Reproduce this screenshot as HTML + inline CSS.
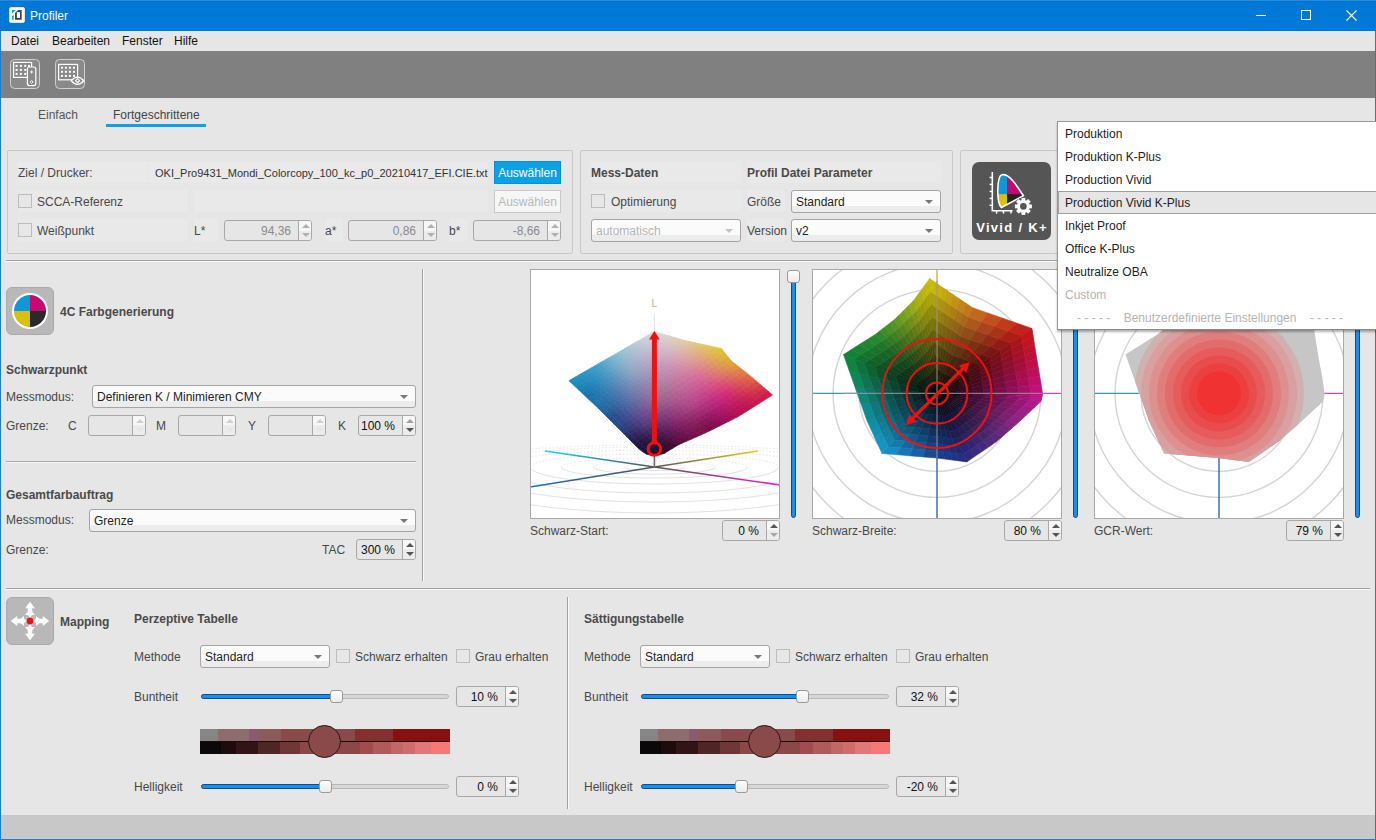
<!DOCTYPE html><html><head><meta charset="utf-8"><style>
*{margin:0;padding:0}
body{width:1376px;height:840px;overflow:hidden;background:#e6e6e6;font-family:"Liberation Sans",sans-serif;font-size:12px;color:#484848;position:relative}
.a{position:absolute}
.t{position:absolute;white-space:nowrap;line-height:14px}
.b{position:absolute;white-space:nowrap;line-height:14px;font-weight:bold;color:#4a4a4a}
.combo{box-sizing:border-box;border:1px solid #a4a4a4;border-radius:3px;background:linear-gradient(#fbfbfb 0,#fbfbfb 70%,#ececec 70%);white-space:nowrap;line-height:14px}
.tri{position:absolute;width:0;height:0;border-left:4px solid transparent;border-right:4px solid transparent;border-top:4px solid #777}
.spin{box-sizing:border-box;border:1px solid #a8a8a8;border-radius:3px;background:#e6e6e6;white-space:nowrap;line-height:14px;overflow:hidden}
.sb{position:absolute;top:0;width:14px;border-left:1px solid #a8a8a8;background:linear-gradient(#f7f7f7 0,#f7f7f7 50%,#ececec 50%)}
.up{position:absolute;left:3px;top:3px;width:0;height:0;border-left:4px solid transparent;border-right:4px solid transparent;border-bottom:4px solid #555}
.dn{position:absolute;left:3px;bottom:3px;width:0;height:0;border-left:4px solid transparent;border-right:4px solid transparent;border-top:4px solid #555}
.thumb{width:13px;height:13px;box-sizing:border-box;border:1px solid #9a9a9a;border-radius:3px;background:linear-gradient(#fdfdfd,#ececec)}
.grp{position:absolute;box-sizing:border-box;border:1px solid #c8c8c8;border-radius:2px}
.cell{position:absolute;background:#e8e8e8}
</style></head><body>
<div class="a" style="left:0px;top:0px;width:1376px;height:31px;background:#0078d7"></div>
<div class="a" style="left:0px;top:0px;width:1376px;height:1px;background:#2a8ad8"></div>
<svg class="a" style="left:9px;top:7px" width="16" height="16" viewBox="0 0 16 16"><rect x="0.5" y="0.5" width="15" height="15" rx="1.5" fill="#fff" stroke="#eadcd0"/><path d="M2.9 3H6.7L2.9 6.7z" fill="#1a9ad6"/><path d="M2.9 8.9L4.7 7.9V12.8H2.9z" fill="#1a9ad6"/><path d="M6 6L9.2 3H12.7V12.7H6z" fill="#444"/><rect x="7.9" y="5.2" width="3.1" height="5.7" fill="#fff"/></svg>
<div class="t" style="left:30px;top:9px;color:#fff;font-size:12px">Profiler</div>
<div class="a" style="left:1256px;top:15px;width:10px;height:1px;background:#fff"></div>
<div class="a" style="left:1301px;top:10px;width:10px;height:10px;box-sizing:border-box;border:1px solid #fff"></div>
<svg class="a" style="left:1346px;top:10px" width="11" height="11" viewBox="0 0 11 11"><path d="M0.5 0.5L10.5 10.5M10.5 0.5L0.5 10.5" stroke="#fff" stroke-width="1.1"/></svg>
<div class="a" style="left:0px;top:31px;width:1px;height:809px;background:#1a7fd4"></div>
<div class="a" style="left:1375px;top:31px;width:1px;height:809px;background:#1a7fd4"></div>
<div class="a" style="left:0px;top:839px;width:1376px;height:1px;background:#1a7fd4"></div>
<div class="a" style="left:1px;top:31px;width:1374px;height:20px;background:#e6e6e6"></div>
<div class="t" style="left:11px;top:34px;color:#111">Datei</div>
<div class="t" style="left:52px;top:34px;color:#111">Bearbeiten</div>
<div class="t" style="left:122px;top:34px;color:#111">Fenster</div>
<div class="t" style="left:174px;top:34px;color:#111">Hilfe</div>
<div class="a" style="left:1px;top:51px;width:1374px;height:47px;background:#808080"></div>
<svg class="a" style="left:10px;top:59px" width="30" height="30" viewBox="0 0 30 30"><rect x="0.5" y="0.5" width="29" height="29" rx="4" fill="#8a8a8a" stroke="#d0d0d0"/><rect x="3.6" y="3.4" width="18" height="15" fill="none" stroke="#fff" stroke-width="1.2"/><rect x="5.6" y="5.9" width="2" height="2" fill="#fff"/><rect x="5.6" y="9.9" width="2" height="2" fill="#fff"/><rect x="5.6" y="13.9" width="2" height="2" fill="#fff"/><rect x="9.9" y="5.9" width="2" height="2" fill="#fff"/><rect x="9.9" y="9.9" width="2" height="2" fill="#fff"/><rect x="9.9" y="13.9" width="2" height="2" fill="#fff"/><rect x="14.2" y="5.9" width="2" height="2" fill="#fff"/><rect x="14.2" y="9.9" width="2" height="2" fill="#fff"/><rect x="14.2" y="13.9" width="2" height="2" fill="#fff"/><rect x="18" y="5.9" width="2" height="2" fill="#fff"/><rect x="18" y="9.9" width="2" height="2" fill="#fff"/><rect x="18" y="13.9" width="2" height="2" fill="#fff"/><rect x="17.4" y="8" width="8.4" height="18.6" rx="2" fill="#8a8a8a" stroke="#fff" stroke-width="1.2"/><path d="M21.6 11.5v3M20.1 13h3" stroke="#fff" stroke-width="0.9"/><path d="M21.6 21.6l1.4 1.4-1.4 1.4-1.4-1.4z" fill="none" stroke="#fff" stroke-width="0.9"/></svg>
<svg class="a" style="left:55px;top:59px" width="30" height="30" viewBox="0 0 30 30"><rect x="0.5" y="0.5" width="29" height="29" rx="4" fill="#8a8a8a" stroke="#d0d0d0"/><rect x="3.6" y="5.4" width="19" height="15.4" fill="none" stroke="#fff" stroke-width="1.2"/><rect x="6" y="7.699999999999999" width="2" height="2" fill="#fff"/><rect x="6" y="11.8" width="2" height="2" fill="#fff"/><rect x="6" y="15.899999999999999" width="2" height="2" fill="#fff"/><rect x="9.9" y="7.699999999999999" width="2" height="2" fill="#fff"/><rect x="9.9" y="11.8" width="2" height="2" fill="#fff"/><rect x="9.9" y="15.899999999999999" width="2" height="2" fill="#fff"/><rect x="13.9" y="7.699999999999999" width="2" height="2" fill="#fff"/><rect x="13.9" y="11.8" width="2" height="2" fill="#fff"/><rect x="13.9" y="15.899999999999999" width="2" height="2" fill="#fff"/><rect x="18" y="7.699999999999999" width="2" height="2" fill="#fff"/><rect x="18" y="11.8" width="2" height="2" fill="#fff"/><rect x="18" y="15.899999999999999" width="2" height="2" fill="#fff"/><path d="M16.2 21.7Q22.5 14.5 28.8 21.7Q22.5 28.9 16.2 21.7z" fill="#8a8a8a" stroke="#fff" stroke-width="1.3"/><path d="M22.5 19.7l2 2-2 2-2-2z" fill="none" stroke="#fff" stroke-width="1.1"/></svg>
<div class="a" style="left:1px;top:815px;width:1374px;height:24px;background:#c8c8c8"></div>
<div class="t" style="left:38px;top:108px;color:#555">Einfach</div>
<div class="t" style="left:113px;top:108px;color:#444">Fortgeschrittene</div>
<div class="a" style="left:106px;top:124px;width:100px;height:3px;background:#0ea0e6"></div>
<div class="grp" style="left:7px;top:150px;width:566px;height:104px"></div>
<div class="a" style="left:18px;top:161px;width:130px;height:22px;background:#e9e9e9"></div>
<div class="a" style="left:149px;top:161px;width:339px;height:22px;background:#e9e9e9"></div>
<div class="a" style="left:18px;top:190px;width:170px;height:22px;background:#e9e9e9"></div>
<div class="a" style="left:194px;top:190px;width:294px;height:22px;background:#e9e9e9"></div>
<div class="a" style="left:18px;top:219px;width:170px;height:22px;background:#e9e9e9"></div>
<div class="a" style="left:194px;top:219px;width:24px;height:22px;background:#e9e9e9"></div>
<div class="a" style="left:325px;top:219px;width:18px;height:22px;background:#e9e9e9"></div>
<div class="a" style="left:449px;top:219px;width:19px;height:22px;background:#e9e9e9"></div>
<div class="a" style="left:591px;top:161px;width:150px;height:22px;background:#e9e9e9"></div>
<div class="a" style="left:747px;top:161px;width:194px;height:22px;background:#e9e9e9"></div>
<div class="a" style="left:591px;top:190px;width:150px;height:22px;background:#e9e9e9"></div>
<div class="a" style="left:747px;top:190px;width:38px;height:22px;background:#e9e9e9"></div>
<div class="a" style="left:747px;top:219px;width:38px;height:22px;background:#e9e9e9"></div>
<div class="t" style="left:18px;top:166px;">Ziel / Drucker:</div>
<div class="t" style="left:155px;top:166px;font-size:11px;letter-spacing:0px;color:#333">OKI_Pro9431_Mondi_Colorcopy_100_kc_p0_20210417_EFI.CIE.txt</div>
<div class="a" style="left:494px;top:161px;width:67px;height:23px;box-sizing:border-box;background:#0ca0e4;border:1px solid #0a90d0;color:#fff;text-align:center;line-height:21px;padding-top:1px">Auswählen</div>
<div class="a" style="left:18px;top:194px;width:14px;height:14px;box-sizing:border-box;border:1px solid #bcbcbc;background:#e7e7e7"></div>
<div class="t" style="left:37px;top:195px;">SCCA-Referenz</div>
<div class="a" style="left:494px;top:190px;width:67px;height:23px;box-sizing:border-box;background:#f6f6f6;border:1px solid #c8c8c8;color:#b8b8b8;text-align:center;line-height:21px;padding-top:1px">Auswählen</div>
<div class="a" style="left:18px;top:223px;width:14px;height:14px;box-sizing:border-box;border:1px solid #bcbcbc;background:#e7e7e7"></div>
<div class="t" style="left:37px;top:224px;">Weißpunkt</div>
<div class="t" style="left:194px;top:224px;">L*</div>
<div class="a spin" style="left:224px;top:220px;width:88px;height:21px"><span style="position:absolute;right:20px;top:3px;color:#8a8a8a">94,36</span><div class="sb" style="left:73px;height:19px"><i class="up" style="border-bottom-color:#b0b0b0"></i><i class="dn" style="border-top-color:#b0b0b0"></i></div></div>
<div class="t" style="left:325px;top:224px;">a*</div>
<div class="a spin" style="left:348px;top:220px;width:89px;height:21px"><span style="position:absolute;right:20px;top:3px;color:#8a8a8a">0,86</span><div class="sb" style="left:74px;height:19px"><i class="up" style="border-bottom-color:#b0b0b0"></i><i class="dn" style="border-top-color:#b0b0b0"></i></div></div>
<div class="t" style="left:449px;top:224px;">b*</div>
<div class="a spin" style="left:473px;top:220px;width:88px;height:21px"><span style="position:absolute;right:20px;top:3px;color:#8a8a8a">-8,66</span><div class="sb" style="left:73px;height:19px"><i class="up" style="border-bottom-color:#b0b0b0"></i><i class="dn" style="border-top-color:#b0b0b0"></i></div></div>
<div class="grp" style="left:580px;top:150px;width:373px;height:104px"></div>
<div class="b" style="left:591px;top:166px;">Mess-Daten</div>
<div class="b" style="left:747px;top:166px;">Profil Datei Parameter</div>
<div class="a" style="left:591px;top:194px;width:14px;height:14px;box-sizing:border-box;border:1px solid #bcbcbc;background:#e7e7e7"></div>
<div class="t" style="left:611px;top:195px;">Optimierung</div>
<div class="a combo" style="left:591px;top:219px;width:150px;height:23px"><span style="position:absolute;left:4px;top:4px;color:#b4b4b4">automatisch</span><i class="tri" style="right:7px;top:9px;border-top-color:#c4c4c4"></i></div>
<div class="t" style="left:747px;top:195px;">Größe</div>
<div class="a combo" style="left:791px;top:190px;width:150px;height:23px"><span style="position:absolute;left:4px;top:4px;color:#222">Standard</span><i class="tri" style="right:7px;top:9px;border-top-color:#777"></i></div>
<div class="t" style="left:747px;top:224px;">Version</div>
<div class="a combo" style="left:791px;top:219px;width:150px;height:23px"><span style="position:absolute;left:4px;top:4px;color:#222">v2</span><i class="tri" style="right:7px;top:9px;border-top-color:#777"></i></div>
<div class="grp" style="left:960px;top:150px;width:120px;height:104px"></div>
<div class="a" style="left:972px;top:162px;width:79px;height:78px;background:#555;border-radius:7px"></div>
<svg class="a" style="left:972px;top:162px" width="79" height="78" viewBox="0 0 79 78"><path d="M20.3 10v38.7h20.3" fill="none" stroke="#fff" stroke-width="1.6"/><path d="M17.6 15.5h2.7" stroke="#fff" stroke-width="1.5"/><path d="M17.6 22.4h2.7" stroke="#fff" stroke-width="1.5"/><path d="M17.6 29.4h2.7" stroke="#fff" stroke-width="1.5"/><path d="M17.6 36.4h2.7" stroke="#fff" stroke-width="1.5"/><path d="M17.6 43.3h2.7" stroke="#fff" stroke-width="1.5"/><path d="M24.6 48.7v2.9" stroke="#fff" stroke-width="1.5"/><path d="M31.5 48.7v2.9" stroke="#fff" stroke-width="1.5"/><path d="M39 48.7v2.9" stroke="#fff" stroke-width="1.5"/><clipPath id="vg"><path d="M29.9 12.8C25 14 24 40 29.4 45.5L51.3 33.7C45 24 37 11 29.9 12.8z"/></clipPath><g clip-path="url(#vg)"><rect x="20" y="5" width="15.1" height="27.1" fill="#0e98dc"/><rect x="35.1" y="5" width="20" height="27.1" fill="#c8086c"/><rect x="20" y="32.1" width="15.1" height="25" fill="#d8c010"/><rect x="35.1" y="32.1" width="20" height="25" fill="#222"/></g><path d="M29.9 12.8C25 14 24 40 29.4 45.5L51.3 33.7C45 24 37 11 29.9 12.8z" fill="none" stroke="#fff" stroke-width="1.6"/><circle cx="51.4" cy="44.4" r="9.2" fill="#555"/><rect x="49.5" y="35.9" width="3.8" height="4" fill="#fff" transform="rotate(0 51.4 44.4)"/><rect x="49.5" y="35.9" width="3.8" height="4" fill="#fff" transform="rotate(45 51.4 44.4)"/><rect x="49.5" y="35.9" width="3.8" height="4" fill="#fff" transform="rotate(90 51.4 44.4)"/><rect x="49.5" y="35.9" width="3.8" height="4" fill="#fff" transform="rotate(135 51.4 44.4)"/><rect x="49.5" y="35.9" width="3.8" height="4" fill="#fff" transform="rotate(180 51.4 44.4)"/><rect x="49.5" y="35.9" width="3.8" height="4" fill="#fff" transform="rotate(225 51.4 44.4)"/><rect x="49.5" y="35.9" width="3.8" height="4" fill="#fff" transform="rotate(270 51.4 44.4)"/><rect x="49.5" y="35.9" width="3.8" height="4" fill="#fff" transform="rotate(315 51.4 44.4)"/><circle cx="51.4" cy="44.4" r="6.4" fill="#fff"/><circle cx="51.4" cy="44.4" r="3.3" fill="#555"/></svg>
<div class="a" style="left:972px;top:221px;width:79px;text-align:center;color:#fff;font-weight:bold;font-size:13px;line-height:14px;letter-spacing:1.3px;text-indent:1px">Vivid / K+</div>
<div class="a" style="left:6px;top:260px;width:1364px;height:1px;background:#a0a0a0"></div>
<div class="a" style="left:6px;top:261px;width:1364px;height:1px;background:#fafafa"></div>
<div class="a" style="left:6px;top:588px;width:1364px;height:1px;background:#a0a0a0"></div>
<div class="a" style="left:6px;top:589px;width:1364px;height:1px;background:#fafafa"></div>
<div class="a" style="left:422px;top:269px;width:1px;height:312px;background:#a0a0a0"></div>
<div class="a" style="left:423px;top:269px;width:1px;height:312px;background:#fafafa"></div>
<div class="a" style="left:567px;top:597px;width:1px;height:212px;background:#a0a0a0"></div>
<div class="a" style="left:568px;top:597px;width:1px;height:212px;background:#fafafa"></div>
<div class="a" style="left:6px;top:287px;width:48px;height:48px;box-sizing:border-box;background:#b8b8b8;border:1px solid #aaa;border-radius:6px"></div>
<svg class="a" style="left:12px;top:293px" width="36" height="36" viewBox="0 0 36 36"><circle cx="18" cy="18" r="18" fill="#fff"/><path d="M18 18V2A16 16 0 0 0 2 18z" fill="#0e98dc"/><path d="M18 18V2A16 16 0 0 1 34 18z" fill="#c8086c"/><path d="M18 18H34A16 16 0 0 1 18 34z" fill="#2a2a2a"/><path d="M18 18H2A16 16 0 0 0 18 34z" fill="#d8c010"/></svg>
<div class="b" style="left:60px;top:305px;">4C Farbgenerierung</div>
<div class="b" style="left:6px;top:363px;">Schwarzpunkt</div>
<div class="t" style="left:6px;top:390px;">Messmodus:</div>
<div class="a combo" style="left:92px;top:385px;width:324px;height:23px"><span style="position:absolute;left:4px;top:4px;color:#222">Definieren K / Minimieren CMY</span><i class="tri" style="right:7px;top:9px;border-top-color:#777"></i></div>
<div class="t" style="left:6px;top:419px;">Grenze:</div>
<div class="t" style="left:68px;top:419px;">C</div>
<div class="a spin" style="left:88px;top:415px;width:58px;height:21px"><span style="position:absolute;right:20px;top:3px;color:#111"></span><div class="sb" style="left:43px;height:19px"><i class="up" style="border-bottom-color:#d0d0d0"></i><i class="dn" style="border-top-color:#e6e6e6"></i></div></div>
<div class="t" style="left:156px;top:419px;">M</div>
<div class="a spin" style="left:178px;top:415px;width:58px;height:21px"><span style="position:absolute;right:20px;top:3px;color:#111"></span><div class="sb" style="left:43px;height:19px"><i class="up" style="border-bottom-color:#d0d0d0"></i><i class="dn" style="border-top-color:#e6e6e6"></i></div></div>
<div class="t" style="left:248px;top:419px;">Y</div>
<div class="a spin" style="left:268px;top:415px;width:58px;height:21px"><span style="position:absolute;right:20px;top:3px;color:#111"></span><div class="sb" style="left:43px;height:19px"><i class="up" style="border-bottom-color:#d0d0d0"></i><i class="dn" style="border-top-color:#e6e6e6"></i></div></div>
<div class="t" style="left:338px;top:419px;">K</div>
<div class="a spin" style="left:358px;top:415px;width:58px;height:21px"><span style="position:absolute;right:20px;top:3px;color:#111">100 %</span><div class="sb" style="left:43px;height:19px"><i class="up" style="border-bottom-color:#a0a0a0"></i><i class="dn" style="border-top-color:#555"></i></div></div>
<div class="a" style="left:6px;top:461px;width:410px;height:1px;background:#a8a8a8"></div>
<div class="a" style="left:6px;top:462px;width:410px;height:1px;background:#f6f6f6"></div>
<div class="b" style="left:6px;top:488px;">Gesamtfarbauftrag</div>
<div class="t" style="left:6px;top:513px;">Messmodus:</div>
<div class="a combo" style="left:89px;top:509px;width:327px;height:23px"><span style="position:absolute;left:4px;top:4px;color:#222">Grenze</span><i class="tri" style="right:7px;top:9px;border-top-color:#777"></i></div>
<div class="t" style="left:6px;top:543px;">Grenze:</div>
<div class="t" style="left:322px;top:543px;">TAC</div>
<div class="a spin" style="left:356px;top:539px;width:60px;height:21px"><span style="position:absolute;right:20px;top:3px;color:#111">300 %</span><div class="sb" style="left:45px;height:19px"><i class="up" style="border-bottom-color:#555"></i><i class="dn" style="border-top-color:#555"></i></div></div>
<svg class="a" style="left:530px;top:269px" width="250" height="250" viewBox="0 0 250 250"><rect x="0" y="0" width="250" height="250" fill="#fff"/><path d="M94.4 198 A30 3.0 0 0 1 154.4 198" fill="none" stroke="#e6e6e6" stroke-width="1" stroke-dasharray="1.5 2"/><path d="M94.4 198 A30 3.6 0 0 0 154.4 198" fill="none" stroke="#e2e2e2" stroke-width="1"/><path d="M63.4 198 A61 6.0 0 0 1 185.4 198" fill="none" stroke="#e6e6e6" stroke-width="1" stroke-dasharray="1.5 2"/><path d="M63.4 198 A61 7.2 0 0 0 185.4 198" fill="none" stroke="#e2e2e2" stroke-width="1"/><path d="M31.4 198 A93 9.0 0 0 1 217.4 198" fill="none" stroke="#e6e6e6" stroke-width="1" stroke-dasharray="1.5 2"/><path d="M31.4 198 A93 11.0 0 0 0 217.4 198" fill="none" stroke="#e2e2e2" stroke-width="1"/><path d="M0.4 198 A124 13.0 0 0 1 248.4 198" fill="none" stroke="#e6e6e6" stroke-width="1" stroke-dasharray="1.5 2"/><path d="M0.4 198 A124 17.0 0 0 0 248.4 198" fill="none" stroke="#e2e2e2" stroke-width="1"/><path d="M-30.6 198 A155 17.0 0 0 1 279.4 198" fill="none" stroke="#e6e6e6" stroke-width="1" stroke-dasharray="1.5 2"/><path d="M-30.6 198 A155 26.0 0 0 0 279.4 198" fill="none" stroke="#e2e2e2" stroke-width="1"/><path d="M-61.6 198 A186 20.0 0 0 1 310.4 198" fill="none" stroke="#e6e6e6" stroke-width="1" stroke-dasharray="1.5 2"/><path d="M-61.6 198 A186 35.0 0 0 0 310.4 198" fill="none" stroke="#e2e2e2" stroke-width="1"/><path d="M-92.6 198 A217 22.0 0 0 1 341.4 198" fill="none" stroke="#e6e6e6" stroke-width="1" stroke-dasharray="1.5 2"/><path d="M-92.6 198 A217 46.0 0 0 0 341.4 198" fill="none" stroke="#e2e2e2" stroke-width="1"/><defs><linearGradient id="ac" x1="124" y1="198" x2="15" y2="182" gradientUnits="userSpaceOnUse"><stop offset="0" stop-color="#555"/><stop offset="1" stop-color="#10d8e8"/></linearGradient><linearGradient id="ay" x1="124" y1="198" x2="228" y2="182" gradientUnits="userSpaceOnUse"><stop offset="0" stop-color="#555"/><stop offset="1" stop-color="#e0d020"/></linearGradient><linearGradient id="ab" x1="124" y1="198" x2="0" y2="218" gradientUnits="userSpaceOnUse"><stop offset="0" stop-color="#555"/><stop offset="1" stop-color="#1a6ac0"/></linearGradient><linearGradient id="am" x1="124" y1="198" x2="250" y2="216" gradientUnits="userSpaceOnUse"><stop offset="0" stop-color="#555"/><stop offset="1" stop-color="#e820d0"/></linearGradient></defs><line x1="124.4" y1="198" x2="15" y2="182" stroke="url(#ac)" stroke-width="1.6"/><line x1="124.4" y1="198" x2="228" y2="182" stroke="url(#ay)" stroke-width="1.6"/><line x1="124.4" y1="198" x2="0" y2="218" stroke="url(#ab)" stroke-width="1.6"/><line x1="124.4" y1="198" x2="250" y2="216" stroke="url(#am)" stroke-width="1.6"/><line x1="124.4" y1="198" x2="124.4" y2="45" stroke="#e4e4e4" stroke-width="1.2"/><line x1="124.4" y1="198" x2="124.4" y2="186" stroke="#6a6a6a" stroke-width="1.6"/><text x="124.4" y="38" font-size="10" fill="#aaa" text-anchor="middle" font-family="Liberation Sans">L</text><polygon points="124.3,62.6 129.4,64.1 126.1,66.0 121.0,64.5" fill="#dad6db" stroke="#dad6db" stroke-width="0.7"/><polygon points="129.4,64.1 134.5,65.6 131.1,67.6 126.1,66.0" fill="#d9d4d7" stroke="#d9d4d7" stroke-width="0.7"/><polygon points="134.5,65.6 139.7,67.1 136.2,69.2 131.1,67.6" fill="#dbd1cd" stroke="#dbd1cd" stroke-width="0.7"/><polygon points="139.7,67.1 144.8,68.5 141.2,70.7 136.2,69.2" fill="#dccec3" stroke="#dccec3" stroke-width="0.7"/><polygon points="144.8,68.5 149.9,70.0 146.3,72.3 141.2,70.7" fill="#deccb8" stroke="#deccb8" stroke-width="0.7"/><polygon points="149.9,70.0 155.0,71.5 151.3,73.8 146.3,72.3" fill="#e0cbae" stroke="#e0cbae" stroke-width="0.7"/><polygon points="155.0,71.5 160.2,72.7 156.5,75.1 151.3,73.8" fill="#e1c9a1" stroke="#e1c9a1" stroke-width="0.7"/><polygon points="160.2,72.7 165.4,73.8 161.6,76.3 156.5,75.1" fill="#e2c693" stroke="#e2c693" stroke-width="0.7"/><polygon points="165.4,73.8 170.6,75.0 166.8,77.6 161.6,76.3" fill="#e2c484" stroke="#e2c484" stroke-width="0.7"/><polygon points="170.6,75.0 175.8,76.1 171.9,78.8 166.8,77.6" fill="#e2c374" stroke="#e2c374" stroke-width="0.7"/><polygon points="175.8,76.1 181.0,77.3 177.0,80.1 171.9,78.8" fill="#e2c263" stroke="#e2c263" stroke-width="0.7"/><polygon points="181.0,77.3 186.3,78.4 182.2,81.3 177.0,80.1" fill="#e2c351" stroke="#e2c351" stroke-width="0.7"/><polygon points="186.3,78.4 191.5,79.6 187.3,82.5 182.2,81.3" fill="#e1c53e" stroke="#e1c53e" stroke-width="0.7"/><polygon points="191.5,79.6 194.8,83.7 190.7,86.6 187.3,82.5" fill="#e0c135" stroke="#e0c135" stroke-width="0.7"/><polygon points="194.8,83.7 198.1,87.9 194.0,90.8 190.7,86.6" fill="#e1b53a" stroke="#e1b53a" stroke-width="0.7"/><polygon points="198.1,87.9 201.4,92.0 197.3,94.9 194.0,90.8" fill="#e1a93e" stroke="#e1a93e" stroke-width="0.7"/><polygon points="201.4,92.0 205.6,95.3 201.4,98.2 197.3,94.9" fill="#e1a03f" stroke="#e1a03f" stroke-width="0.7"/><polygon points="205.6,95.3 209.8,98.6 205.6,101.5 201.4,98.2" fill="#e19440" stroke="#e19440" stroke-width="0.7"/><polygon points="209.8,98.6 214.0,101.9 209.8,104.8 205.6,101.5" fill="#e18442" stroke="#e18442" stroke-width="0.7"/><polygon points="214.0,101.9 218.2,105.2 213.9,108.1 209.8,104.8" fill="#e17643" stroke="#e17643" stroke-width="0.7"/><polygon points="218.2,105.2 222.3,108.7 217.9,111.6 213.9,108.1" fill="#e06943" stroke="#e06943" stroke-width="0.7"/><polygon points="222.3,108.7 226.3,112.1 222.0,115.1 217.9,111.6" fill="#df5d42" stroke="#df5d42" stroke-width="0.7"/><polygon points="226.3,112.1 230.4,115.6 226.0,118.5 222.0,115.1" fill="#db4c44" stroke="#db4c44" stroke-width="0.7"/><polygon points="230.4,115.6 234.4,119.1 230.0,122.0 226.0,118.5" fill="#d73b45" stroke="#d73b45" stroke-width="0.7"/><polygon points="234.4,119.1 238.5,122.5 234.1,125.4 230.0,122.0" fill="#d42b46" stroke="#d42b46" stroke-width="0.7"/><polygon points="238.5,122.5 242.5,126.0 238.2,128.7 234.1,125.4" fill="#d01c48" stroke="#d01c48" stroke-width="0.7"/><polygon points="121.0,64.5 126.1,66.0 122.7,68.0 117.7,66.4" fill="#d6d4db" stroke="#d6d4db" stroke-width="0.7"/><polygon points="126.1,66.0 131.1,67.6 127.7,69.6 122.7,68.0" fill="#d7d1d9" stroke="#d7d1d9" stroke-width="0.7"/><polygon points="131.1,67.6 136.2,69.2 132.7,71.3 127.7,69.6" fill="#d8ced2" stroke="#d8ced2" stroke-width="0.7"/><polygon points="136.2,69.2 141.2,70.7 137.7,72.9 132.7,71.3" fill="#dacbc9" stroke="#dacbc9" stroke-width="0.7"/><polygon points="141.2,70.7 146.3,72.3 142.7,74.5 137.7,72.9" fill="#dcc8bf" stroke="#dcc8bf" stroke-width="0.7"/><polygon points="146.3,72.3 151.3,73.8 147.7,76.2 142.7,74.5" fill="#ddc6b5" stroke="#ddc6b5" stroke-width="0.7"/><polygon points="151.3,73.8 156.5,75.1 152.7,77.5 147.7,76.2" fill="#dfc5aa" stroke="#dfc5aa" stroke-width="0.7"/><polygon points="156.5,75.1 161.6,76.3 157.8,78.8 152.7,77.5" fill="#e0c29e" stroke="#e0c29e" stroke-width="0.7"/><polygon points="161.6,76.3 166.8,77.6 162.9,80.2 157.8,78.8" fill="#e1bf90" stroke="#e1bf90" stroke-width="0.7"/><polygon points="166.8,77.6 171.9,78.8 167.9,81.5 162.9,80.2" fill="#e1bc81" stroke="#e1bc81" stroke-width="0.7"/><polygon points="171.9,78.8 177.0,80.1 173.0,82.8 167.9,81.5" fill="#e1bb72" stroke="#e1bb72" stroke-width="0.7"/><polygon points="177.0,80.1 182.2,81.3 178.1,84.2 173.0,82.8" fill="#e1bb61" stroke="#e1bb61" stroke-width="0.7"/><polygon points="182.2,81.3 187.3,82.5 183.1,85.5 178.1,84.2" fill="#e1bc50" stroke="#e1bc50" stroke-width="0.7"/><polygon points="187.3,82.5 190.7,86.6 186.5,89.6 183.1,85.5" fill="#e0b845" stroke="#e0b845" stroke-width="0.7"/><polygon points="190.7,86.6 194.0,90.8 189.8,93.7 186.5,89.6" fill="#e0ac46" stroke="#e0ac46" stroke-width="0.7"/><polygon points="194.0,90.8 197.3,94.9 193.1,97.8 189.8,93.7" fill="#e0a049" stroke="#e0a049" stroke-width="0.7"/><polygon points="197.3,94.9 201.4,98.2 197.2,101.1 193.1,97.8" fill="#e0954a" stroke="#e0954a" stroke-width="0.7"/><polygon points="201.4,98.2 205.6,101.5 201.4,104.4 197.2,101.1" fill="#e08b4a" stroke="#e08b4a" stroke-width="0.7"/><polygon points="205.6,101.5 209.8,104.8 205.5,107.7 201.4,104.4" fill="#e07c4b" stroke="#e07c4b" stroke-width="0.7"/><polygon points="209.8,104.8 213.9,108.1 209.6,111.1 205.5,107.7" fill="#df6e4b" stroke="#df6e4b" stroke-width="0.7"/><polygon points="213.9,108.1 217.9,111.6 213.6,114.5 209.6,111.1" fill="#de604a" stroke="#de604a" stroke-width="0.7"/><polygon points="217.9,111.6 222.0,115.1 217.6,118.0 213.6,114.5" fill="#db5349" stroke="#db5349" stroke-width="0.7"/><polygon points="222.0,115.1 226.0,118.5 221.6,121.5 217.6,118.0" fill="#d84549" stroke="#d84549" stroke-width="0.7"/><polygon points="226.0,118.5 230.0,122.0 225.7,124.9 221.6,121.5" fill="#d43649" stroke="#d43649" stroke-width="0.7"/><polygon points="230.0,122.0 234.1,125.4 229.7,128.2 225.7,124.9" fill="#d12849" stroke="#d12849" stroke-width="0.7"/><polygon points="234.1,125.4 238.2,128.7 233.8,131.5 229.7,128.2" fill="#cd1c49" stroke="#cd1c49" stroke-width="0.7"/><polygon points="117.7,66.4 122.7,68.0 119.4,70.0 114.4,68.3" fill="#d0d2da" stroke="#d0d2da" stroke-width="0.7"/><polygon points="122.7,68.0 127.7,69.6 124.3,71.7 119.4,70.0" fill="#d4cfd9" stroke="#d4cfd9" stroke-width="0.7"/><polygon points="127.7,69.6 132.7,71.3 129.2,73.4 124.3,71.7" fill="#d5ccd5" stroke="#d5ccd5" stroke-width="0.7"/><polygon points="132.7,71.3 137.7,72.9 134.2,75.1 129.2,73.4" fill="#d7c8cd" stroke="#d7c8cd" stroke-width="0.7"/><polygon points="137.7,72.9 142.7,74.5 139.1,76.8 134.2,75.1" fill="#d9c4c5" stroke="#d9c4c5" stroke-width="0.7"/><polygon points="142.7,74.5 147.7,76.2 144.0,78.5 139.1,76.8" fill="#dbc1bb" stroke="#dbc1bb" stroke-width="0.7"/><polygon points="147.7,76.2 152.7,77.5 149.0,79.9 144.0,78.5" fill="#ddbfb2" stroke="#ddbfb2" stroke-width="0.7"/><polygon points="152.7,77.5 157.8,78.8 154.0,81.4 149.0,79.9" fill="#debca7" stroke="#debca7" stroke-width="0.7"/><polygon points="157.8,78.8 162.9,80.2 159.0,82.8 154.0,81.4" fill="#dfb99a" stroke="#dfb99a" stroke-width="0.7"/><polygon points="162.9,80.2 167.9,81.5 164.0,84.2 159.0,82.8" fill="#e0b68d" stroke="#e0b68d" stroke-width="0.7"/><polygon points="167.9,81.5 173.0,82.8 169.0,85.6 164.0,84.2" fill="#e0b380" stroke="#e0b380" stroke-width="0.7"/><polygon points="173.0,82.8 178.1,84.2 174.0,87.1 169.0,85.6" fill="#e0b271" stroke="#e0b271" stroke-width="0.7"/><polygon points="178.1,84.2 183.1,85.5 179.0,88.5 174.0,87.1" fill="#e0b162" stroke="#e0b162" stroke-width="0.7"/><polygon points="183.1,85.5 186.5,89.6 182.3,92.5 179.0,88.5" fill="#e0ac58" stroke="#e0ac58" stroke-width="0.7"/><polygon points="186.5,89.6 189.8,93.7 185.6,96.6 182.3,92.5" fill="#dfa157" stroke="#dfa157" stroke-width="0.7"/><polygon points="189.8,93.7 193.1,97.8 188.9,100.7 185.6,96.6" fill="#df9558" stroke="#df9558" stroke-width="0.7"/><polygon points="193.1,97.8 197.2,101.1 193.0,104.0 188.9,100.7" fill="#df8957" stroke="#df8957" stroke-width="0.7"/><polygon points="197.2,101.1 201.4,104.4 197.1,107.4 193.0,104.0" fill="#df7e56" stroke="#df7e56" stroke-width="0.7"/><polygon points="201.4,104.4 205.5,107.7 201.2,110.7 197.1,107.4" fill="#de7056" stroke="#de7056" stroke-width="0.7"/><polygon points="205.5,107.7 209.6,111.1 205.3,114.0 201.2,110.7" fill="#dd6355" stroke="#dd6355" stroke-width="0.7"/><polygon points="209.6,111.1 213.6,114.5 209.3,117.5 205.3,114.0" fill="#db5654" stroke="#db5654" stroke-width="0.7"/><polygon points="213.6,114.5 217.6,118.0 213.3,121.0 209.3,117.5" fill="#d84951" stroke="#d84951" stroke-width="0.7"/><polygon points="217.6,118.0 221.6,121.5 217.3,124.4 213.3,121.0" fill="#d43d4f" stroke="#d43d4f" stroke-width="0.7"/><polygon points="221.6,121.5 225.7,124.9 221.3,127.8 217.3,124.4" fill="#d1304d" stroke="#d1304d" stroke-width="0.7"/><polygon points="225.7,124.9 229.7,128.2 225.4,131.0 221.3,127.8" fill="#cd254c" stroke="#cd254c" stroke-width="0.7"/><polygon points="229.7,128.2 233.8,131.5 229.5,134.2 225.4,131.0" fill="#ca1b4a" stroke="#ca1b4a" stroke-width="0.7"/><polygon points="114.4,68.3 119.4,70.0 116.0,71.9 111.2,70.2" fill="#cbd0d9" stroke="#cbd0d9" stroke-width="0.7"/><polygon points="119.4,70.0 124.3,71.7 120.9,73.7 116.0,71.9" fill="#cfcdd8" stroke="#cfcdd8" stroke-width="0.7"/><polygon points="124.3,71.7 129.2,73.4 125.7,75.5 120.9,73.7" fill="#d1c9d5" stroke="#d1c9d5" stroke-width="0.7"/><polygon points="129.2,73.4 134.2,75.1 130.6,77.3 125.7,75.5" fill="#d3c4d0" stroke="#d3c4d0" stroke-width="0.7"/><polygon points="134.2,75.1 139.1,76.8 135.5,79.1 130.6,77.3" fill="#d5c0c9" stroke="#d5c0c9" stroke-width="0.7"/><polygon points="139.1,76.8 144.0,78.5 140.3,80.9 135.5,79.1" fill="#d7bdc0" stroke="#d7bdc0" stroke-width="0.7"/><polygon points="144.0,78.5 149.0,79.9 145.3,82.4 140.3,80.9" fill="#dab9b8" stroke="#dab9b8" stroke-width="0.7"/><polygon points="149.0,79.9 154.0,81.4 150.2,83.9 145.3,82.4" fill="#dbb6ae" stroke="#dbb6ae" stroke-width="0.7"/><polygon points="154.0,81.4 159.0,82.8 155.1,85.4 150.2,83.9" fill="#ddb3a4" stroke="#ddb3a4" stroke-width="0.7"/><polygon points="159.0,82.8 164.0,84.2 160.0,86.9 155.1,85.4" fill="#deaf98" stroke="#deaf98" stroke-width="0.7"/><polygon points="164.0,84.2 169.0,85.6 165.0,88.4 160.0,86.9" fill="#dfac8d" stroke="#dfac8d" stroke-width="0.7"/><polygon points="169.0,85.6 174.0,87.1 169.9,89.9 165.0,88.4" fill="#dfa980" stroke="#dfa980" stroke-width="0.7"/><polygon points="174.0,87.1 179.0,88.5 174.8,91.4 169.9,89.9" fill="#dfa773" stroke="#dfa773" stroke-width="0.7"/><polygon points="179.0,88.5 182.3,92.5 178.2,95.5 174.8,91.4" fill="#dfa16a" stroke="#dfa16a" stroke-width="0.7"/><polygon points="182.3,92.5 185.6,96.6 181.5,99.5 178.2,95.5" fill="#df9568" stroke="#df9568" stroke-width="0.7"/><polygon points="185.6,96.6 188.9,100.7 184.8,103.6 181.5,99.5" fill="#de8967" stroke="#de8967" stroke-width="0.7"/><polygon points="188.9,100.7 193.0,104.0 188.8,106.9 184.8,103.6" fill="#de7d66" stroke="#de7d66" stroke-width="0.7"/><polygon points="193.0,104.0 197.1,107.4 192.9,110.3 188.8,106.9" fill="#de7164" stroke="#de7164" stroke-width="0.7"/><polygon points="197.1,107.4 201.2,110.7 197.0,113.6 192.9,110.3" fill="#dd6363" stroke="#dd6363" stroke-width="0.7"/><polygon points="201.2,110.7 205.3,114.0 201.0,116.9 197.0,113.6" fill="#dc5661" stroke="#dc5661" stroke-width="0.7"/><polygon points="205.3,114.0 209.3,117.5 205.0,120.4 201.0,116.9" fill="#d94a5e" stroke="#d94a5e" stroke-width="0.7"/><polygon points="209.3,117.5 213.3,121.0 208.9,123.9 205.0,120.4" fill="#d53e5a" stroke="#d53e5a" stroke-width="0.7"/><polygon points="213.3,121.0 217.3,124.4 212.9,127.3 208.9,123.9" fill="#d13356" stroke="#d13356" stroke-width="0.7"/><polygon points="217.3,124.4 221.3,127.8 216.9,130.7 212.9,127.3" fill="#cc2952" stroke="#cc2952" stroke-width="0.7"/><polygon points="221.3,127.8 225.4,131.0 221.0,133.9 216.9,130.7" fill="#c8204f" stroke="#c8204f" stroke-width="0.7"/><polygon points="225.4,131.0 229.5,134.2 225.2,136.9 221.0,133.9" fill="#c5194c" stroke="#c5194c" stroke-width="0.7"/><polygon points="111.2,70.2 116.0,71.9 112.7,73.9 107.9,72.0" fill="#c5ced8" stroke="#c5ced8" stroke-width="0.7"/><polygon points="116.0,71.9 120.9,73.7 117.5,75.8 112.7,73.9" fill="#c9cbd7" stroke="#c9cbd7" stroke-width="0.7"/><polygon points="120.9,73.7 125.7,75.5 122.3,77.6 117.5,75.8" fill="#ccc6d5" stroke="#ccc6d5" stroke-width="0.7"/><polygon points="125.7,75.5 130.6,77.3 127.1,79.5 122.3,77.6" fill="#cfc1d1" stroke="#cfc1d1" stroke-width="0.7"/><polygon points="130.6,77.3 135.5,79.1 131.9,81.3 127.1,79.5" fill="#d1bdcb" stroke="#d1bdcb" stroke-width="0.7"/><polygon points="135.5,79.1 140.3,80.9 136.7,83.2 131.9,81.3" fill="#d4b8c4" stroke="#d4b8c4" stroke-width="0.7"/><polygon points="140.3,80.9 145.3,82.4 141.5,84.8 136.7,83.2" fill="#d6b4bc" stroke="#d6b4bc" stroke-width="0.7"/><polygon points="145.3,82.4 150.2,83.9 146.4,86.4 141.5,84.8" fill="#d8b0b4" stroke="#d8b0b4" stroke-width="0.7"/><polygon points="150.2,83.9 155.1,85.4 151.3,88.0 146.4,86.4" fill="#daacab" stroke="#daacab" stroke-width="0.7"/><polygon points="155.1,85.4 160.0,86.9 156.1,89.6 151.3,88.0" fill="#dca8a2" stroke="#dca8a2" stroke-width="0.7"/><polygon points="160.0,86.9 165.0,88.4 160.9,91.2 156.1,89.6" fill="#dda498" stroke="#dda498" stroke-width="0.7"/><polygon points="165.0,88.4 169.9,89.9 165.8,92.8 160.9,91.2" fill="#dda08d" stroke="#dda08d" stroke-width="0.7"/><polygon points="169.9,89.9 174.8,91.4 170.6,94.4 165.8,92.8" fill="#de9d82" stroke="#de9d82" stroke-width="0.7"/><polygon points="174.8,91.4 178.2,95.5 174.0,98.4 170.6,94.4" fill="#de957b" stroke="#de957b" stroke-width="0.7"/><polygon points="178.2,95.5 181.5,99.5 177.3,102.5 174.0,98.4" fill="#dd8979" stroke="#dd8979" stroke-width="0.7"/><polygon points="181.5,99.5 184.8,103.6 180.6,106.5 177.3,102.5" fill="#dc7d77" stroke="#dc7d77" stroke-width="0.7"/><polygon points="184.8,103.6 188.8,106.9 184.7,109.9 180.6,106.5" fill="#dc7174" stroke="#dc7174" stroke-width="0.7"/><polygon points="188.8,106.9 192.9,110.3 188.7,113.2 184.7,109.9" fill="#dc6571" stroke="#dc6571" stroke-width="0.7"/><polygon points="192.9,110.3 197.0,113.6 192.7,116.5 188.7,113.2" fill="#db576f" stroke="#db576f" stroke-width="0.7"/><polygon points="197.0,113.6 201.0,116.9 196.7,119.9 192.7,116.5" fill="#db496e" stroke="#db496e" stroke-width="0.7"/><polygon points="201.0,116.9 205.0,120.4 200.6,123.4 196.7,119.9" fill="#d83d6a" stroke="#d83d6a" stroke-width="0.7"/><polygon points="205.0,120.4 208.9,123.9 204.6,126.8 200.6,123.4" fill="#d23464" stroke="#d23464" stroke-width="0.7"/><polygon points="208.9,123.9 212.9,127.3 208.5,130.2 204.6,126.8" fill="#cd2a5e" stroke="#cd2a5e" stroke-width="0.7"/><polygon points="212.9,127.3 216.9,130.7 212.6,133.6 208.5,130.2" fill="#c72158" stroke="#c72158" stroke-width="0.7"/><polygon points="216.9,130.7 221.0,133.9 216.7,136.7 212.6,133.6" fill="#c31b53" stroke="#c31b53" stroke-width="0.7"/><polygon points="221.0,133.9 225.2,136.9 220.8,139.7 216.7,136.7" fill="#c1154e" stroke="#c1154e" stroke-width="0.7"/><polygon points="107.9,72.0 112.7,73.9 109.3,75.9 104.6,73.9" fill="#bdccd7" stroke="#bdccd7" stroke-width="0.7"/><polygon points="112.7,73.9 117.5,75.8 114.1,77.8 109.3,75.9" fill="#c3c8d6" stroke="#c3c8d6" stroke-width="0.7"/><polygon points="117.5,75.8 122.3,77.6 118.8,79.7 114.1,77.8" fill="#c7c4d4" stroke="#c7c4d4" stroke-width="0.7"/><polygon points="122.3,77.6 127.1,79.5 123.5,81.7 118.8,79.7" fill="#cabed1" stroke="#cabed1" stroke-width="0.7"/><polygon points="127.1,79.5 131.9,81.3 128.3,83.6 123.5,81.7" fill="#ccb9cd" stroke="#ccb9cd" stroke-width="0.7"/><polygon points="131.9,81.3 136.7,83.2 133.0,85.5 128.3,83.6" fill="#cfb4c7" stroke="#cfb4c7" stroke-width="0.7"/><polygon points="136.7,83.2 141.5,84.8 137.8,87.2 133.0,85.5" fill="#d2afc0" stroke="#d2afc0" stroke-width="0.7"/><polygon points="141.5,84.8 146.4,86.4 142.6,88.9 137.8,87.2" fill="#d4abb9" stroke="#d4abb9" stroke-width="0.7"/><polygon points="146.4,86.4 151.3,88.0 147.4,90.6 142.6,88.9" fill="#d7a6b1" stroke="#d7a6b1" stroke-width="0.7"/><polygon points="151.3,88.0 156.1,89.6 152.1,92.3 147.4,90.6" fill="#d9a2a9" stroke="#d9a2a9" stroke-width="0.7"/><polygon points="156.1,89.6 160.9,91.2 156.9,94.0 152.1,92.3" fill="#da9da0" stroke="#da9da0" stroke-width="0.7"/><polygon points="160.9,91.2 165.8,92.8 161.7,95.7 156.9,94.0" fill="#db9998" stroke="#db9998" stroke-width="0.7"/><polygon points="165.8,92.8 170.6,94.4 166.5,97.4 161.7,95.7" fill="#dc9490" stroke="#dc9490" stroke-width="0.7"/><polygon points="170.6,94.4 174.0,98.4 169.8,101.4 166.5,97.4" fill="#dc8b8a" stroke="#dc8b8a" stroke-width="0.7"/><polygon points="174.0,98.4 177.3,102.5 173.1,105.4 169.8,101.4" fill="#db7e89" stroke="#db7e89" stroke-width="0.7"/><polygon points="177.3,102.5 180.6,106.5 176.5,109.4 173.1,105.4" fill="#da7286" stroke="#da7286" stroke-width="0.7"/><polygon points="180.6,106.5 184.7,109.9 180.5,112.8 176.5,109.4" fill="#d96881" stroke="#d96881" stroke-width="0.7"/><polygon points="184.7,109.9 188.7,113.2 184.5,116.1 180.5,112.8" fill="#d85c7c" stroke="#d85c7c" stroke-width="0.7"/><polygon points="188.7,113.2 192.7,116.5 188.5,119.5 184.5,116.1" fill="#d84e7a" stroke="#d84e7a" stroke-width="0.7"/><polygon points="192.7,116.5 196.7,119.9 192.4,122.8 188.5,119.5" fill="#d83f78" stroke="#d83f78" stroke-width="0.7"/><polygon points="196.7,119.9 200.6,123.4 196.3,126.3 192.4,122.8" fill="#d63176" stroke="#d63176" stroke-width="0.7"/><polygon points="200.6,123.4 204.6,126.8 200.2,129.8 196.3,126.3" fill="#cf2a6d" stroke="#cf2a6d" stroke-width="0.7"/><polygon points="204.6,126.8 208.5,130.2 204.2,133.2 200.2,129.8" fill="#c92364" stroke="#c92364" stroke-width="0.7"/><polygon points="208.5,130.2 212.6,133.6 208.2,136.5 204.2,133.2" fill="#c21c5d" stroke="#c21c5d" stroke-width="0.7"/><polygon points="212.6,133.6 216.7,136.7 212.3,139.5 208.2,136.5" fill="#be1656" stroke="#be1656" stroke-width="0.7"/><polygon points="216.7,136.7 220.8,139.7 216.5,142.4 212.3,139.5" fill="#bc1351" stroke="#bc1351" stroke-width="0.7"/><polygon points="104.6,73.9 109.3,75.9 106.0,77.8 101.3,75.8" fill="#b6cad6" stroke="#b6cad6" stroke-width="0.7"/><polygon points="109.3,75.9 114.1,77.8 110.6,79.8 106.0,77.8" fill="#bcc6d5" stroke="#bcc6d5" stroke-width="0.7"/><polygon points="114.1,77.8 118.8,79.7 115.3,81.8 110.6,79.8" fill="#c0c1d3" stroke="#c0c1d3" stroke-width="0.7"/><polygon points="118.8,79.7 123.5,81.7 120.0,83.9 115.3,81.8" fill="#c4bcd1" stroke="#c4bcd1" stroke-width="0.7"/><polygon points="123.5,81.7 128.3,83.6 124.6,85.9 120.0,83.9" fill="#c7b5cd" stroke="#c7b5cd" stroke-width="0.7"/><polygon points="128.3,83.6 133.0,85.5 129.3,87.9 124.6,85.9" fill="#cab0c8" stroke="#cab0c8" stroke-width="0.7"/><polygon points="133.0,85.5 137.8,87.2 134.0,89.6 129.3,87.9" fill="#cdabc2" stroke="#cdabc2" stroke-width="0.7"/><polygon points="137.8,87.2 142.6,88.9 138.8,91.4 134.0,89.6" fill="#d0a6bc" stroke="#d0a6bc" stroke-width="0.7"/><polygon points="142.6,88.9 147.4,90.6 143.5,93.2 138.8,91.4" fill="#d3a1b5" stroke="#d3a1b5" stroke-width="0.7"/><polygon points="147.4,90.6 152.1,92.3 148.2,95.0 143.5,93.2" fill="#d59cae" stroke="#d59cae" stroke-width="0.7"/><polygon points="152.1,92.3 156.9,94.0 152.9,96.8 148.2,95.0" fill="#d697a7" stroke="#d697a7" stroke-width="0.7"/><polygon points="156.9,94.0 161.7,95.7 157.6,98.6 152.9,96.8" fill="#d892a0" stroke="#d892a0" stroke-width="0.7"/><polygon points="161.7,95.7 166.5,97.4 162.3,100.4 157.6,98.6" fill="#d98c9a" stroke="#d98c9a" stroke-width="0.7"/><polygon points="166.5,97.4 169.8,101.4 165.7,104.3 162.3,100.4" fill="#d98296" stroke="#d98296" stroke-width="0.7"/><polygon points="169.8,101.4 173.1,105.4 169.0,108.3 165.7,104.3" fill="#d87497" stroke="#d87497" stroke-width="0.7"/><polygon points="173.1,105.4 176.5,109.4 172.3,112.3 169.0,108.3" fill="#d76a91" stroke="#d76a91" stroke-width="0.7"/><polygon points="176.5,109.4 180.5,112.8 176.3,115.7 172.3,112.3" fill="#d5608a" stroke="#d5608a" stroke-width="0.7"/><polygon points="180.5,112.8 184.5,116.1 180.2,119.0 176.3,115.7" fill="#d45585" stroke="#d45585" stroke-width="0.7"/><polygon points="184.5,116.1 188.5,119.5 184.2,122.4 180.2,119.0" fill="#d34981" stroke="#d34981" stroke-width="0.7"/><polygon points="188.5,119.5 192.4,122.8 188.1,125.8 184.2,122.4" fill="#d23b7e" stroke="#d23b7e" stroke-width="0.7"/><polygon points="192.4,122.8 196.3,126.3 192.0,129.2 188.1,125.8" fill="#cf2d7a" stroke="#cf2d7a" stroke-width="0.7"/><polygon points="196.3,126.3 200.2,129.8 195.9,132.7 192.0,129.2" fill="#ca2573" stroke="#ca2573" stroke-width="0.7"/><polygon points="200.2,129.8 204.2,133.2 199.8,136.1 195.9,132.7" fill="#c31f6a" stroke="#c31f6a" stroke-width="0.7"/><polygon points="204.2,133.2 208.2,136.5 203.8,139.4 199.8,136.1" fill="#be1961" stroke="#be1961" stroke-width="0.7"/><polygon points="208.2,136.5 212.3,139.5 208.0,142.4 203.8,139.4" fill="#ba1459" stroke="#ba1459" stroke-width="0.7"/><polygon points="212.3,139.5 216.5,142.4 212.2,145.1 208.0,142.4" fill="#b71152" stroke="#b71152" stroke-width="0.7"/><polygon points="101.3,75.8 106.0,77.8 102.6,79.8 98.0,77.7" fill="#aec8d5" stroke="#aec8d5" stroke-width="0.7"/><polygon points="106.0,77.8 110.6,79.8 107.2,81.9 102.6,79.8" fill="#b4c4d4" stroke="#b4c4d4" stroke-width="0.7"/><polygon points="110.6,79.8 115.3,81.8 111.8,84.0 107.2,81.9" fill="#b9bfd2" stroke="#b9bfd2" stroke-width="0.7"/><polygon points="115.3,81.8 120.0,83.9 116.4,86.0 111.8,84.0" fill="#bdbad0" stroke="#bdbad0" stroke-width="0.7"/><polygon points="120.0,83.9 124.6,85.9 121.0,88.1 116.4,86.0" fill="#c0b3cd" stroke="#c0b3cd" stroke-width="0.7"/><polygon points="124.6,85.9 129.3,87.9 125.6,90.2 121.0,88.1" fill="#c3acc9" stroke="#c3acc9" stroke-width="0.7"/><polygon points="129.3,87.9 134.0,89.6 130.3,92.0 125.6,90.2" fill="#c7a7c4" stroke="#c7a7c4" stroke-width="0.7"/><polygon points="134.0,89.6 138.8,91.4 135.0,93.9 130.3,92.0" fill="#caa2be" stroke="#caa2be" stroke-width="0.7"/><polygon points="138.8,91.4 143.5,93.2 139.6,95.8 135.0,93.9" fill="#cd9db8" stroke="#cd9db8" stroke-width="0.7"/><polygon points="143.5,93.2 148.2,95.0 144.2,97.6 139.6,95.8" fill="#d096b2" stroke="#d096b2" stroke-width="0.7"/><polygon points="148.2,95.0 152.9,96.8 148.9,99.5 144.2,97.6" fill="#d291ac" stroke="#d291ac" stroke-width="0.7"/><polygon points="152.9,96.8 157.6,98.6 153.5,101.4 148.9,99.5" fill="#d48ca5" stroke="#d48ca5" stroke-width="0.7"/><polygon points="157.6,98.6 162.3,100.4 158.1,103.3 153.5,101.4" fill="#d586a0" stroke="#d586a0" stroke-width="0.7"/><polygon points="162.3,100.4 165.7,104.3 161.5,107.2 158.1,103.3" fill="#d57d9c" stroke="#d57d9c" stroke-width="0.7"/><polygon points="165.7,104.3 169.0,108.3 164.8,111.2 161.5,107.2" fill="#d4719b" stroke="#d4719b" stroke-width="0.7"/><polygon points="169.0,108.3 172.3,112.3 168.1,115.2 164.8,111.2" fill="#d26696" stroke="#d26696" stroke-width="0.7"/><polygon points="172.3,112.3 176.3,115.7 172.0,118.5 168.1,115.2" fill="#d05c91" stroke="#d05c91" stroke-width="0.7"/><polygon points="176.3,115.7 180.2,119.0 176.0,121.9 172.0,118.5" fill="#cf528b" stroke="#cf528b" stroke-width="0.7"/><polygon points="180.2,119.0 184.2,122.4 179.9,125.2 176.0,121.9" fill="#cd4686" stroke="#cd4686" stroke-width="0.7"/><polygon points="184.2,122.4 188.1,125.8 183.8,128.6 179.9,125.2" fill="#ca3981" stroke="#ca3981" stroke-width="0.7"/><polygon points="188.1,125.8 192.0,129.2 187.6,132.1 183.8,128.6" fill="#c72d7c" stroke="#c72d7c" stroke-width="0.7"/><polygon points="192.0,129.2 195.9,132.7 191.5,135.6 187.6,132.1" fill="#c22476" stroke="#c22476" stroke-width="0.7"/><polygon points="195.9,132.7 199.8,136.1 195.4,138.9 191.5,135.6" fill="#bd1c6d" stroke="#bd1c6d" stroke-width="0.7"/><polygon points="199.8,136.1 203.8,139.4 199.4,142.2 195.4,138.9" fill="#b81764" stroke="#b81764" stroke-width="0.7"/><polygon points="203.8,139.4 208.0,142.4 203.6,145.1 199.4,142.2" fill="#b4135b" stroke="#b4135b" stroke-width="0.7"/><polygon points="208.0,142.4 212.2,145.1 207.8,147.8 203.6,145.1" fill="#b21153" stroke="#b21153" stroke-width="0.7"/><polygon points="98.0,77.7 102.6,79.8 99.3,81.7 94.7,79.6" fill="#a7c6d4" stroke="#a7c6d4" stroke-width="0.7"/><polygon points="102.6,79.8 107.2,81.9 103.8,83.9 99.3,81.7" fill="#acc2d3" stroke="#acc2d3" stroke-width="0.7"/><polygon points="107.2,81.9 111.8,84.0 108.3,86.0 103.8,83.9" fill="#b1bed1" stroke="#b1bed1" stroke-width="0.7"/><polygon points="111.8,84.0 116.4,86.0 112.8,88.2 108.3,86.0" fill="#b6b8cf" stroke="#b6b8cf" stroke-width="0.7"/><polygon points="116.4,86.0 121.0,88.1 117.4,90.3 112.8,88.2" fill="#b9b1cc" stroke="#b9b1cc" stroke-width="0.7"/><polygon points="121.0,88.1 125.6,90.2 121.9,92.4 117.4,90.3" fill="#bdaac9" stroke="#bdaac9" stroke-width="0.7"/><polygon points="125.6,90.2 130.3,92.0 126.5,94.4 121.9,92.4" fill="#c0a4c4" stroke="#c0a4c4" stroke-width="0.7"/><polygon points="130.3,92.0 135.0,93.9 131.1,96.3 126.5,94.4" fill="#c39fbf" stroke="#c39fbf" stroke-width="0.7"/><polygon points="135.0,93.9 139.6,95.8 135.6,98.2 131.1,96.3" fill="#c79ab9" stroke="#c79ab9" stroke-width="0.7"/><polygon points="139.6,95.8 144.2,97.6 140.2,100.2 135.6,98.2" fill="#ca93b4" stroke="#ca93b4" stroke-width="0.7"/><polygon points="144.2,97.6 148.9,99.5 144.7,102.1 140.2,100.2" fill="#cd8dae" stroke="#cd8dae" stroke-width="0.7"/><polygon points="148.9,99.5 153.5,101.4 149.3,104.1 144.7,102.1" fill="#cf88a8" stroke="#cf88a8" stroke-width="0.7"/><polygon points="153.5,101.4 158.1,103.3 153.8,106.0 149.3,104.1" fill="#d082a3" stroke="#d082a3" stroke-width="0.7"/><polygon points="158.1,103.3 161.5,107.2 157.2,109.9 153.8,106.0" fill="#d0799f" stroke="#d0799f" stroke-width="0.7"/><polygon points="161.5,107.2 164.8,111.2 160.5,113.9 157.2,109.9" fill="#ce6f9c" stroke="#ce6f9c" stroke-width="0.7"/><polygon points="164.8,111.2 168.1,115.2 163.8,117.8 160.5,113.9" fill="#cd6498" stroke="#cd6498" stroke-width="0.7"/><polygon points="168.1,115.2 172.0,118.5 167.7,121.1 163.8,117.8" fill="#cb5b93" stroke="#cb5b93" stroke-width="0.7"/><polygon points="172.0,118.5 176.0,121.9 171.6,124.5 167.7,121.1" fill="#c9508e" stroke="#c9508e" stroke-width="0.7"/><polygon points="176.0,121.9 179.9,125.2 175.5,127.9 171.6,124.5" fill="#c64589" stroke="#c64589" stroke-width="0.7"/><polygon points="179.9,125.2 183.8,128.6 179.3,131.2 175.5,127.9" fill="#c33a83" stroke="#c33a83" stroke-width="0.7"/><polygon points="183.8,128.6 187.6,132.1 183.1,134.7 179.3,131.2" fill="#bf2e7e" stroke="#bf2e7e" stroke-width="0.7"/><polygon points="187.6,132.1 191.5,135.6 186.9,138.2 183.1,134.7" fill="#ba2378" stroke="#ba2378" stroke-width="0.7"/><polygon points="191.5,135.6 195.4,138.9 190.8,141.5 186.9,138.2" fill="#b41b70" stroke="#b41b70" stroke-width="0.7"/><polygon points="195.4,138.9 199.4,142.2 194.8,144.7 190.8,141.5" fill="#b01566" stroke="#b01566" stroke-width="0.7"/><polygon points="199.4,142.2 203.6,145.1 199.0,147.5 194.8,144.7" fill="#ad125d" stroke="#ad125d" stroke-width="0.7"/><polygon points="203.6,145.1 207.8,147.8 203.2,150.1 199.0,147.5" fill="#ab0f55" stroke="#ab0f55" stroke-width="0.7"/><polygon points="94.7,79.6 99.3,81.7 95.9,83.7 91.5,81.5" fill="#9fc4d3" stroke="#9fc4d3" stroke-width="0.7"/><polygon points="99.3,81.7 103.8,83.9 100.4,85.9 95.9,83.7" fill="#a4c0d1" stroke="#a4c0d1" stroke-width="0.7"/><polygon points="103.8,83.9 108.3,86.0 104.8,88.1 100.4,85.9" fill="#a9bcd0" stroke="#a9bcd0" stroke-width="0.7"/><polygon points="108.3,86.0 112.8,88.2 109.3,90.3 104.8,88.1" fill="#aeb7ce" stroke="#aeb7ce" stroke-width="0.7"/><polygon points="112.8,88.2 117.4,90.3 113.7,92.5 109.3,90.3" fill="#b2b1cb" stroke="#b2b1cb" stroke-width="0.7"/><polygon points="117.4,90.3 121.9,92.4 118.2,94.7 113.7,92.5" fill="#b5aac8" stroke="#b5aac8" stroke-width="0.7"/><polygon points="121.9,92.4 126.5,94.4 122.7,96.7 118.2,94.7" fill="#b9a3c4" stroke="#b9a3c4" stroke-width="0.7"/><polygon points="126.5,94.4 131.1,96.3 127.2,98.6 122.7,96.7" fill="#bc9dbf" stroke="#bc9dbf" stroke-width="0.7"/><polygon points="131.1,96.3 135.6,98.2 131.7,100.7 127.2,98.6" fill="#bf98b9" stroke="#bf98b9" stroke-width="0.7"/><polygon points="135.6,98.2 140.2,100.2 136.1,102.7 131.7,100.7" fill="#c392b4" stroke="#c392b4" stroke-width="0.7"/><polygon points="140.2,100.2 144.7,102.1 140.6,104.7 136.1,102.7" fill="#c68bae" stroke="#c68bae" stroke-width="0.7"/><polygon points="144.7,102.1 149.3,104.1 145.1,106.8 140.6,104.7" fill="#c885a9" stroke="#c885a9" stroke-width="0.7"/><polygon points="149.3,104.1 153.8,106.0 149.5,108.8 145.1,106.8" fill="#ca7fa5" stroke="#ca7fa5" stroke-width="0.7"/><polygon points="153.8,106.0 157.2,109.9 152.9,112.6 149.5,108.8" fill="#ca77a0" stroke="#ca77a0" stroke-width="0.7"/><polygon points="157.2,109.9 160.5,113.9 156.2,116.5 152.9,112.6" fill="#c96e9c" stroke="#c96e9c" stroke-width="0.7"/><polygon points="160.5,113.9 163.8,117.8 159.5,120.4 156.2,116.5" fill="#c76498" stroke="#c76498" stroke-width="0.7"/><polygon points="163.8,117.8 167.7,121.1 163.3,123.8 159.5,120.4" fill="#c55b94" stroke="#c55b94" stroke-width="0.7"/><polygon points="167.7,121.1 171.6,124.5 167.2,127.1 163.3,123.8" fill="#c3518f" stroke="#c3518f" stroke-width="0.7"/><polygon points="171.6,124.5 175.5,127.9 171.0,130.5 167.2,127.1" fill="#c0468a" stroke="#c0468a" stroke-width="0.7"/><polygon points="175.5,127.9 179.3,131.2 174.8,133.8 171.0,130.5" fill="#bc3b84" stroke="#bc3b84" stroke-width="0.7"/><polygon points="179.3,131.2 183.1,134.7 178.6,137.3 174.8,133.8" fill="#b72f7e" stroke="#b72f7e" stroke-width="0.7"/><polygon points="183.1,134.7 186.9,138.2 182.4,140.7 178.6,137.3" fill="#b12477" stroke="#b12477" stroke-width="0.7"/><polygon points="186.9,138.2 190.8,141.5 186.3,144.0 182.4,140.7" fill="#ac1b72" stroke="#ac1b72" stroke-width="0.7"/><polygon points="190.8,141.5 194.8,144.7 190.2,147.2 186.3,144.0" fill="#a71468" stroke="#a71468" stroke-width="0.7"/><polygon points="194.8,144.7 199.0,147.5 194.4,149.9 190.2,147.2" fill="#a4105e" stroke="#a4105e" stroke-width="0.7"/><polygon points="199.0,147.5 203.2,150.1 198.6,152.4 194.4,149.9" fill="#a30d56" stroke="#a30d56" stroke-width="0.7"/><polygon points="91.5,81.5 95.9,83.7 92.5,85.6 88.2,83.4" fill="#96c2d2" stroke="#96c2d2" stroke-width="0.7"/><polygon points="95.9,83.7 100.4,85.9 96.9,87.9 92.5,85.6" fill="#9cbfd0" stroke="#9cbfd0" stroke-width="0.7"/><polygon points="100.4,85.9 104.8,88.1 101.3,90.1 96.9,87.9" fill="#a1bacf" stroke="#a1bacf" stroke-width="0.7"/><polygon points="104.8,88.1 109.3,90.3 105.7,92.4 101.3,90.1" fill="#a6b5cd" stroke="#a6b5cd" stroke-width="0.7"/><polygon points="109.3,90.3 113.7,92.5 110.1,94.6 105.7,92.4" fill="#aab0ca" stroke="#aab0ca" stroke-width="0.7"/><polygon points="113.7,92.5 118.2,94.7 114.4,96.9 110.1,94.6" fill="#ada9c7" stroke="#ada9c7" stroke-width="0.7"/><polygon points="118.2,94.7 122.7,96.7 118.9,99.0 114.4,96.9" fill="#b1a2c3" stroke="#b1a2c3" stroke-width="0.7"/><polygon points="122.7,96.7 127.2,98.6 123.3,101.0 118.9,99.0" fill="#b49cbe" stroke="#b49cbe" stroke-width="0.7"/><polygon points="127.2,98.6 131.7,100.7 127.7,103.1 123.3,101.0" fill="#b896b9" stroke="#b896b9" stroke-width="0.7"/><polygon points="131.7,100.7 136.1,102.7 132.1,105.2 127.7,103.1" fill="#bb90b3" stroke="#bb90b3" stroke-width="0.7"/><polygon points="136.1,102.7 140.6,104.7 136.5,107.3 132.1,105.2" fill="#be8aae" stroke="#be8aae" stroke-width="0.7"/><polygon points="140.6,104.7 145.1,106.8 140.9,109.4 136.5,107.3" fill="#c184a9" stroke="#c184a9" stroke-width="0.7"/><polygon points="145.1,106.8 149.5,108.8 145.3,111.5 140.9,109.4" fill="#c37ea4" stroke="#c37ea4" stroke-width="0.7"/><polygon points="149.5,108.8 152.9,112.6 148.6,115.3 145.3,111.5" fill="#c3769f" stroke="#c3769f" stroke-width="0.7"/><polygon points="152.9,112.6 156.2,116.5 151.9,119.2 148.6,115.3" fill="#c26d9b" stroke="#c26d9b" stroke-width="0.7"/><polygon points="156.2,116.5 159.5,120.4 155.2,123.0 151.9,119.2" fill="#c06497" stroke="#c06497" stroke-width="0.7"/><polygon points="159.5,120.4 163.3,123.8 159.0,126.4 155.2,123.0" fill="#bf5b93" stroke="#bf5b93" stroke-width="0.7"/><polygon points="163.3,123.8 167.2,127.1 162.8,129.7 159.0,126.4" fill="#bd5290" stroke="#bd5290" stroke-width="0.7"/><polygon points="167.2,127.1 171.0,130.5 166.6,133.1 162.8,129.7" fill="#ba488b" stroke="#ba488b" stroke-width="0.7"/><polygon points="171.0,130.5 174.8,133.8 170.4,136.4 166.6,133.1" fill="#b63d84" stroke="#b63d84" stroke-width="0.7"/><polygon points="174.8,133.8 178.6,137.3 174.1,139.9 170.4,136.4" fill="#af317d" stroke="#af317d" stroke-width="0.7"/><polygon points="178.6,137.3 182.4,140.7 177.8,143.3 174.1,139.9" fill="#a92675" stroke="#a92675" stroke-width="0.7"/><polygon points="182.4,140.7 186.3,144.0 181.7,146.5 177.8,143.3" fill="#a21c6d" stroke="#a21c6d" stroke-width="0.7"/><polygon points="186.3,144.0 190.2,147.2 185.6,149.7 181.7,146.5" fill="#9d1465" stroke="#9d1465" stroke-width="0.7"/><polygon points="190.2,147.2 194.4,149.9 189.8,152.3 185.6,149.7" fill="#9a0f5c" stroke="#9a0f5c" stroke-width="0.7"/><polygon points="194.4,149.9 198.6,152.4 194.0,154.7 189.8,152.3" fill="#990c55" stroke="#990c55" stroke-width="0.7"/><polygon points="88.2,83.4 92.5,85.6 89.2,87.6 84.9,85.3" fill="#8dc0d0" stroke="#8dc0d0" stroke-width="0.7"/><polygon points="92.5,85.6 96.9,87.9 93.5,89.9 89.2,87.6" fill="#93bdcf" stroke="#93bdcf" stroke-width="0.7"/><polygon points="96.9,87.9 101.3,90.1 97.8,92.2 93.5,89.9" fill="#98b8ce" stroke="#98b8ce" stroke-width="0.7"/><polygon points="101.3,90.1 105.7,92.4 102.1,94.5 97.8,92.2" fill="#9db4cc" stroke="#9db4cc" stroke-width="0.7"/><polygon points="105.7,92.4 110.1,94.6 106.4,96.8 102.1,94.5" fill="#a1aec9" stroke="#a1aec9" stroke-width="0.7"/><polygon points="110.1,94.6 114.4,96.9 110.7,99.1 106.4,96.8" fill="#a5a8c6" stroke="#a5a8c6" stroke-width="0.7"/><polygon points="114.4,96.9 118.9,99.0 115.1,101.3 110.7,99.1" fill="#a8a2c2" stroke="#a8a2c2" stroke-width="0.7"/><polygon points="118.9,99.0 123.3,101.0 119.4,103.4 115.1,101.3" fill="#ac9bbd" stroke="#ac9bbd" stroke-width="0.7"/><polygon points="123.3,101.0 127.7,103.1 123.8,105.6 119.4,103.4" fill="#af95b8" stroke="#af95b8" stroke-width="0.7"/><polygon points="127.7,103.1 132.1,105.2 128.1,107.7 123.8,105.6" fill="#b38fb3" stroke="#b38fb3" stroke-width="0.7"/><polygon points="132.1,105.2 136.5,107.3 132.4,109.9 128.1,107.7" fill="#b689ad" stroke="#b689ad" stroke-width="0.7"/><polygon points="136.5,107.3 140.9,109.4 136.7,112.1 132.4,109.9" fill="#b983a7" stroke="#b983a7" stroke-width="0.7"/><polygon points="140.9,109.4 145.3,111.5 141.0,114.3 136.7,112.1" fill="#bb7da2" stroke="#bb7da2" stroke-width="0.7"/><polygon points="145.3,111.5 148.6,115.3 144.3,118.0 141.0,114.3" fill="#bc759d" stroke="#bc759d" stroke-width="0.7"/><polygon points="148.6,115.3 151.9,119.2 147.6,121.9 144.3,118.0" fill="#bb6c98" stroke="#bb6c98" stroke-width="0.7"/><polygon points="151.9,119.2 155.2,123.0 150.8,125.7 147.6,121.9" fill="#b96395" stroke="#b96395" stroke-width="0.7"/><polygon points="155.2,123.0 159.0,126.4 154.6,129.0 150.8,125.7" fill="#b85b91" stroke="#b85b91" stroke-width="0.7"/><polygon points="159.0,126.4 162.8,129.7 158.4,132.3 154.6,129.0" fill="#b7538e" stroke="#b7538e" stroke-width="0.7"/><polygon points="162.8,129.7 166.6,133.1 162.1,135.7 158.4,132.3" fill="#b54b8b" stroke="#b54b8b" stroke-width="0.7"/><polygon points="166.6,133.1 170.4,136.4 165.9,139.0 162.1,135.7" fill="#b04084" stroke="#b04084" stroke-width="0.7"/><polygon points="170.4,136.4 174.1,139.9 169.6,142.4 165.9,139.0" fill="#a9347b" stroke="#a9347b" stroke-width="0.7"/><polygon points="174.1,139.9 177.8,143.3 173.2,145.9 169.6,142.4" fill="#a12871" stroke="#a12871" stroke-width="0.7"/><polygon points="177.8,143.3 181.7,146.5 177.1,149.1 173.2,145.9" fill="#991e68" stroke="#991e68" stroke-width="0.7"/><polygon points="181.7,146.5 185.6,149.7 181.0,152.2 177.1,149.1" fill="#92155e" stroke="#92155e" stroke-width="0.7"/><polygon points="185.6,149.7 189.8,152.3 185.2,154.7 181.0,152.2" fill="#8e0f56" stroke="#8e0f56" stroke-width="0.7"/><polygon points="189.8,152.3 194.0,154.7 189.5,157.0 185.2,154.7" fill="#8f0b51" stroke="#8f0b51" stroke-width="0.7"/><polygon points="84.9,85.3 89.2,87.6 85.8,89.5 81.6,87.2" fill="#82bbd0" stroke="#82bbd0" stroke-width="0.7"/><polygon points="89.2,87.6 93.5,89.9 90.1,91.9 85.8,89.5" fill="#89b9ce" stroke="#89b9ce" stroke-width="0.7"/><polygon points="93.5,89.9 97.8,92.2 94.3,94.3 90.1,91.9" fill="#8eb6cc" stroke="#8eb6cc" stroke-width="0.7"/><polygon points="97.8,92.2 102.1,94.5 98.5,96.6 94.3,94.3" fill="#93b2ca" stroke="#93b2ca" stroke-width="0.7"/><polygon points="102.1,94.5 106.4,96.8 102.8,99.0 98.5,96.6" fill="#98adc8" stroke="#98adc8" stroke-width="0.7"/><polygon points="106.4,96.8 110.7,99.1 107.0,101.4 102.8,99.0" fill="#9da7c5" stroke="#9da7c5" stroke-width="0.7"/><polygon points="110.7,99.1 115.1,101.3 111.3,103.6 107.0,101.4" fill="#a0a1c1" stroke="#a0a1c1" stroke-width="0.7"/><polygon points="115.1,101.3 119.4,103.4 115.5,105.8 111.3,103.6" fill="#a39abd" stroke="#a39abd" stroke-width="0.7"/><polygon points="119.4,103.4 123.8,105.6 119.8,108.0 115.5,105.8" fill="#a694b8" stroke="#a694b8" stroke-width="0.7"/><polygon points="123.8,105.6 128.1,107.7 124.0,110.3 119.8,108.0" fill="#aa8eb2" stroke="#aa8eb2" stroke-width="0.7"/><polygon points="128.1,107.7 132.4,109.9 128.2,112.5 124.0,110.3" fill="#ad88ac" stroke="#ad88ac" stroke-width="0.7"/><polygon points="132.4,109.9 136.7,112.1 132.5,114.8 128.2,112.5" fill="#b082a5" stroke="#b082a5" stroke-width="0.7"/><polygon points="136.7,112.1 141.0,114.3 136.7,117.0 132.5,114.8" fill="#b37c9f" stroke="#b37c9f" stroke-width="0.7"/><polygon points="141.0,114.3 144.3,118.0 140.0,120.8 136.7,117.0" fill="#b37499" stroke="#b37499" stroke-width="0.7"/><polygon points="144.3,118.0 147.6,121.9 143.2,124.5 140.0,120.8" fill="#b36c94" stroke="#b36c94" stroke-width="0.7"/><polygon points="147.6,121.9 150.8,125.7 146.5,128.3 143.2,124.5" fill="#b26291" stroke="#b26291" stroke-width="0.7"/><polygon points="150.8,125.7 154.6,129.0 150.2,131.6 146.5,128.3" fill="#b15a8e" stroke="#b15a8e" stroke-width="0.7"/><polygon points="154.6,129.0 158.4,132.3 154.0,134.9 150.2,131.6" fill="#b0518c" stroke="#b0518c" stroke-width="0.7"/><polygon points="158.4,132.3 162.1,135.7 157.7,138.3 154.0,134.9" fill="#ae4a88" stroke="#ae4a88" stroke-width="0.7"/><polygon points="162.1,135.7 165.9,139.0 161.4,141.6 157.7,138.3" fill="#aa4182" stroke="#aa4182" stroke-width="0.7"/><polygon points="165.9,139.0 169.6,142.4 165.0,145.0 161.4,141.6" fill="#a33579" stroke="#a33579" stroke-width="0.7"/><polygon points="169.6,142.4 173.2,145.9 168.7,148.4 165.0,145.0" fill="#9a296f" stroke="#9a296f" stroke-width="0.7"/><polygon points="173.2,145.9 177.1,149.1 172.5,151.6 168.7,148.4" fill="#921f64" stroke="#921f64" stroke-width="0.7"/><polygon points="177.1,149.1 181.0,152.2 176.4,154.7 172.5,151.6" fill="#881659" stroke="#881659" stroke-width="0.7"/><polygon points="181.0,152.2 185.2,154.7 180.6,157.1 176.4,154.7" fill="#820f4f" stroke="#820f4f" stroke-width="0.7"/><polygon points="185.2,154.7 189.5,157.0 184.9,159.3 180.6,157.1" fill="#830b4b" stroke="#830b4b" stroke-width="0.7"/><polygon points="81.6,87.2 85.8,89.5 82.5,91.5 78.3,89.0" fill="#76b6cf" stroke="#76b6cf" stroke-width="0.7"/><polygon points="85.8,89.5 90.1,91.9 86.6,93.9 82.5,91.5" fill="#7db5cd" stroke="#7db5cd" stroke-width="0.7"/><polygon points="90.1,91.9 94.3,94.3 90.8,96.3 86.6,93.9" fill="#83b2cb" stroke="#83b2cb" stroke-width="0.7"/><polygon points="94.3,94.3 98.5,96.6 94.9,98.8 90.8,96.3" fill="#89aec9" stroke="#89aec9" stroke-width="0.7"/><polygon points="98.5,96.6 102.8,99.0 99.1,101.2 94.9,98.8" fill="#8fabc7" stroke="#8fabc7" stroke-width="0.7"/><polygon points="102.8,99.0 107.0,101.4 103.3,103.6 99.1,101.2" fill="#94a6c4" stroke="#94a6c4" stroke-width="0.7"/><polygon points="107.0,101.4 111.3,103.6 107.4,105.9 103.3,103.6" fill="#97a0c0" stroke="#97a0c0" stroke-width="0.7"/><polygon points="111.3,103.6 115.5,105.8 111.6,108.2 107.4,105.9" fill="#9999bc" stroke="#9999bc" stroke-width="0.7"/><polygon points="115.5,105.8 119.8,108.0 115.8,110.4 111.6,108.2" fill="#9c93b7" stroke="#9c93b7" stroke-width="0.7"/><polygon points="119.8,108.0 124.0,110.3 120.0,112.8 115.8,110.4" fill="#a08cb1" stroke="#a08cb1" stroke-width="0.7"/><polygon points="124.0,110.3 128.2,112.5 124.1,115.1 120.0,112.8" fill="#a486ab" stroke="#a486ab" stroke-width="0.7"/><polygon points="128.2,112.5 132.5,114.8 128.2,117.4 124.1,115.1" fill="#a880a5" stroke="#a880a5" stroke-width="0.7"/><polygon points="132.5,114.8 136.7,117.0 132.4,119.8 128.2,117.4" fill="#ab7b9e" stroke="#ab7b9e" stroke-width="0.7"/><polygon points="136.7,117.0 140.0,120.8 135.7,123.5 132.4,119.8" fill="#ab7495" stroke="#ab7495" stroke-width="0.7"/><polygon points="140.0,120.8 143.2,124.5 138.9,127.2 135.7,123.5" fill="#aa6b90" stroke="#aa6b90" stroke-width="0.7"/><polygon points="143.2,124.5 146.5,128.3 142.2,130.9 138.9,127.2" fill="#aa618e" stroke="#aa618e" stroke-width="0.7"/><polygon points="146.5,128.3 150.2,131.6 145.9,134.2 142.2,130.9" fill="#a9588b" stroke="#a9588b" stroke-width="0.7"/><polygon points="150.2,131.6 154.0,134.9 149.6,137.6 145.9,134.2" fill="#a84f88" stroke="#a84f88" stroke-width="0.7"/><polygon points="154.0,134.9 157.7,138.3 153.2,140.9 149.6,137.6" fill="#a64684" stroke="#a64684" stroke-width="0.7"/><polygon points="157.7,138.3 161.4,141.6 156.9,144.2 153.2,140.9" fill="#a23d7e" stroke="#a23d7e" stroke-width="0.7"/><polygon points="161.4,141.6 165.0,145.0 160.5,147.6 156.9,144.2" fill="#9c3376" stroke="#9c3376" stroke-width="0.7"/><polygon points="165.0,145.0 168.7,148.4 164.1,151.0 160.5,147.6" fill="#95296c" stroke="#95296c" stroke-width="0.7"/><polygon points="168.7,148.4 172.5,151.6 167.9,154.2 164.1,151.0" fill="#8d2061" stroke="#8d2061" stroke-width="0.7"/><polygon points="172.5,151.6 176.4,154.7 171.9,157.2 167.9,154.2" fill="#841756" stroke="#841756" stroke-width="0.7"/><polygon points="176.4,154.7 180.6,157.1 176.0,159.5 171.9,157.2" fill="#7a104a" stroke="#7a104a" stroke-width="0.7"/><polygon points="180.6,157.1 184.9,159.3 180.3,161.6 176.0,159.5" fill="#770a44" stroke="#770a44" stroke-width="0.7"/><polygon points="78.3,89.0 82.5,91.5 79.1,93.4 75.0,90.9" fill="#6bb1ce" stroke="#6bb1ce" stroke-width="0.7"/><polygon points="82.5,91.5 86.6,93.9 83.2,95.9 79.1,93.4" fill="#71b0cc" stroke="#71b0cc" stroke-width="0.7"/><polygon points="86.6,93.9 90.8,96.3 87.3,98.4 83.2,95.9" fill="#77adca" stroke="#77adca" stroke-width="0.7"/><polygon points="90.8,96.3 94.9,98.8 91.4,100.9 87.3,98.4" fill="#7daac8" stroke="#7daac8" stroke-width="0.7"/><polygon points="94.9,98.8 99.1,101.2 95.4,103.4 91.4,100.9" fill="#83a7c6" stroke="#83a7c6" stroke-width="0.7"/><polygon points="99.1,101.2 103.3,103.6 99.5,105.8 95.4,103.4" fill="#8aa3c3" stroke="#8aa3c3" stroke-width="0.7"/><polygon points="103.3,103.6 107.4,105.9 103.6,108.2 99.5,105.8" fill="#8e9fbf" stroke="#8e9fbf" stroke-width="0.7"/><polygon points="107.4,105.9 111.6,108.2 107.8,110.5 103.6,108.2" fill="#9098bb" stroke="#9098bb" stroke-width="0.7"/><polygon points="111.6,108.2 115.8,110.4 111.9,112.9 107.8,110.5" fill="#9291b7" stroke="#9291b7" stroke-width="0.7"/><polygon points="115.8,110.4 120.0,112.8 115.9,115.3 111.9,112.9" fill="#948ab1" stroke="#948ab1" stroke-width="0.7"/><polygon points="120.0,112.8 124.1,115.1 120.0,117.7 115.9,115.3" fill="#9a84ab" stroke="#9a84ab" stroke-width="0.7"/><polygon points="124.1,115.1 128.2,117.4 124.0,120.1 120.0,117.7" fill="#9f7ea5" stroke="#9f7ea5" stroke-width="0.7"/><polygon points="128.2,117.4 132.4,119.8 128.1,122.5 124.0,120.1" fill="#a4799e" stroke="#a4799e" stroke-width="0.7"/><polygon points="132.4,119.8 135.7,123.5 131.4,126.2 128.1,122.5" fill="#a57296" stroke="#a57296" stroke-width="0.7"/><polygon points="135.7,123.5 138.9,127.2 134.6,129.8 131.4,126.2" fill="#a46990" stroke="#a46990" stroke-width="0.7"/><polygon points="138.9,127.2 142.2,130.9 137.9,133.5 134.6,129.8" fill="#a35f8c" stroke="#a35f8c" stroke-width="0.7"/><polygon points="142.2,130.9 145.9,134.2 141.5,136.8 137.9,133.5" fill="#a15589" stroke="#a15589" stroke-width="0.7"/><polygon points="145.9,134.2 149.6,137.6 145.1,140.1 141.5,136.8" fill="#a04c85" stroke="#a04c85" stroke-width="0.7"/><polygon points="149.6,137.6 153.2,140.9 148.8,143.4 145.1,140.1" fill="#9e4380" stroke="#9e4380" stroke-width="0.7"/><polygon points="153.2,140.9 156.9,144.2 152.4,146.8 148.8,143.4" fill="#9a3a7a" stroke="#9a3a7a" stroke-width="0.7"/><polygon points="156.9,144.2 160.5,147.6 156.0,150.2 152.4,146.8" fill="#963073" stroke="#963073" stroke-width="0.7"/><polygon points="160.5,147.6 164.1,151.0 159.5,153.5 156.0,150.2" fill="#8f2869" stroke="#8f2869" stroke-width="0.7"/><polygon points="164.1,151.0 167.9,154.2 163.3,156.7 159.5,153.5" fill="#882060" stroke="#882060" stroke-width="0.7"/><polygon points="167.9,154.2 171.9,157.2 167.2,159.6 163.3,156.7" fill="#821956" stroke="#821956" stroke-width="0.7"/><polygon points="171.9,157.2 176.0,159.5 171.4,161.9 167.2,159.6" fill="#7d134d" stroke="#7d134d" stroke-width="0.7"/><polygon points="176.0,159.5 180.3,161.6 175.7,163.8 171.4,161.9" fill="#7b0f47" stroke="#7b0f47" stroke-width="0.7"/><polygon points="75.0,90.9 79.1,93.4 75.7,95.3 71.7,92.8" fill="#5fadcd" stroke="#5fadcd" stroke-width="0.7"/><polygon points="79.1,93.4 83.2,95.9 79.8,97.9 75.7,95.3" fill="#64abcb" stroke="#64abcb" stroke-width="0.7"/><polygon points="83.2,95.9 87.3,98.4 83.8,100.4 79.8,97.9" fill="#6ba8c9" stroke="#6ba8c9" stroke-width="0.7"/><polygon points="87.3,98.4 91.4,100.9 87.8,103.0 83.8,100.4" fill="#71a6c7" stroke="#71a6c7" stroke-width="0.7"/><polygon points="91.4,100.9 95.4,103.4 91.8,105.5 87.8,103.0" fill="#77a2c4" stroke="#77a2c4" stroke-width="0.7"/><polygon points="95.4,103.4 99.5,105.8 95.8,108.0 91.8,105.5" fill="#7d9fc1" stroke="#7d9fc1" stroke-width="0.7"/><polygon points="99.5,105.8 103.6,108.2 99.8,110.4 95.8,108.0" fill="#839bbe" stroke="#839bbe" stroke-width="0.7"/><polygon points="103.6,108.2 107.8,110.5 103.8,112.8 99.8,110.4" fill="#8695bb" stroke="#8695bb" stroke-width="0.7"/><polygon points="107.8,110.5 111.9,112.9 107.9,115.3 103.8,112.8" fill="#898fb6" stroke="#898fb6" stroke-width="0.7"/><polygon points="111.9,112.9 115.9,115.3 111.8,117.7 107.9,115.3" fill="#8b88b1" stroke="#8b88b1" stroke-width="0.7"/><polygon points="115.9,115.3 120.0,117.7 115.8,120.2 111.8,117.7" fill="#9082ac" stroke="#9082ac" stroke-width="0.7"/><polygon points="120.0,117.7 124.0,120.1 119.8,122.7 115.8,120.2" fill="#967ca6" stroke="#967ca6" stroke-width="0.7"/><polygon points="124.0,120.1 128.1,122.5 123.7,125.1 119.8,122.7" fill="#9c769f" stroke="#9c769f" stroke-width="0.7"/><polygon points="128.1,122.5 131.4,126.2 127.0,128.7 123.7,125.1" fill="#9f7098" stroke="#9f7098" stroke-width="0.7"/><polygon points="131.4,126.2 134.6,129.8 130.3,132.4 127.0,128.7" fill="#9e6792" stroke="#9e6792" stroke-width="0.7"/><polygon points="134.6,129.8 137.9,133.5 133.5,136.0 130.3,132.4" fill="#9c5d8d" stroke="#9c5d8d" stroke-width="0.7"/><polygon points="137.9,133.5 141.5,136.8 137.1,139.3 133.5,136.0" fill="#995388" stroke="#995388" stroke-width="0.7"/><polygon points="141.5,136.8 145.1,140.1 140.7,142.6 137.1,139.3" fill="#974983" stroke="#974983" stroke-width="0.7"/><polygon points="145.1,140.1 148.8,143.4 144.3,145.9 140.7,142.6" fill="#953f7d" stroke="#953f7d" stroke-width="0.7"/><polygon points="148.8,143.4 152.4,146.8 147.8,149.2 144.3,145.9" fill="#933677" stroke="#933677" stroke-width="0.7"/><polygon points="152.4,146.8 156.0,150.2 151.4,152.5 147.8,149.2" fill="#8f2d70" stroke="#8f2d70" stroke-width="0.7"/><polygon points="156.0,150.2 159.5,153.5 154.9,155.9 151.4,152.5" fill="#892567" stroke="#892567" stroke-width="0.7"/><polygon points="159.5,153.5 163.3,156.7 158.6,159.0 154.9,155.9" fill="#831e5e" stroke="#831e5e" stroke-width="0.7"/><polygon points="163.3,156.7 167.2,159.6 162.5,161.9 158.6,159.0" fill="#7e1856" stroke="#7e1856" stroke-width="0.7"/><polygon points="167.2,159.6 171.4,161.9 166.7,164.1 162.5,161.9" fill="#7b144e" stroke="#7b144e" stroke-width="0.7"/><polygon points="171.4,161.9 175.7,163.8 171.0,165.9 166.7,164.1" fill="#7a1049" stroke="#7a1049" stroke-width="0.7"/><polygon points="71.7,92.8 75.7,95.3 72.4,97.3 68.5,94.7" fill="#53a8cc" stroke="#53a8cc" stroke-width="0.7"/><polygon points="75.7,95.3 79.8,97.9 76.3,99.9 72.4,97.3" fill="#58a6ca" stroke="#58a6ca" stroke-width="0.7"/><polygon points="79.8,97.9 83.8,100.4 80.2,102.5 76.3,99.9" fill="#5ea3c8" stroke="#5ea3c8" stroke-width="0.7"/><polygon points="83.8,100.4 87.8,103.0 84.2,105.0 80.2,102.5" fill="#64a1c6" stroke="#64a1c6" stroke-width="0.7"/><polygon points="87.8,103.0 91.8,105.5 88.1,107.6 84.2,105.0" fill="#6a9dc3" stroke="#6a9dc3" stroke-width="0.7"/><polygon points="91.8,105.5 95.8,108.0 92.0,110.2 88.1,107.6" fill="#719ac0" stroke="#719ac0" stroke-width="0.7"/><polygon points="95.8,108.0 99.8,110.4 96.0,112.7 92.0,110.2" fill="#7696bd" stroke="#7696bd" stroke-width="0.7"/><polygon points="99.8,110.4 103.8,112.8 99.9,115.1 96.0,112.7" fill="#7b91ba" stroke="#7b91ba" stroke-width="0.7"/><polygon points="103.8,112.8 107.9,115.3 103.9,117.6 99.9,115.1" fill="#7e8cb6" stroke="#7e8cb6" stroke-width="0.7"/><polygon points="107.9,115.3 111.8,117.7 107.7,120.2 103.9,117.6" fill="#8286b1" stroke="#8286b1" stroke-width="0.7"/><polygon points="111.8,117.7 115.8,120.2 111.6,122.7 107.7,120.2" fill="#867fac" stroke="#867fac" stroke-width="0.7"/><polygon points="115.8,120.2 119.8,122.7 115.5,125.2 111.6,122.7" fill="#8c79a7" stroke="#8c79a7" stroke-width="0.7"/><polygon points="119.8,122.7 123.7,125.1 119.4,127.8 115.5,125.2" fill="#9374a1" stroke="#9374a1" stroke-width="0.7"/><polygon points="123.7,125.1 127.0,128.7 122.6,131.3 119.4,127.8" fill="#996d9a" stroke="#996d9a" stroke-width="0.7"/><polygon points="127.0,128.7 130.3,132.4 125.9,134.9 122.6,131.3" fill="#986494" stroke="#986494" stroke-width="0.7"/><polygon points="130.3,132.4 133.5,136.0 129.1,138.5 125.9,134.9" fill="#945a8d" stroke="#945a8d" stroke-width="0.7"/><polygon points="133.5,136.0 137.1,139.3 132.7,141.8 129.1,138.5" fill="#905087" stroke="#905087" stroke-width="0.7"/><polygon points="137.1,139.3 140.7,142.6 136.2,145.0 132.7,141.8" fill="#8e4681" stroke="#8e4681" stroke-width="0.7"/><polygon points="140.7,142.6 144.3,145.9 139.7,148.3 136.2,145.0" fill="#8c3c7b" stroke="#8c3c7b" stroke-width="0.7"/><polygon points="144.3,145.9 147.8,149.2 143.3,151.6 139.7,148.3" fill="#8a3275" stroke="#8a3275" stroke-width="0.7"/><polygon points="147.8,149.2 151.4,152.5 146.7,154.9 143.3,151.6" fill="#88296e" stroke="#88296e" stroke-width="0.7"/><polygon points="151.4,152.5 154.9,155.9 150.2,158.3 146.7,154.9" fill="#832165" stroke="#832165" stroke-width="0.7"/><polygon points="154.9,155.9 158.6,159.0 154.0,161.3 150.2,158.3" fill="#7d1c5c" stroke="#7d1c5c" stroke-width="0.7"/><polygon points="158.6,159.0 162.5,161.9 157.8,164.2 154.0,161.3" fill="#791754" stroke="#791754" stroke-width="0.7"/><polygon points="162.5,161.9 166.7,164.1 162.0,166.3 157.8,164.2" fill="#76134d" stroke="#76134d" stroke-width="0.7"/><polygon points="166.7,164.1 171.0,165.9 166.3,167.9 162.0,166.3" fill="#751048" stroke="#751048" stroke-width="0.7"/><polygon points="68.5,94.7 72.4,97.3 69.0,99.2 65.2,96.6" fill="#48a4cb" stroke="#48a4cb" stroke-width="0.7"/><polygon points="72.4,97.3 76.3,99.9 72.9,101.9 69.0,99.2" fill="#4ba1ca" stroke="#4ba1ca" stroke-width="0.7"/><polygon points="76.3,99.9 80.2,102.5 76.7,104.5 72.9,101.9" fill="#519ec7" stroke="#519ec7" stroke-width="0.7"/><polygon points="80.2,102.5 84.2,105.0 80.6,107.1 76.7,104.5" fill="#579bc4" stroke="#579bc4" stroke-width="0.7"/><polygon points="84.2,105.0 88.1,107.6 84.4,109.8 80.6,107.1" fill="#5d98c2" stroke="#5d98c2" stroke-width="0.7"/><polygon points="88.1,107.6 92.0,110.2 88.3,112.4 84.4,109.8" fill="#6494be" stroke="#6494be" stroke-width="0.7"/><polygon points="92.0,110.2 96.0,112.7 92.1,114.9 88.3,112.4" fill="#6991bb" stroke="#6991bb" stroke-width="0.7"/><polygon points="96.0,112.7 99.9,115.1 96.0,117.4 92.1,114.9" fill="#6e8cb8" stroke="#6e8cb8" stroke-width="0.7"/><polygon points="99.9,115.1 103.9,117.6 99.9,120.0 96.0,117.4" fill="#7288b5" stroke="#7288b5" stroke-width="0.7"/><polygon points="103.9,117.6 107.7,120.2 103.7,122.6 99.9,120.0" fill="#7682b1" stroke="#7682b1" stroke-width="0.7"/><polygon points="107.7,120.2 111.6,122.7 107.5,125.2 103.7,122.6" fill="#7b7cac" stroke="#7b7cac" stroke-width="0.7"/><polygon points="111.6,122.7 115.5,125.2 111.3,127.8 107.5,125.2" fill="#8076a7" stroke="#8076a7" stroke-width="0.7"/><polygon points="115.5,125.2 119.4,127.8 115.1,130.4 111.3,127.8" fill="#8670a1" stroke="#8670a1" stroke-width="0.7"/><polygon points="119.4,127.8 122.6,131.3 118.3,133.9 115.1,130.4" fill="#8b699b" stroke="#8b699b" stroke-width="0.7"/><polygon points="122.6,131.3 125.9,134.9 121.5,137.4 118.3,133.9" fill="#8c6195" stroke="#8c6195" stroke-width="0.7"/><polygon points="125.9,134.9 129.1,138.5 124.7,141.0 121.5,137.4" fill="#8a578e" stroke="#8a578e" stroke-width="0.7"/><polygon points="129.1,138.5 132.7,141.8 128.2,144.2 124.7,141.0" fill="#864e88" stroke="#864e88" stroke-width="0.7"/><polygon points="132.7,141.8 136.2,145.0 131.7,147.5 128.2,144.2" fill="#834481" stroke="#834481" stroke-width="0.7"/><polygon points="136.2,145.0 139.7,148.3 135.2,150.7 131.7,147.5" fill="#813a79" stroke="#813a79" stroke-width="0.7"/><polygon points="139.7,148.3 143.3,151.6 138.7,154.0 135.2,150.7" fill="#7f3072" stroke="#7f3072" stroke-width="0.7"/><polygon points="143.3,151.6 146.7,154.9 142.1,157.3 138.7,154.0" fill="#7e266b" stroke="#7e266b" stroke-width="0.7"/><polygon points="146.7,154.9 150.2,158.3 145.6,160.6 142.1,157.3" fill="#7b1e62" stroke="#7b1e62" stroke-width="0.7"/><polygon points="150.2,158.3 154.0,161.3 149.3,163.6 145.6,160.6" fill="#751959" stroke="#751959" stroke-width="0.7"/><polygon points="154.0,161.3 157.8,164.2 153.1,166.4 149.3,163.6" fill="#711551" stroke="#711551" stroke-width="0.7"/><polygon points="157.8,164.2 162.0,166.3 157.3,168.5 153.1,166.4" fill="#6f114b" stroke="#6f114b" stroke-width="0.7"/><polygon points="162.0,166.3 166.3,167.9 161.6,170.0 157.3,168.5" fill="#6f0f47" stroke="#6f0f47" stroke-width="0.7"/><polygon points="65.2,96.6 69.0,99.2 65.7,101.2 61.9,98.5" fill="#3fa0ca" stroke="#3fa0ca" stroke-width="0.7"/><polygon points="69.0,99.2 72.9,101.9 69.4,103.8 65.7,101.2" fill="#3f9cc9" stroke="#3f9cc9" stroke-width="0.7"/><polygon points="72.9,101.9 76.7,104.5 73.2,106.5 69.4,103.8" fill="#449ac6" stroke="#449ac6" stroke-width="0.7"/><polygon points="76.7,104.5 80.6,107.1 77.0,109.2 73.2,106.5" fill="#4b96c3" stroke="#4b96c3" stroke-width="0.7"/><polygon points="80.6,107.1 84.4,109.8 80.7,111.9 77.0,109.2" fill="#5193c0" stroke="#5193c0" stroke-width="0.7"/><polygon points="84.4,109.8 88.3,112.4 84.5,114.6 80.7,111.9" fill="#578fbd" stroke="#578fbd" stroke-width="0.7"/><polygon points="88.3,112.4 92.1,114.9 88.3,117.2 84.5,114.6" fill="#5c8bb9" stroke="#5c8bb9" stroke-width="0.7"/><polygon points="92.1,114.9 96.0,117.4 92.1,119.7 88.3,117.2" fill="#6287b6" stroke="#6287b6" stroke-width="0.7"/><polygon points="96.0,117.4 99.9,120.0 95.8,122.4 92.1,119.7" fill="#6683b4" stroke="#6683b4" stroke-width="0.7"/><polygon points="99.9,120.0 103.7,122.6 99.6,125.0 95.8,122.4" fill="#6a7eb0" stroke="#6a7eb0" stroke-width="0.7"/><polygon points="103.7,122.6 107.5,125.2 103.3,127.7 99.6,125.0" fill="#6e79ac" stroke="#6e79ac" stroke-width="0.7"/><polygon points="107.5,125.2 111.3,127.8 107.0,130.4 103.3,127.7" fill="#7373a7" stroke="#7373a7" stroke-width="0.7"/><polygon points="111.3,127.8 115.1,130.4 110.7,133.0 107.0,130.4" fill="#796ca2" stroke="#796ca2" stroke-width="0.7"/><polygon points="115.1,130.4 118.3,133.9 113.9,136.5 110.7,133.0" fill="#7d659c" stroke="#7d659c" stroke-width="0.7"/><polygon points="118.3,133.9 121.5,137.4 117.1,140.0 113.9,136.5" fill="#7f5d96" stroke="#7f5d96" stroke-width="0.7"/><polygon points="121.5,137.4 124.7,141.0 120.3,143.5 117.1,140.0" fill="#7e548f" stroke="#7e548f" stroke-width="0.7"/><polygon points="124.7,141.0 128.2,144.2 123.8,146.7 120.3,143.5" fill="#7b4b88" stroke="#7b4b88" stroke-width="0.7"/><polygon points="128.2,144.2 131.7,147.5 127.2,149.9 123.8,146.7" fill="#784280" stroke="#784280" stroke-width="0.7"/><polygon points="131.7,147.5 135.2,150.7 130.7,153.2 127.2,149.9" fill="#743878" stroke="#743878" stroke-width="0.7"/><polygon points="135.2,150.7 138.7,154.0 134.1,156.4 130.7,153.2" fill="#712e6f" stroke="#712e6f" stroke-width="0.7"/><polygon points="138.7,154.0 142.1,157.3 137.5,159.7 134.1,156.4" fill="#6f2566" stroke="#6f2566" stroke-width="0.7"/><polygon points="142.1,157.3 145.6,160.6 140.9,163.0 137.5,159.7" fill="#6d1d5d" stroke="#6d1d5d" stroke-width="0.7"/><polygon points="145.6,160.6 149.3,163.6 144.6,166.0 140.9,163.0" fill="#691754" stroke="#691754" stroke-width="0.7"/><polygon points="149.3,163.6 153.1,166.4 148.4,168.7 144.6,166.0" fill="#67134d" stroke="#67134d" stroke-width="0.7"/><polygon points="153.1,166.4 157.3,168.5 152.6,170.6 148.4,168.7" fill="#661047" stroke="#661047" stroke-width="0.7"/><polygon points="157.3,168.5 161.6,170.0 156.9,172.0 152.6,170.6" fill="#670d44" stroke="#670d44" stroke-width="0.7"/><polygon points="61.9,98.5 65.7,101.2 62.3,103.1 58.6,100.4" fill="#379cc8" stroke="#379cc8" stroke-width="0.7"/><polygon points="65.7,101.2 69.4,103.8 66.0,105.8 62.3,103.1" fill="#3798c7" stroke="#3798c7" stroke-width="0.7"/><polygon points="69.4,103.8 73.2,106.5 69.7,108.6 66.0,105.8" fill="#3a95c5" stroke="#3a95c5" stroke-width="0.7"/><polygon points="73.2,106.5 77.0,109.2 73.4,111.3 69.7,108.6" fill="#3f92c2" stroke="#3f92c2" stroke-width="0.7"/><polygon points="77.0,109.2 80.7,111.9 77.1,114.0 73.4,111.3" fill="#448ebf" stroke="#448ebf" stroke-width="0.7"/><polygon points="80.7,111.9 84.5,114.6 80.7,116.7 77.1,114.0" fill="#4a8abb" stroke="#4a8abb" stroke-width="0.7"/><polygon points="84.5,114.6 88.3,117.2 84.5,119.4 80.7,116.7" fill="#5086b7" stroke="#5086b7" stroke-width="0.7"/><polygon points="88.3,117.2 92.1,119.7 88.2,122.1 84.5,119.4" fill="#5581b4" stroke="#5581b4" stroke-width="0.7"/><polygon points="92.1,119.7 95.8,122.4 91.8,124.7 88.2,122.1" fill="#597eb2" stroke="#597eb2" stroke-width="0.7"/><polygon points="95.8,122.4 99.6,125.0 95.5,127.5 91.8,124.7" fill="#5d7aaf" stroke="#5d7aaf" stroke-width="0.7"/><polygon points="99.6,125.0 103.3,127.7 99.1,130.2 95.5,127.5" fill="#6175ac" stroke="#6175ac" stroke-width="0.7"/><polygon points="103.3,127.7 107.0,130.4 102.7,132.9 99.1,130.2" fill="#666fa7" stroke="#666fa7" stroke-width="0.7"/><polygon points="107.0,130.4 110.7,133.0 106.4,135.7 102.7,132.9" fill="#6b69a2" stroke="#6b69a2" stroke-width="0.7"/><polygon points="110.7,133.0 113.9,136.5 109.6,139.1 106.4,135.7" fill="#6f619c" stroke="#6f619c" stroke-width="0.7"/><polygon points="113.9,136.5 117.1,140.0 112.8,142.5 109.6,139.1" fill="#715996" stroke="#715996" stroke-width="0.7"/><polygon points="117.1,140.0 120.3,143.5 116.0,145.9 112.8,142.5" fill="#715190" stroke="#715190" stroke-width="0.7"/><polygon points="120.3,143.5 123.8,146.7 119.4,149.2 116.0,145.9" fill="#704989" stroke="#704989" stroke-width="0.7"/><polygon points="123.8,146.7 127.2,149.9 122.8,152.4 119.4,149.2" fill="#6c4081" stroke="#6c4081" stroke-width="0.7"/><polygon points="127.2,149.9 130.7,153.2 126.2,155.6 122.8,152.4" fill="#673777" stroke="#673777" stroke-width="0.7"/><polygon points="130.7,153.2 134.1,156.4 129.5,158.8 126.2,155.6" fill="#622d6d" stroke="#622d6d" stroke-width="0.7"/><polygon points="134.1,156.4 137.5,159.7 132.9,162.1 129.5,158.8" fill="#5f2462" stroke="#5f2462" stroke-width="0.7"/><polygon points="137.5,159.7 140.9,163.0 136.3,165.4 132.9,162.1" fill="#5d1c57" stroke="#5d1c57" stroke-width="0.7"/><polygon points="140.9,163.0 144.6,166.0 139.9,168.3 136.3,165.4" fill="#5b164e" stroke="#5b164e" stroke-width="0.7"/><polygon points="144.6,166.0 148.4,168.7 143.8,171.0 139.9,168.3" fill="#5a1147" stroke="#5a1147" stroke-width="0.7"/><polygon points="148.4,168.7 152.6,170.6 147.9,172.8 143.8,171.0" fill="#5b0e42" stroke="#5b0e42" stroke-width="0.7"/><polygon points="152.6,170.6 156.9,172.0 152.2,174.1 147.9,172.8" fill="#5d0c40" stroke="#5d0c40" stroke-width="0.7"/><polygon points="58.6,100.4 62.3,103.1 58.9,105.0 55.3,102.3" fill="#3199c6" stroke="#3199c6" stroke-width="0.7"/><polygon points="62.3,103.1 66.0,105.8 62.5,107.8 58.9,105.0" fill="#3095c4" stroke="#3095c4" stroke-width="0.7"/><polygon points="66.0,105.8 69.7,108.6 66.2,110.6 62.5,107.8" fill="#3191c2" stroke="#3191c2" stroke-width="0.7"/><polygon points="69.7,108.6 73.4,111.3 69.8,113.4 66.2,110.6" fill="#358dc0" stroke="#358dc0" stroke-width="0.7"/><polygon points="73.4,111.3 77.1,114.0 73.4,116.2 69.8,113.4" fill="#398abd" stroke="#398abd" stroke-width="0.7"/><polygon points="77.1,114.0 80.7,116.7 77.0,118.9 73.4,116.2" fill="#3e86ba" stroke="#3e86ba" stroke-width="0.7"/><polygon points="80.7,116.7 84.5,119.4 80.6,121.7 77.0,118.9" fill="#4481b6" stroke="#4481b6" stroke-width="0.7"/><polygon points="84.5,119.4 88.2,122.1 84.2,124.4 80.6,121.7" fill="#497cb1" stroke="#497cb1" stroke-width="0.7"/><polygon points="88.2,122.1 91.8,124.7 87.9,127.1 84.2,124.4" fill="#4d78af" stroke="#4d78af" stroke-width="0.7"/><polygon points="91.8,124.7 95.5,127.5 91.4,129.9 87.9,127.1" fill="#5075ad" stroke="#5075ad" stroke-width="0.7"/><polygon points="95.5,127.5 99.1,130.2 94.9,132.7 91.4,129.9" fill="#5371ab" stroke="#5371ab" stroke-width="0.7"/><polygon points="99.1,130.2 102.7,132.9 98.5,135.5 94.9,132.7" fill="#576ca7" stroke="#576ca7" stroke-width="0.7"/><polygon points="102.7,132.9 106.4,135.7 102.0,138.3 98.5,135.5" fill="#5c65a2" stroke="#5c65a2" stroke-width="0.7"/><polygon points="106.4,135.7 109.6,139.1 105.2,141.7 102.0,138.3" fill="#615d9b" stroke="#615d9b" stroke-width="0.7"/><polygon points="109.6,139.1 112.8,142.5 108.4,145.1 105.2,141.7" fill="#635595" stroke="#635595" stroke-width="0.7"/><polygon points="112.8,142.5 116.0,145.9 111.6,148.5 108.4,145.1" fill="#654e8f" stroke="#654e8f" stroke-width="0.7"/><polygon points="116.0,145.9 119.4,149.2 114.9,151.7 111.6,148.5" fill="#654689" stroke="#654689" stroke-width="0.7"/><polygon points="119.4,149.2 122.8,152.4 118.3,154.9 114.9,151.7" fill="#623e81" stroke="#623e81" stroke-width="0.7"/><polygon points="122.8,152.4 126.2,155.6 121.7,158.1 118.3,154.9" fill="#5b3577" stroke="#5b3577" stroke-width="0.7"/><polygon points="126.2,155.6 129.5,158.8 125.0,161.3 121.7,158.1" fill="#532c6b" stroke="#532c6b" stroke-width="0.7"/><polygon points="129.5,158.8 132.9,162.1 128.3,164.5 125.0,161.3" fill="#4f235e" stroke="#4f235e" stroke-width="0.7"/><polygon points="132.9,162.1 136.3,165.4 131.6,167.8 128.3,164.5" fill="#4d1b52" stroke="#4d1b52" stroke-width="0.7"/><polygon points="136.3,165.4 139.9,168.3 135.3,170.7 131.6,167.8" fill="#4b1548" stroke="#4b1548" stroke-width="0.7"/><polygon points="139.9,168.3 143.8,171.0 139.1,173.3 135.3,170.7" fill="#4b103f" stroke="#4b103f" stroke-width="0.7"/><polygon points="143.8,171.0 147.9,172.8 143.2,175.0 139.1,173.3" fill="#4d0d3b" stroke="#4d0d3b" stroke-width="0.7"/><polygon points="147.9,172.8 152.2,174.1 147.6,176.2 143.2,175.0" fill="#520b3a" stroke="#520b3a" stroke-width="0.7"/><polygon points="55.3,102.3 58.9,105.0 55.6,107.0 52.0,104.1" fill="#2b96c4" stroke="#2b96c4" stroke-width="0.7"/><polygon points="58.9,105.0 62.5,107.8 59.1,109.9 55.6,107.0" fill="#2a92c2" stroke="#2a92c2" stroke-width="0.7"/><polygon points="62.5,107.8 66.2,110.6 62.7,112.7 59.1,109.9" fill="#2b8dc0" stroke="#2b8dc0" stroke-width="0.7"/><polygon points="66.2,110.6 69.8,113.4 66.2,115.6 62.7,112.7" fill="#2c89bd" stroke="#2c89bd" stroke-width="0.7"/><polygon points="69.8,113.4 73.4,116.2 69.8,118.4 66.2,115.6" fill="#2f86bb" stroke="#2f86bb" stroke-width="0.7"/><polygon points="73.4,116.2 77.0,118.9 73.3,121.3 69.8,118.4" fill="#3382b8" stroke="#3382b8" stroke-width="0.7"/><polygon points="77.0,118.9 80.6,121.7 76.9,124.1 73.3,121.3" fill="#387eb4" stroke="#387eb4" stroke-width="0.7"/><polygon points="80.6,121.7 84.2,124.4 80.4,126.9 76.9,124.1" fill="#3d79b0" stroke="#3d79b0" stroke-width="0.7"/><polygon points="84.2,124.4 87.9,127.1 84.0,129.7 80.4,126.9" fill="#4174ad" stroke="#4174ad" stroke-width="0.7"/><polygon points="87.9,127.1 91.4,129.9 87.4,132.6 84.0,129.7" fill="#4470aa" stroke="#4470aa" stroke-width="0.7"/><polygon points="91.4,129.9 94.9,132.7 90.9,135.5 87.4,132.6" fill="#476ca8" stroke="#476ca8" stroke-width="0.7"/><polygon points="94.9,132.7 98.5,135.5 94.4,138.4 90.9,135.5" fill="#4968a6" stroke="#4968a6" stroke-width="0.7"/><polygon points="98.5,135.5 102.0,138.3 97.9,141.3 94.4,138.4" fill="#4e61a0" stroke="#4e61a0" stroke-width="0.7"/><polygon points="102.0,138.3 105.2,141.7 101.1,144.6 97.9,141.3" fill="#535999" stroke="#535999" stroke-width="0.7"/><polygon points="105.2,141.7 108.4,145.1 104.2,148.0 101.1,144.6" fill="#565193" stroke="#565193" stroke-width="0.7"/><polygon points="108.4,145.1 111.6,148.5 107.4,151.3 104.2,148.0" fill="#584a8c" stroke="#584a8c" stroke-width="0.7"/><polygon points="111.6,148.5 114.9,151.7 110.7,154.6 107.4,151.3" fill="#594387" stroke="#594387" stroke-width="0.7"/><polygon points="114.9,151.7 118.3,154.9 114.1,157.8 110.7,154.6" fill="#5a3c81" stroke="#5a3c81" stroke-width="0.7"/><polygon points="118.3,154.9 121.7,158.1 117.4,161.0 114.1,157.8" fill="#533375" stroke="#533375" stroke-width="0.7"/><polygon points="121.7,158.1 125.0,161.3 120.7,164.2 117.4,161.0" fill="#482a66" stroke="#482a66" stroke-width="0.7"/><polygon points="125.0,161.3 128.3,164.5 124.0,167.5 120.7,164.2" fill="#422159" stroke="#422159" stroke-width="0.7"/><polygon points="128.3,164.5 131.6,167.8 127.3,170.7 124.0,167.5" fill="#401a4c" stroke="#401a4c" stroke-width="0.7"/><polygon points="131.6,167.8 135.3,170.7 130.9,173.6 127.3,170.7" fill="#3d1442" stroke="#3d1442" stroke-width="0.7"/><polygon points="135.3,170.7 139.1,173.3 134.7,176.2 130.9,173.6" fill="#3c0e38" stroke="#3c0e38" stroke-width="0.7"/><polygon points="139.1,173.3 143.2,175.0 138.8,177.9 134.7,176.2" fill="#3e0a33" stroke="#3e0a33" stroke-width="0.7"/><polygon points="143.2,175.0 147.6,176.2 143.2,178.9 138.8,177.9" fill="#450934" stroke="#450934" stroke-width="0.7"/><polygon points="52.0,104.1 55.6,107.0 52.2,109.0 48.8,106.0" fill="#2694c3" stroke="#2694c3" stroke-width="0.7"/><polygon points="55.6,107.0 59.1,109.9 55.7,111.9 52.2,109.0" fill="#258fc0" stroke="#258fc0" stroke-width="0.7"/><polygon points="59.1,109.9 62.7,112.7 59.2,114.8 55.7,111.9" fill="#258abd" stroke="#258abd" stroke-width="0.7"/><polygon points="62.7,112.7 66.2,115.6 62.7,117.7 59.2,114.8" fill="#2685ba" stroke="#2685ba" stroke-width="0.7"/><polygon points="66.2,115.6 69.8,118.4 66.2,120.7 62.7,117.7" fill="#2781b8" stroke="#2781b8" stroke-width="0.7"/><polygon points="69.8,118.4 73.3,121.3 69.6,123.6 66.2,120.7" fill="#297eb6" stroke="#297eb6" stroke-width="0.7"/><polygon points="73.3,121.3 76.9,124.1 73.1,126.5 69.6,123.6" fill="#2e7ab2" stroke="#2e7ab2" stroke-width="0.7"/><polygon points="76.9,124.1 80.4,126.9 76.6,129.4 73.1,126.5" fill="#3276ae" stroke="#3276ae" stroke-width="0.7"/><polygon points="80.4,126.9 84.0,129.7 80.1,132.3 76.6,129.4" fill="#3671aa" stroke="#3671aa" stroke-width="0.7"/><polygon points="84.0,129.7 87.4,132.6 83.5,135.3 80.1,132.3" fill="#396ca7" stroke="#396ca7" stroke-width="0.7"/><polygon points="87.4,132.6 90.9,135.5 86.9,138.3 83.5,135.3" fill="#3c67a3" stroke="#3c67a3" stroke-width="0.7"/><polygon points="90.9,135.5 94.4,138.4 90.3,141.2 86.9,138.3" fill="#3e619f" stroke="#3e619f" stroke-width="0.7"/><polygon points="94.4,138.4 97.9,141.3 93.7,144.2 90.3,141.2" fill="#425b9a" stroke="#425b9a" stroke-width="0.7"/><polygon points="97.9,141.3 101.1,144.6 96.9,147.6 93.7,144.2" fill="#455495" stroke="#455495" stroke-width="0.7"/><polygon points="101.1,144.6 104.2,148.0 100.1,150.9 96.9,147.6" fill="#484d8f" stroke="#484d8f" stroke-width="0.7"/><polygon points="104.2,148.0 107.4,151.3 103.2,154.2 100.1,150.9" fill="#4a4588" stroke="#4a4588" stroke-width="0.7"/><polygon points="107.4,151.3 110.7,154.6 106.5,157.4 103.2,154.2" fill="#4c3e81" stroke="#4c3e81" stroke-width="0.7"/><polygon points="110.7,154.6 114.1,157.8 109.8,160.7 106.5,157.4" fill="#4b3678" stroke="#4b3678" stroke-width="0.7"/><polygon points="114.1,157.8 117.4,161.0 113.1,163.9 109.8,160.7" fill="#472e6c" stroke="#472e6c" stroke-width="0.7"/><polygon points="117.4,161.0 120.7,164.2 116.4,167.1 113.1,163.9" fill="#3f255e" stroke="#3f255e" stroke-width="0.7"/><polygon points="120.7,164.2 124.0,167.5 119.7,170.4 116.4,167.1" fill="#381e51" stroke="#381e51" stroke-width="0.7"/><polygon points="124.0,167.5 127.3,170.7 122.9,173.6 119.7,170.4" fill="#341846" stroke="#341846" stroke-width="0.7"/><polygon points="127.3,170.7 130.9,173.6 126.5,176.5 122.9,173.6" fill="#32123c" stroke="#32123c" stroke-width="0.7"/><polygon points="130.9,173.6 134.7,176.2 130.3,179.1 126.5,176.5" fill="#310d34" stroke="#310d34" stroke-width="0.7"/><polygon points="134.7,176.2 138.8,177.9 134.5,180.7 130.3,179.1" fill="#320a2e" stroke="#320a2e" stroke-width="0.7"/><polygon points="138.8,177.9 143.2,178.9 138.9,181.6 134.5,180.7" fill="#37082d" stroke="#37082d" stroke-width="0.7"/><polygon points="48.8,106.0 52.2,109.0 48.9,110.9 45.5,107.9" fill="#2192c1" stroke="#2192c1" stroke-width="0.7"/><polygon points="52.2,109.0 55.7,111.9 52.3,113.9 48.9,110.9" fill="#208cbe" stroke="#208cbe" stroke-width="0.7"/><polygon points="55.7,111.9 59.2,114.8 55.7,116.9 52.3,113.9" fill="#2087ba" stroke="#2087ba" stroke-width="0.7"/><polygon points="59.2,114.8 62.7,117.7 59.1,119.9 55.7,116.9" fill="#2081b6" stroke="#2081b6" stroke-width="0.7"/><polygon points="62.7,117.7 66.2,120.7 62.5,122.9 59.1,119.9" fill="#217cb3" stroke="#217cb3" stroke-width="0.7"/><polygon points="66.2,120.7 69.6,123.6 66.0,125.9 62.5,122.9" fill="#2379b1" stroke="#2379b1" stroke-width="0.7"/><polygon points="69.6,123.6 73.1,126.5 69.4,128.9 66.0,125.9" fill="#2577af" stroke="#2577af" stroke-width="0.7"/><polygon points="73.1,126.5 76.6,129.4 72.8,131.9 69.4,128.9" fill="#2974ac" stroke="#2974ac" stroke-width="0.7"/><polygon points="76.6,129.4 80.1,132.3 76.2,134.9 72.8,131.9" fill="#2c6fa8" stroke="#2c6fa8" stroke-width="0.7"/><polygon points="80.1,132.3 83.5,135.3 79.5,138.0 76.2,134.9" fill="#2f69a4" stroke="#2f69a4" stroke-width="0.7"/><polygon points="83.5,135.3 86.9,138.3 82.9,141.0 79.5,138.0" fill="#32629e" stroke="#32629e" stroke-width="0.7"/><polygon points="86.9,138.3 90.3,141.2 86.2,144.1 82.9,141.0" fill="#345a98" stroke="#345a98" stroke-width="0.7"/><polygon points="90.3,141.2 93.7,144.2 89.5,147.2 86.2,144.1" fill="#365493" stroke="#365493" stroke-width="0.7"/><polygon points="93.7,144.2 96.9,147.6 92.7,150.5 89.5,147.2" fill="#394e8f" stroke="#394e8f" stroke-width="0.7"/><polygon points="96.9,147.6 100.1,150.9 95.9,153.8 92.7,150.5" fill="#3b498b" stroke="#3b498b" stroke-width="0.7"/><polygon points="100.1,150.9 103.2,154.2 99.1,157.1 95.9,153.8" fill="#3d4284" stroke="#3d4284" stroke-width="0.7"/><polygon points="103.2,154.2 106.5,157.4 102.3,160.3 99.1,157.1" fill="#3e397b" stroke="#3e397b" stroke-width="0.7"/><polygon points="106.5,157.4 109.8,160.7 105.6,163.6 102.3,160.3" fill="#3d3070" stroke="#3d3070" stroke-width="0.7"/><polygon points="109.8,160.7 113.1,163.9 108.8,166.8 105.6,163.6" fill="#392862" stroke="#392862" stroke-width="0.7"/><polygon points="113.1,163.9 116.4,167.1 112.1,170.0 108.8,166.8" fill="#332154" stroke="#332154" stroke-width="0.7"/><polygon points="116.4,167.1 119.7,170.4 115.3,173.3 112.1,170.0" fill="#2e1a48" stroke="#2e1a48" stroke-width="0.7"/><polygon points="119.7,170.4 122.9,173.6 118.6,176.6 115.3,173.3" fill="#2a153f" stroke="#2a153f" stroke-width="0.7"/><polygon points="122.9,173.6 126.5,176.5 122.1,179.4 118.6,176.6" fill="#281139" stroke="#281139" stroke-width="0.7"/><polygon points="126.5,176.5 130.3,179.1 125.9,181.9 122.1,179.4" fill="#270d32" stroke="#270d32" stroke-width="0.7"/><polygon points="130.3,179.1 134.5,180.7 130.1,183.5 125.9,181.9" fill="#280a2c" stroke="#280a2c" stroke-width="0.7"/><polygon points="134.5,180.7 138.9,181.6 134.5,184.3 130.1,183.5" fill="#2d072a" stroke="#2d072a" stroke-width="0.7"/><polygon points="45.5,107.9 48.9,110.9 45.5,112.8 42.2,109.8" fill="#1c90c0" stroke="#1c90c0" stroke-width="0.7"/><polygon points="48.9,110.9 52.3,113.9 48.8,115.9 45.5,112.8" fill="#1c8bbc" stroke="#1c8bbc" stroke-width="0.7"/><polygon points="52.3,113.9 55.7,116.9 52.2,118.9 48.8,115.9" fill="#1b85b8" stroke="#1b85b8" stroke-width="0.7"/><polygon points="55.7,116.9 59.1,119.9 55.5,121.9 52.2,118.9" fill="#1b7eb4" stroke="#1b7eb4" stroke-width="0.7"/><polygon points="59.1,119.9 62.5,122.9 58.8,124.9 55.5,121.9" fill="#1c78af" stroke="#1c78af" stroke-width="0.7"/><polygon points="62.5,122.9 66.0,125.9 62.2,128.0 58.8,124.9" fill="#1d73ab" stroke="#1d73ab" stroke-width="0.7"/><polygon points="66.0,125.9 69.4,128.9 65.5,131.0 62.2,128.0" fill="#1f74ab" stroke="#1f74ab" stroke-width="0.7"/><polygon points="69.4,128.9 72.8,131.9 68.8,134.0 65.5,131.0" fill="#2173ab" stroke="#2173ab" stroke-width="0.7"/><polygon points="72.8,131.9 76.2,134.9 72.1,137.0 68.8,134.0" fill="#246fa7" stroke="#246fa7" stroke-width="0.7"/><polygon points="76.2,134.9 79.5,138.0 75.4,140.1 72.1,137.0" fill="#2669a2" stroke="#2669a2" stroke-width="0.7"/><polygon points="79.5,138.0 82.9,141.0 78.6,143.2 75.4,140.1" fill="#28609b" stroke="#28609b" stroke-width="0.7"/><polygon points="82.9,141.0 86.2,144.1 81.8,146.4 78.6,143.2" fill="#2a5793" stroke="#2a5793" stroke-width="0.7"/><polygon points="86.2,144.1 89.5,147.2 85.1,149.5 81.8,146.4" fill="#2c4d8b" stroke="#2c4d8b" stroke-width="0.7"/><polygon points="89.5,147.2 92.7,150.5 88.2,152.7 85.1,149.5" fill="#2e4a8b" stroke="#2e4a8b" stroke-width="0.7"/><polygon points="92.7,150.5 95.9,153.8 91.4,155.9 88.2,152.7" fill="#304789" stroke="#304789" stroke-width="0.7"/><polygon points="95.9,153.8 99.1,157.1 94.6,159.1 91.4,155.9" fill="#314183" stroke="#314183" stroke-width="0.7"/><polygon points="99.1,157.1 102.3,160.3 97.8,162.3 94.6,159.1" fill="#323879" stroke="#323879" stroke-width="0.7"/><polygon points="102.3,160.3 105.6,163.6 101.0,165.5 97.8,162.3" fill="#322e6c" stroke="#322e6c" stroke-width="0.7"/><polygon points="105.6,163.6 108.8,166.8 104.2,168.7 101.0,165.5" fill="#2f255e" stroke="#2f255e" stroke-width="0.7"/><polygon points="108.8,166.8 112.1,170.0 107.4,171.9 104.2,168.7" fill="#2a1e4e" stroke="#2a1e4e" stroke-width="0.7"/><polygon points="112.1,170.0 115.3,173.3 110.5,175.1 107.4,171.9" fill="#24163f" stroke="#24163f" stroke-width="0.7"/><polygon points="115.3,173.3 118.6,176.6 113.7,178.3 110.5,175.1" fill="#22133b" stroke="#22133b" stroke-width="0.7"/><polygon points="118.6,176.6 122.1,179.4 117.3,181.1 113.7,178.3" fill="#211239" stroke="#211239" stroke-width="0.7"/><polygon points="122.1,179.4 125.9,181.9 121.1,183.6 117.3,181.1" fill="#200e33" stroke="#200e33" stroke-width="0.7"/><polygon points="125.9,181.9 130.1,183.5 125.2,185.0 121.1,183.6" fill="#200b2c" stroke="#200b2c" stroke-width="0.7"/><polygon points="130.1,183.5 134.5,184.3 129.6,185.7 125.2,185.0" fill="#240829" stroke="#240829" stroke-width="0.7"/><polygon points="42.2,109.8 45.5,112.8 42.1,114.7 38.9,111.7" fill="#188fbf" stroke="#188fbf" stroke-width="0.7"/><polygon points="45.5,112.8 48.8,115.9 45.4,117.8 42.1,114.7" fill="#1889bb" stroke="#1889bb" stroke-width="0.7"/><polygon points="48.8,115.9 52.2,118.9 48.6,120.8 45.4,117.8" fill="#1783b7" stroke="#1783b7" stroke-width="0.7"/><polygon points="52.2,118.9 55.5,121.9 51.9,123.8 48.6,120.8" fill="#177db2" stroke="#177db2" stroke-width="0.7"/><polygon points="55.5,121.9 58.8,124.9 55.1,126.9 51.9,123.8" fill="#1777ad" stroke="#1777ad" stroke-width="0.7"/><polygon points="58.8,124.9 62.2,128.0 58.3,129.9 55.1,126.9" fill="#1871a9" stroke="#1871a9" stroke-width="0.7"/><polygon points="62.2,128.0 65.5,131.0 61.6,132.9 58.3,129.9" fill="#1971a9" stroke="#1971a9" stroke-width="0.7"/><polygon points="65.5,131.0 68.8,134.0 64.8,136.0 61.6,132.9" fill="#1b72a9" stroke="#1b72a9" stroke-width="0.7"/><polygon points="68.8,134.0 72.1,137.0 68.0,139.0 64.8,136.0" fill="#1d71a8" stroke="#1d71a8" stroke-width="0.7"/><polygon points="72.1,137.0 75.4,140.1 71.2,142.2 68.0,139.0" fill="#1f6aa2" stroke="#1f6aa2" stroke-width="0.7"/><polygon points="75.4,140.1 78.6,143.2 74.3,145.3 71.2,142.2" fill="#21619c" stroke="#21619c" stroke-width="0.7"/><polygon points="78.6,143.2 81.8,146.4 77.4,148.4 74.3,145.3" fill="#225894" stroke="#225894" stroke-width="0.7"/><polygon points="81.8,146.4 85.1,149.5 80.6,151.6 77.4,148.4" fill="#244f8d" stroke="#244f8d" stroke-width="0.7"/><polygon points="85.1,149.5 88.2,152.7 83.7,154.7 80.6,151.6" fill="#254b8a" stroke="#254b8a" stroke-width="0.7"/><polygon points="88.2,152.7 91.4,155.9 86.8,157.8 83.7,154.7" fill="#26498a" stroke="#26498a" stroke-width="0.7"/><polygon points="91.4,155.9 94.6,159.1 90.0,161.0 86.8,157.8" fill="#274587" stroke="#274587" stroke-width="0.7"/><polygon points="94.6,159.1 97.8,162.3 93.1,164.1 90.0,161.0" fill="#283c7c" stroke="#283c7c" stroke-width="0.7"/><polygon points="97.8,162.3 101.0,165.5 96.3,167.3 93.1,164.1" fill="#28316f" stroke="#28316f" stroke-width="0.7"/><polygon points="101.0,165.5 104.2,168.7 99.4,170.4 96.3,167.3" fill="#272862" stroke="#272862" stroke-width="0.7"/><polygon points="104.2,168.7 107.4,171.9 102.5,173.5 99.4,170.4" fill="#232053" stroke="#232053" stroke-width="0.7"/><polygon points="107.4,171.9 110.5,175.1 105.7,176.7 102.5,173.5" fill="#1e1944" stroke="#1e1944" stroke-width="0.7"/><polygon points="110.5,175.1 113.7,178.3 108.8,179.8 105.7,176.7" fill="#1b143b" stroke="#1b143b" stroke-width="0.7"/><polygon points="113.7,178.3 117.3,181.1 112.3,182.5 108.8,179.8" fill="#1d1541" stroke="#1d1541" stroke-width="0.7"/><polygon points="117.3,181.1 121.1,183.6 116.1,184.9 112.3,182.5" fill="#1c113a" stroke="#1c113a" stroke-width="0.7"/><polygon points="121.1,183.6 125.2,185.0 120.2,186.1 116.1,184.9" fill="#1b0e31" stroke="#1b0e31" stroke-width="0.7"/><polygon points="125.2,185.0 129.6,185.7 124.6,186.7 120.2,186.1" fill="#1c0a29" stroke="#1c0a29" stroke-width="0.7"/><line x1="124.4" y1="173" x2="124.4" y2="70" stroke="#ee1111" stroke-width="5"/><polygon points="124.4,62 119,70.5 129.8,70.5" fill="#ee1111"/><circle cx="124.4" cy="180" r="6.3" fill="none" stroke="#ee1111" stroke-width="3"/><rect x="0.5" y="0.5" width="249" height="249" fill="none" stroke="#a8a8a8"/></svg>
<svg class="a" style="left:812px;top:269px" width="250" height="250" viewBox="0 0 250 250"><rect x="0" y="0" width="250" height="250" fill="#fff"/><circle cx="125" cy="124.4" r="26" fill="none" stroke="#d4d4d4" stroke-width="1.4"/><circle cx="125" cy="124.4" r="52" fill="none" stroke="#d4d4d4" stroke-width="1.4"/><circle cx="125" cy="124.4" r="78" fill="none" stroke="#d4d4d4" stroke-width="1.4"/><circle cx="125" cy="124.4" r="104" fill="none" stroke="#d4d4d4" stroke-width="1.4"/><circle cx="125" cy="124.4" r="130" fill="none" stroke="#d4d4d4" stroke-width="1.4"/><circle cx="125" cy="124.4" r="156" fill="none" stroke="#d4d4d4" stroke-width="1.4"/><circle cx="125" cy="124.4" r="182" fill="none" stroke="#d4d4d4" stroke-width="1.4"/><line x1="0" y1="124.4" x2="125" y2="124.4" stroke="#2aa0b0" stroke-width="1.4"/><line x1="125" y1="124.4" x2="250" y2="124.4" stroke="#e040c0" stroke-width="1.4"/><line x1="125" y1="0" x2="125" y2="125" stroke="#c8b848" stroke-width="1.4"/><line x1="125" y1="125" x2="125" y2="250" stroke="#2a68b0" stroke-width="1.4"/><polygon points="125.0,124.4 125.0,124.4 124.6,111.9 124.2,111.6" fill="#0e0d08" stroke="#0e0d08" stroke-width="0.6"/><polygon points="124.2,111.6 124.6,111.9 124.3,99.5 123.4,98.9" fill="#211e08" stroke="#211e08" stroke-width="0.6"/><polygon points="123.4,98.9 124.3,99.5 123.9,87.0 122.5,86.1" fill="#363208" stroke="#363208" stroke-width="0.6"/><polygon points="122.5,86.1 123.9,87.0 123.5,74.6 121.7,73.3" fill="#4d4608" stroke="#4d4608" stroke-width="0.6"/><polygon points="121.7,73.3 123.5,74.6 123.2,62.1 120.9,60.6" fill="#645c08" stroke="#645c08" stroke-width="0.6"/><polygon points="120.9,60.6 123.2,62.1 122.8,49.7 120.1,47.8" fill="#7d7209" stroke="#7d7209" stroke-width="0.6"/><polygon points="120.1,47.8 122.8,49.7 122.4,37.2 119.2,35.0" fill="#968909" stroke="#968909" stroke-width="0.6"/><polygon points="119.2,35.0 122.4,37.2 122.1,24.8 118.4,22.3" fill="#afa109" stroke="#afa109" stroke-width="0.6"/><polygon points="118.4,22.3 122.1,24.8 121.7,12.3 117.6,9.5" fill="#cab909" stroke="#cab909" stroke-width="0.6"/><polygon points="125.0,124.4 125.0,124.4 125.1,112.3 124.6,111.9" fill="#0d0d08" stroke="#0d0d08" stroke-width="0.6"/><polygon points="124.6,111.9 125.1,112.3 125.2,100.1 124.3,99.5" fill="#201e08" stroke="#201e08" stroke-width="0.6"/><polygon points="124.3,99.5 125.2,100.1 125.3,88.0 123.9,87.0" fill="#353009" stroke="#353009" stroke-width="0.6"/><polygon points="123.9,87.0 125.3,88.0 125.4,75.8 123.5,74.6" fill="#4c4409" stroke="#4c4409" stroke-width="0.6"/><polygon points="123.5,74.6 125.4,75.8 125.4,63.7 123.2,62.1" fill="#635909" stroke="#635909" stroke-width="0.6"/><polygon points="123.2,62.1 125.4,63.7 125.5,51.6 122.8,49.7" fill="#7b6f0a" stroke="#7b6f0a" stroke-width="0.6"/><polygon points="122.8,49.7 125.5,51.6 125.6,39.4 122.4,37.2" fill="#94850a" stroke="#94850a" stroke-width="0.6"/><polygon points="122.4,37.2 125.6,39.4 125.7,27.3 122.1,24.8" fill="#ae9c0a" stroke="#ae9c0a" stroke-width="0.6"/><polygon points="122.1,24.8 125.7,27.3 125.8,15.2 121.7,12.3" fill="#c8b30b" stroke="#c8b30b" stroke-width="0.6"/><polygon points="125.0,124.4 125.0,124.4 125.5,112.6 125.1,112.3" fill="#0d0c08" stroke="#0d0c08" stroke-width="0.6"/><polygon points="125.1,112.3 125.5,112.6 126.1,100.8 125.2,100.1" fill="#201d09" stroke="#201d09" stroke-width="0.6"/><polygon points="125.2,100.1 126.1,100.8 126.6,88.9 125.3,88.0" fill="#352f09" stroke="#352f09" stroke-width="0.6"/><polygon points="125.3,88.0 126.6,88.9 127.2,77.1 125.4,75.8" fill="#4b420a" stroke="#4b420a" stroke-width="0.6"/><polygon points="125.4,75.8 127.2,77.1 127.7,65.3 125.4,63.7" fill="#62570a" stroke="#62570a" stroke-width="0.6"/><polygon points="125.4,63.7 127.7,65.3 128.3,53.5 125.5,51.6" fill="#7a6c0b" stroke="#7a6c0b" stroke-width="0.6"/><polygon points="125.5,51.6 128.3,53.5 128.8,41.6 125.6,39.4" fill="#93810b" stroke="#93810b" stroke-width="0.6"/><polygon points="125.6,39.4 128.8,41.6 129.4,29.8 125.7,27.3" fill="#ac970c" stroke="#ac970c" stroke-width="0.6"/><polygon points="125.7,27.3 129.4,29.8 129.9,18.0 125.8,15.2" fill="#c6ae0d" stroke="#c6ae0d" stroke-width="0.6"/><polygon points="125.0,124.4 125.0,124.4 126.0,112.9 125.5,112.6" fill="#0d0c08" stroke="#0d0c08" stroke-width="0.6"/><polygon points="125.5,112.6 126.0,112.9 127.0,101.4 126.1,100.8" fill="#201c09" stroke="#201c09" stroke-width="0.6"/><polygon points="126.1,100.8 127.0,101.4 128.0,89.9 126.6,88.9" fill="#352e0a" stroke="#352e0a" stroke-width="0.6"/><polygon points="126.6,88.9 128.0,89.9 129.0,78.4 127.2,77.1" fill="#4b400a" stroke="#4b400a" stroke-width="0.6"/><polygon points="127.2,77.1 129.0,78.4 130.0,66.8 127.7,65.3" fill="#61540b" stroke="#61540b" stroke-width="0.6"/><polygon points="127.7,65.3 130.0,66.8 131.0,55.3 128.3,53.5" fill="#79680c" stroke="#79680c" stroke-width="0.6"/><polygon points="128.3,53.5 131.0,55.3 132.0,43.8 128.8,41.6" fill="#927d0d" stroke="#927d0d" stroke-width="0.6"/><polygon points="128.8,41.6 132.0,43.8 133.0,32.3 129.4,29.8" fill="#ab920e" stroke="#ab920e" stroke-width="0.6"/><polygon points="129.4,29.8 133.0,32.3 134.0,20.8 129.9,18.0" fill="#c4a80f" stroke="#c4a80f" stroke-width="0.6"/><polygon points="125.0,124.4 125.0,124.4 126.7,113.4 126.0,112.9" fill="#0d0c08" stroke="#0d0c08" stroke-width="0.6"/><polygon points="126.0,112.9 126.7,113.4 128.5,102.4 127.0,101.4" fill="#201b09" stroke="#201b09" stroke-width="0.6"/><polygon points="127.0,101.4 128.5,102.4 130.2,91.4 128.0,89.9" fill="#342b0a" stroke="#342b0a" stroke-width="0.6"/><polygon points="128.0,89.9 130.2,91.4 132.0,80.3 129.0,78.4" fill="#4a3d0b" stroke="#4a3d0b" stroke-width="0.6"/><polygon points="129.0,78.4 132.0,80.3 133.7,69.3 130.0,66.8" fill="#614f0d" stroke="#614f0d" stroke-width="0.6"/><polygon points="130.0,66.8 133.7,69.3 135.5,58.3 131.0,55.3" fill="#79630e" stroke="#79630e" stroke-width="0.6"/><polygon points="131.0,55.3 135.5,58.3 137.2,47.3 132.0,43.8" fill="#91760f" stroke="#91760f" stroke-width="0.6"/><polygon points="132.0,43.8 137.2,47.3 138.9,36.3 133.0,32.3" fill="#aa8a10" stroke="#aa8a10" stroke-width="0.6"/><polygon points="133.0,32.3 138.9,36.3 140.7,25.3 134.0,20.8" fill="#c39f11" stroke="#c39f11" stroke-width="0.6"/><polygon points="125.0,124.4 125.0,124.4 127.5,113.9 126.7,113.4" fill="#0d0b09" stroke="#0d0b09" stroke-width="0.6"/><polygon points="126.7,113.4 127.5,113.9 130.0,103.4 128.5,102.4" fill="#20190a" stroke="#20190a" stroke-width="0.6"/><polygon points="128.5,102.4 130.0,103.4 132.4,92.9 130.2,91.4" fill="#34280b" stroke="#34280b" stroke-width="0.6"/><polygon points="130.2,91.4 132.4,92.9 134.9,82.3 132.0,80.3" fill="#4a380d" stroke="#4a380d" stroke-width="0.6"/><polygon points="132.0,80.3 134.9,82.3 137.4,71.8 133.7,69.3" fill="#61490e" stroke="#61490e" stroke-width="0.6"/><polygon points="133.7,69.3 137.4,71.8 139.9,61.3 135.5,58.3" fill="#795b10" stroke="#795b10" stroke-width="0.6"/><polygon points="135.5,58.3 139.9,61.3 142.4,50.8 137.2,47.3" fill="#916c12" stroke="#916c12" stroke-width="0.6"/><polygon points="137.2,47.3 142.4,50.8 144.9,40.3 138.9,36.3" fill="#aa7f13" stroke="#aa7f13" stroke-width="0.6"/><polygon points="138.9,36.3 144.9,40.3 147.3,29.8 140.7,25.3" fill="#c39215" stroke="#c39215" stroke-width="0.6"/><polygon points="125.0,124.4 125.0,124.4 128.2,114.4 127.5,113.9" fill="#0d0b09" stroke="#0d0b09" stroke-width="0.6"/><polygon points="127.5,113.9 128.2,114.4 131.4,104.4 130.0,103.4" fill="#20170a" stroke="#20170a" stroke-width="0.6"/><polygon points="130.0,103.4 131.4,104.4 134.7,94.3 132.4,92.9" fill="#34250c" stroke="#34250c" stroke-width="0.6"/><polygon points="132.4,92.9 134.7,94.3 137.9,84.3 134.9,82.3" fill="#4a340e" stroke="#4a340e" stroke-width="0.6"/><polygon points="134.9,82.3 137.9,84.3 141.1,74.3 137.4,71.8" fill="#614310" stroke="#614310" stroke-width="0.6"/><polygon points="137.4,71.8 141.1,74.3 144.3,64.3 139.9,61.3" fill="#795312" stroke="#795312" stroke-width="0.6"/><polygon points="139.9,61.3 144.3,64.3 147.6,54.3 142.4,50.8" fill="#916314" stroke="#916314" stroke-width="0.6"/><polygon points="142.4,50.8 147.6,54.3 150.8,44.2 144.9,40.3" fill="#aa7317" stroke="#aa7317" stroke-width="0.6"/><polygon points="144.9,40.3 150.8,44.2 154.0,34.2 147.3,29.8" fill="#c38419" stroke="#c38419" stroke-width="0.6"/><polygon points="125.0,124.4 125.0,124.4 129.0,114.9 128.2,114.4" fill="#0d0a09" stroke="#0d0a09" stroke-width="0.6"/><polygon points="128.2,114.4 129.0,114.9 132.9,105.4 131.4,104.4" fill="#20150b" stroke="#20150b" stroke-width="0.6"/><polygon points="131.4,104.4 132.9,105.4 136.9,95.8 134.7,94.3" fill="#34220d" stroke="#34220d" stroke-width="0.6"/><polygon points="134.7,94.3 136.9,95.8 140.9,86.3 137.9,84.3" fill="#4a2f0f" stroke="#4a2f0f" stroke-width="0.6"/><polygon points="137.9,84.3 140.9,86.3 144.8,76.8 141.1,74.3" fill="#613d12" stroke="#613d12" stroke-width="0.6"/><polygon points="141.1,74.3 144.8,76.8 148.8,67.3 144.3,64.3" fill="#794b14" stroke="#794b14" stroke-width="0.6"/><polygon points="144.3,64.3 148.8,67.3 152.8,57.7 147.6,54.3" fill="#915917" stroke="#915917" stroke-width="0.6"/><polygon points="147.6,54.3 152.8,57.7 156.7,48.2 150.8,44.2" fill="#aa681a" stroke="#aa681a" stroke-width="0.6"/><polygon points="150.8,44.2 156.7,48.2 160.7,38.7 154.0,34.2" fill="#c3771d" stroke="#c3771d" stroke-width="0.6"/><polygon points="125.0,124.4 125.0,124.4 130.6,115.5 129.0,114.9" fill="#0d0a09" stroke="#0d0a09" stroke-width="0.6"/><polygon points="129.0,114.9 130.6,115.5 136.2,106.5 132.9,105.4" fill="#20130b" stroke="#20130b" stroke-width="0.6"/><polygon points="132.9,105.4 136.2,106.5 141.8,97.6 136.9,95.8" fill="#341d0d" stroke="#341d0d" stroke-width="0.6"/><polygon points="136.9,95.8 141.8,97.6 147.5,88.6 140.9,86.3" fill="#4a2810" stroke="#4a2810" stroke-width="0.6"/><polygon points="140.9,86.3 147.5,88.6 153.1,79.7 144.8,76.8" fill="#613412" stroke="#613412" stroke-width="0.6"/><polygon points="144.8,76.8 153.1,79.7 158.7,70.7 148.8,67.3" fill="#794015" stroke="#794015" stroke-width="0.6"/><polygon points="148.8,67.3 158.7,70.7 164.3,61.8 152.8,57.7" fill="#914c18" stroke="#914c18" stroke-width="0.6"/><polygon points="152.8,57.7 164.3,61.8 169.9,52.8 156.7,48.2" fill="#aa591b" stroke="#aa591b" stroke-width="0.6"/><polygon points="156.7,48.2 169.9,52.8 175.5,43.9 160.7,38.7" fill="#c3661e" stroke="#c3661e" stroke-width="0.6"/><polygon points="125.0,124.4 125.0,124.4 132.3,116.0 130.6,115.5" fill="#0d0909" stroke="#0d0909" stroke-width="0.6"/><polygon points="130.6,115.5 132.3,116.0 139.5,107.7 136.2,106.5" fill="#20100b" stroke="#20100b" stroke-width="0.6"/><polygon points="136.2,106.5 139.5,107.7 146.8,99.3 141.8,97.6" fill="#34180d" stroke="#34180d" stroke-width="0.6"/><polygon points="141.8,97.6 146.8,99.3 154.0,90.9 147.5,88.6" fill="#4a200f" stroke="#4a200f" stroke-width="0.6"/><polygon points="147.5,88.6 154.0,90.9 161.3,82.6 153.1,79.7" fill="#612911" stroke="#612911" stroke-width="0.6"/><polygon points="153.1,79.7 161.3,82.6 168.6,74.2 158.7,70.7" fill="#793214" stroke="#793214" stroke-width="0.6"/><polygon points="158.7,70.7 168.6,74.2 175.8,65.8 164.3,61.8" fill="#913c16" stroke="#913c16" stroke-width="0.6"/><polygon points="164.3,61.8 175.8,65.8 183.1,57.5 169.9,52.8" fill="#aa4519" stroke="#aa4519" stroke-width="0.6"/><polygon points="169.9,52.8 183.1,57.5 190.3,49.1 175.5,43.9" fill="#c34f1c" stroke="#c34f1c" stroke-width="0.6"/><polygon points="125.0,124.4 125.0,124.4 133.9,116.6 132.3,116.0" fill="#0d0809" stroke="#0d0809" stroke-width="0.6"/><polygon points="132.3,116.0 133.9,116.6 142.8,108.8 139.5,107.7" fill="#200d0a" stroke="#200d0a" stroke-width="0.6"/><polygon points="139.5,107.7 142.8,108.8 151.7,101.0 146.8,99.3" fill="#34120c" stroke="#34120c" stroke-width="0.6"/><polygon points="146.8,99.3 151.7,101.0 160.6,93.2 154.0,90.9" fill="#4a180e" stroke="#4a180e" stroke-width="0.6"/><polygon points="154.0,90.9 160.6,93.2 169.5,85.5 161.3,82.6" fill="#611e11" stroke="#611e11" stroke-width="0.6"/><polygon points="161.3,82.6 169.5,85.5 178.4,77.7 168.6,74.2" fill="#792513" stroke="#792513" stroke-width="0.6"/><polygon points="168.6,74.2 178.4,77.7 187.4,69.9 175.8,65.8" fill="#912b15" stroke="#912b15" stroke-width="0.6"/><polygon points="175.8,65.8 187.4,69.9 196.3,62.1 183.1,57.5" fill="#aa3217" stroke="#aa3217" stroke-width="0.6"/><polygon points="183.1,57.5 196.3,62.1 205.2,54.3 190.3,49.1" fill="#c3391a" stroke="#c3391a" stroke-width="0.6"/><polygon points="125.0,124.4 125.0,124.4 135.6,117.2 133.9,116.6" fill="#0d0709" stroke="#0d0709" stroke-width="0.6"/><polygon points="133.9,116.6 135.6,117.2 146.1,110.0 142.8,108.8" fill="#200a0a" stroke="#200a0a" stroke-width="0.6"/><polygon points="142.8,108.8 146.1,110.0 156.7,102.8 151.7,101.0" fill="#340d0c" stroke="#340d0c" stroke-width="0.6"/><polygon points="151.7,101.0 156.7,102.8 167.2,95.6 160.6,93.2" fill="#4a100e" stroke="#4a100e" stroke-width="0.6"/><polygon points="160.6,93.2 167.2,95.6 177.8,88.3 169.5,85.5" fill="#611410" stroke="#611410" stroke-width="0.6"/><polygon points="169.5,85.5 177.8,88.3 188.3,81.1 178.4,77.7" fill="#791712" stroke="#791712" stroke-width="0.6"/><polygon points="178.4,77.7 188.3,81.1 198.9,73.9 187.4,69.9" fill="#911b14" stroke="#911b14" stroke-width="0.6"/><polygon points="187.4,69.9 198.9,73.9 209.4,66.7 196.3,62.1" fill="#aa1e16" stroke="#aa1e16" stroke-width="0.6"/><polygon points="196.3,62.1 209.4,66.7 220.0,59.5 205.2,54.3" fill="#c32218" stroke="#c32218" stroke-width="0.6"/><polygon points="125.0,124.4 125.0,124.4 135.7,118.0 135.6,117.2" fill="#0d0709" stroke="#0d0709" stroke-width="0.6"/><polygon points="135.6,117.2 135.7,118.0 146.4,111.6 146.1,110.0" fill="#20080b" stroke="#20080b" stroke-width="0.6"/><polygon points="146.1,110.0 146.4,111.6 157.1,105.2 156.7,102.8" fill="#340a0d" stroke="#340a0d" stroke-width="0.6"/><polygon points="156.7,102.8 157.1,105.2 167.7,98.9 167.2,95.6" fill="#4a0c0f" stroke="#4a0c0f" stroke-width="0.6"/><polygon points="167.2,95.6 167.7,98.9 178.4,92.5 177.8,88.3" fill="#610e11" stroke="#610e11" stroke-width="0.6"/><polygon points="177.8,88.3 178.4,92.5 189.1,86.1 188.3,81.1" fill="#781014" stroke="#781014" stroke-width="0.6"/><polygon points="188.3,81.1 189.1,86.1 199.8,79.7 198.9,73.9" fill="#901216" stroke="#901216" stroke-width="0.6"/><polygon points="198.9,73.9 199.8,79.7 210.5,73.3 209.4,66.7" fill="#a91419" stroke="#a91419" stroke-width="0.6"/><polygon points="209.4,66.7 210.5,73.3 221.2,67.0 220.0,59.5" fill="#c2161c" stroke="#c2161c" stroke-width="0.6"/><polygon points="125.0,124.4 125.0,124.4 135.8,118.8 135.7,118.0" fill="#0d0709" stroke="#0d0709" stroke-width="0.6"/><polygon points="135.7,118.0 135.8,118.8 146.6,113.3 146.4,111.6" fill="#1f080c" stroke="#1f080c" stroke-width="0.6"/><polygon points="146.4,111.6 146.6,113.3 157.4,107.7 157.1,105.2" fill="#34090f" stroke="#34090f" stroke-width="0.6"/><polygon points="157.1,105.2 157.4,107.7 168.3,102.2 167.7,98.9" fill="#490b12" stroke="#490b12" stroke-width="0.6"/><polygon points="167.7,98.9 168.3,102.2 179.1,96.6 178.4,92.5" fill="#600d16" stroke="#600d16" stroke-width="0.6"/><polygon points="178.4,92.5 179.1,96.6 189.9,91.1 189.1,86.1" fill="#770f1a" stroke="#770f1a" stroke-width="0.6"/><polygon points="189.1,86.1 189.9,91.1 200.7,85.5 199.8,79.7" fill="#8f101d" stroke="#8f101d" stroke-width="0.6"/><polygon points="199.8,79.7 200.7,85.5 211.5,80.0 210.5,73.3" fill="#a71221" stroke="#a71221" stroke-width="0.6"/><polygon points="210.5,73.3 211.5,80.0 222.3,74.4 221.2,67.0" fill="#c01425" stroke="#c01425" stroke-width="0.6"/><polygon points="125.0,124.4 125.0,124.4 135.9,119.7 135.8,118.8" fill="#0d0609" stroke="#0d0609" stroke-width="0.6"/><polygon points="135.8,118.8 135.9,119.7 146.9,114.9 146.6,113.3" fill="#1f080d" stroke="#1f080d" stroke-width="0.6"/><polygon points="146.6,113.3 146.9,114.9 157.8,110.2 157.4,107.7" fill="#330911" stroke="#330911" stroke-width="0.6"/><polygon points="157.4,107.7 157.8,110.2 168.8,105.5 168.3,102.2" fill="#480a16" stroke="#480a16" stroke-width="0.6"/><polygon points="168.3,102.2 168.8,105.5 179.7,100.8 179.1,96.6" fill="#5f0c1a" stroke="#5f0c1a" stroke-width="0.6"/><polygon points="179.1,96.6 179.7,100.8 190.7,96.0 189.9,91.1" fill="#760d1f" stroke="#760d1f" stroke-width="0.6"/><polygon points="189.9,91.1 190.7,96.0 201.6,91.3 200.7,85.5" fill="#8d0f24" stroke="#8d0f24" stroke-width="0.6"/><polygon points="200.7,85.5 201.6,91.3 212.6,86.6 211.5,80.0" fill="#a61129" stroke="#a61129" stroke-width="0.6"/><polygon points="211.5,80.0 212.6,86.6 223.5,81.8 222.3,74.4" fill="#be122e" stroke="#be122e" stroke-width="0.6"/><polygon points="125.0,124.4 125.0,124.4 136.1,120.5 135.9,119.7" fill="#0d060a" stroke="#0d060a" stroke-width="0.6"/><polygon points="135.9,119.7 136.1,120.5 147.2,116.6 146.9,114.9" fill="#1f070e" stroke="#1f070e" stroke-width="0.6"/><polygon points="146.9,114.9 147.2,116.6 158.2,112.7 157.8,110.2" fill="#330914" stroke="#330914" stroke-width="0.6"/><polygon points="157.8,110.2 158.2,112.7 169.3,108.8 168.8,105.5" fill="#480a19" stroke="#480a19" stroke-width="0.6"/><polygon points="168.8,105.5 169.3,108.8 180.4,104.9 179.7,100.8" fill="#5e0b1f" stroke="#5e0b1f" stroke-width="0.6"/><polygon points="179.7,100.8 180.4,104.9 191.5,101.0 190.7,96.0" fill="#750c25" stroke="#750c25" stroke-width="0.6"/><polygon points="190.7,96.0 191.5,101.0 202.5,97.1 201.6,91.3" fill="#8c0e2b" stroke="#8c0e2b" stroke-width="0.6"/><polygon points="201.6,91.3 202.5,97.1 213.6,93.2 212.6,86.6" fill="#a40f31" stroke="#a40f31" stroke-width="0.6"/><polygon points="212.6,86.6 213.6,93.2 224.7,89.3 223.5,81.8" fill="#bd1038" stroke="#bd1038" stroke-width="0.6"/><polygon points="125.0,124.4 125.0,124.4 136.2,121.5 136.1,120.5" fill="#0d060a" stroke="#0d060a" stroke-width="0.6"/><polygon points="136.1,120.5 136.2,121.5 147.5,118.6 147.2,116.6" fill="#1f0710" stroke="#1f0710" stroke-width="0.6"/><polygon points="147.2,116.6 147.5,118.6 158.7,115.7 158.2,112.7" fill="#330817" stroke="#330817" stroke-width="0.6"/><polygon points="158.2,112.7 158.7,115.7 170.0,112.8 169.3,108.8" fill="#48091e" stroke="#48091e" stroke-width="0.6"/><polygon points="169.3,108.8 170.0,112.8 181.2,109.9 180.4,104.9" fill="#5e0b25" stroke="#5e0b25" stroke-width="0.6"/><polygon points="180.4,104.9 181.2,109.9 192.5,107.0 191.5,101.0" fill="#750c2d" stroke="#750c2d" stroke-width="0.6"/><polygon points="191.5,101.0 192.5,107.0 203.7,104.0 202.5,97.1" fill="#8c0d35" stroke="#8c0d35" stroke-width="0.6"/><polygon points="202.5,97.1 203.7,104.0 215.0,101.1 213.6,93.2" fill="#a40e3d" stroke="#a40e3d" stroke-width="0.6"/><polygon points="213.6,93.2 215.0,101.1 226.2,98.2 224.7,89.3" fill="#bd0f45" stroke="#bd0f45" stroke-width="0.6"/><polygon points="125.0,124.4 125.0,124.4 136.4,122.5 136.2,121.5" fill="#0d060b" stroke="#0d060b" stroke-width="0.6"/><polygon points="136.2,121.5 136.4,122.5 147.8,120.6 147.5,118.6" fill="#1f0713" stroke="#1f0713" stroke-width="0.6"/><polygon points="147.5,118.6 147.8,120.6 159.2,118.7 158.7,115.7" fill="#33081b" stroke="#33081b" stroke-width="0.6"/><polygon points="158.7,115.7 159.2,118.7 170.6,116.7 170.0,112.8" fill="#480924" stroke="#480924" stroke-width="0.6"/><polygon points="170.0,112.8 170.6,116.7 182.1,114.8 181.2,109.9" fill="#5f0b2e" stroke="#5f0b2e" stroke-width="0.6"/><polygon points="181.2,109.9 182.1,114.8 193.5,112.9 192.5,107.0" fill="#760c38" stroke="#760c38" stroke-width="0.6"/><polygon points="192.5,107.0 193.5,112.9 204.9,111.0 203.7,104.0" fill="#8d0d42" stroke="#8d0d42" stroke-width="0.6"/><polygon points="203.7,104.0 204.9,111.0 216.3,109.1 215.0,101.1" fill="#a60e4c" stroke="#a60e4c" stroke-width="0.6"/><polygon points="215.0,101.1 216.3,109.1 227.7,107.2 226.2,98.2" fill="#be0f56" stroke="#be0f56" stroke-width="0.6"/><polygon points="125.0,124.4 125.0,124.4 136.6,123.5 136.4,122.5" fill="#0d060c" stroke="#0d060c" stroke-width="0.6"/><polygon points="136.4,122.5 136.6,123.5 148.2,122.6 147.8,120.6" fill="#1f0715" stroke="#1f0715" stroke-width="0.6"/><polygon points="147.8,120.6 148.2,122.6 159.7,121.6 159.2,118.7" fill="#34081f" stroke="#34081f" stroke-width="0.6"/><polygon points="159.2,118.7 159.7,121.6 171.3,120.7 170.6,116.7" fill="#49092b" stroke="#49092b" stroke-width="0.6"/><polygon points="170.6,116.7 171.3,120.7 182.9,119.8 182.1,114.8" fill="#600b36" stroke="#600b36" stroke-width="0.6"/><polygon points="182.1,114.8 182.9,119.8 194.5,118.9 193.5,112.9" fill="#770c42" stroke="#770c42" stroke-width="0.6"/><polygon points="193.5,112.9 194.5,118.9 206.0,117.9 204.9,111.0" fill="#8f0d4e" stroke="#8f0d4e" stroke-width="0.6"/><polygon points="204.9,111.0 206.0,117.9 217.6,117.0 216.3,109.1" fill="#a70e5b" stroke="#a70e5b" stroke-width="0.6"/><polygon points="216.3,109.1 217.6,117.0 229.2,116.1 227.7,107.2" fill="#c00f68" stroke="#c00f68" stroke-width="0.6"/><polygon points="125.0,124.4 125.0,124.4 136.7,124.5 136.6,123.5" fill="#0d060c" stroke="#0d060c" stroke-width="0.6"/><polygon points="136.6,123.5 136.7,124.5 148.5,124.5 148.2,122.6" fill="#200717" stroke="#200717" stroke-width="0.6"/><polygon points="148.2,122.6 148.5,124.5 160.2,124.6 159.7,121.6" fill="#340824" stroke="#340824" stroke-width="0.6"/><polygon points="159.7,121.6 160.2,124.6 172.0,124.7 171.3,120.7" fill="#4a0931" stroke="#4a0931" stroke-width="0.6"/><polygon points="171.3,120.7 172.0,124.7 183.7,124.7 182.9,119.8" fill="#610b3e" stroke="#610b3e" stroke-width="0.6"/><polygon points="182.9,119.8 183.7,124.7 195.5,124.8 194.5,118.9" fill="#780c4d" stroke="#780c4d" stroke-width="0.6"/><polygon points="194.5,118.9 195.5,124.8 207.2,124.9 206.0,117.9" fill="#900d5b" stroke="#900d5b" stroke-width="0.6"/><polygon points="206.0,117.9 207.2,124.9 219.0,124.9 217.6,117.0" fill="#a90e6a" stroke="#a90e6a" stroke-width="0.6"/><polygon points="217.6,117.0 219.0,124.9 230.7,125.0 229.2,116.1" fill="#c20f79" stroke="#c20f79" stroke-width="0.6"/><polygon points="125.0,124.4 125.0,124.4 136.7,124.7 136.7,124.5" fill="#0d060d" stroke="#0d060d" stroke-width="0.6"/><polygon points="136.7,124.5 136.7,124.7 148.4,124.9 148.5,124.5" fill="#1f0719" stroke="#1f0719" stroke-width="0.6"/><polygon points="148.5,124.5 148.4,124.9 160.1,125.2 160.2,124.6" fill="#340926" stroke="#340926" stroke-width="0.6"/><polygon points="160.2,124.6 160.1,125.2 171.8,125.5 172.0,124.7" fill="#4a0a34" stroke="#4a0a34" stroke-width="0.6"/><polygon points="172.0,124.7 171.8,125.5 183.5,125.8 183.7,124.7" fill="#600b43" stroke="#600b43" stroke-width="0.6"/><polygon points="183.7,124.7 183.5,125.8 195.2,126.0 195.5,124.8" fill="#780c52" stroke="#780c52" stroke-width="0.6"/><polygon points="195.5,124.8 195.2,126.0 206.9,126.3 207.2,124.9" fill="#900e62" stroke="#900e62" stroke-width="0.6"/><polygon points="207.2,124.9 206.9,126.3 218.6,126.6 219.0,124.9" fill="#a80f72" stroke="#a80f72" stroke-width="0.6"/><polygon points="219.0,124.9 218.6,126.6 230.3,126.8 230.7,125.0" fill="#c11082" stroke="#c11082" stroke-width="0.6"/><polygon points="125.0,124.4 125.0,124.4 136.7,124.9 136.7,124.7" fill="#0d060d" stroke="#0d060d" stroke-width="0.6"/><polygon points="136.7,124.7 136.7,124.9 148.3,125.4 148.4,124.9" fill="#1f0819" stroke="#1f0819" stroke-width="0.6"/><polygon points="148.4,124.9 148.3,125.4 159.9,125.8 160.1,125.2" fill="#330926" stroke="#330926" stroke-width="0.6"/><polygon points="160.1,125.2 159.9,125.8 171.6,126.3 171.8,125.5" fill="#480a35" stroke="#480a35" stroke-width="0.6"/><polygon points="171.8,125.5 171.6,126.3 183.2,126.8 183.5,125.8" fill="#5e0c44" stroke="#5e0c44" stroke-width="0.6"/><polygon points="183.5,125.8 183.2,126.8 194.9,127.3 195.2,126.0" fill="#750d53" stroke="#750d53" stroke-width="0.6"/><polygon points="195.2,126.0 194.9,127.3 206.6,127.7 206.9,126.3" fill="#8d0f63" stroke="#8d0f63" stroke-width="0.6"/><polygon points="206.9,126.3 206.6,127.7 218.2,128.2 218.6,126.6" fill="#a51173" stroke="#a51173" stroke-width="0.6"/><polygon points="218.6,126.6 218.2,128.2 229.8,128.7 230.3,126.8" fill="#be1284" stroke="#be1284" stroke-width="0.6"/><polygon points="125.0,124.4 125.0,124.4 136.6,125.1 136.7,124.9" fill="#0d070d" stroke="#0d070d" stroke-width="0.6"/><polygon points="136.7,124.9 136.6,125.1 148.2,125.8 148.3,125.4" fill="#1e0819" stroke="#1e0819" stroke-width="0.6"/><polygon points="148.3,125.4 148.2,125.8 159.8,126.5 159.9,125.8" fill="#320927" stroke="#320927" stroke-width="0.6"/><polygon points="159.9,125.8 159.8,126.5 171.4,127.1 171.6,126.3" fill="#470b35" stroke="#470b35" stroke-width="0.6"/><polygon points="171.6,126.3 171.4,127.1 183.0,127.8 183.2,126.8" fill="#5d0d44" stroke="#5d0d44" stroke-width="0.6"/><polygon points="183.2,126.8 183.0,127.8 194.6,128.5 194.9,127.3" fill="#730f54" stroke="#730f54" stroke-width="0.6"/><polygon points="194.9,127.3 194.6,128.5 206.2,129.2 206.6,127.7" fill="#8a1064" stroke="#8a1064" stroke-width="0.6"/><polygon points="206.6,127.7 206.2,129.2 217.8,129.9 218.2,128.2" fill="#a21274" stroke="#a21274" stroke-width="0.6"/><polygon points="218.2,128.2 217.8,129.9 229.4,130.6 229.8,128.7" fill="#ba1485" stroke="#ba1485" stroke-width="0.6"/><polygon points="125.0,124.4 125.0,124.4 136.6,125.3 136.6,125.1" fill="#0d070d" stroke="#0d070d" stroke-width="0.6"/><polygon points="136.6,125.1 136.6,125.3 148.1,126.2 148.2,125.8" fill="#1e0819" stroke="#1e0819" stroke-width="0.6"/><polygon points="148.2,125.8 148.1,126.2 159.7,127.1 159.8,126.5" fill="#310a27" stroke="#310a27" stroke-width="0.6"/><polygon points="159.8,126.5 159.7,127.1 171.2,128.0 171.4,127.1" fill="#450c36" stroke="#450c36" stroke-width="0.6"/><polygon points="171.4,127.1 171.2,128.0 182.8,128.8 183.0,127.8" fill="#5b0e45" stroke="#5b0e45" stroke-width="0.6"/><polygon points="183.0,127.8 182.8,128.8 194.3,129.7 194.6,128.5" fill="#711055" stroke="#711055" stroke-width="0.6"/><polygon points="194.6,128.5 194.3,129.7 205.9,130.6 206.2,129.2" fill="#871265" stroke="#871265" stroke-width="0.6"/><polygon points="206.2,129.2 205.9,130.6 217.4,131.5 217.8,129.9" fill="#9e1476" stroke="#9e1476" stroke-width="0.6"/><polygon points="217.8,129.9 217.4,131.5 229.0,132.4 229.4,130.6" fill="#b61687" stroke="#b61687" stroke-width="0.6"/><polygon points="125.0,124.4 125.0,124.4 135.9,125.9 136.6,125.3" fill="#0c070d" stroke="#0c070d" stroke-width="0.6"/><polygon points="136.6,125.3 135.9,125.9 146.8,127.4 148.1,126.2" fill="#1d0919" stroke="#1d0919" stroke-width="0.6"/><polygon points="148.1,126.2 146.8,127.4 157.7,128.9 159.7,127.1" fill="#2f0b27" stroke="#2f0b27" stroke-width="0.6"/><polygon points="159.7,127.1 157.7,128.9 168.6,130.4 171.2,128.0" fill="#430d36" stroke="#430d36" stroke-width="0.6"/><polygon points="171.2,128.0 168.6,130.4 179.4,132.0 182.8,128.8" fill="#570f45" stroke="#570f45" stroke-width="0.6"/><polygon points="182.8,128.8 179.4,132.0 190.3,133.5 194.3,129.7" fill="#6c1155" stroke="#6c1155" stroke-width="0.6"/><polygon points="194.3,129.7 190.3,133.5 201.2,135.0 205.9,130.6" fill="#821465" stroke="#821465" stroke-width="0.6"/><polygon points="205.9,130.6 201.2,135.0 212.1,136.5 217.4,131.5" fill="#981675" stroke="#981675" stroke-width="0.6"/><polygon points="217.4,131.5 212.1,136.5 223.0,138.0 229.0,132.4" fill="#af1986" stroke="#af1986" stroke-width="0.6"/><polygon points="125.0,124.4 125.0,124.4 135.2,126.5 135.9,125.9" fill="#0c070d" stroke="#0c070d" stroke-width="0.6"/><polygon points="135.9,125.9 135.2,126.5 145.4,128.7 146.8,127.4" fill="#1b0919" stroke="#1b0919" stroke-width="0.6"/><polygon points="146.8,127.4 145.4,128.7 155.7,130.8 157.7,128.9" fill="#2d0c26" stroke="#2d0c26" stroke-width="0.6"/><polygon points="157.7,128.9 155.7,130.8 165.9,132.9 168.6,130.4" fill="#3f0e35" stroke="#3f0e35" stroke-width="0.6"/><polygon points="168.6,130.4 165.9,132.9 176.1,135.1 179.4,132.0" fill="#521144" stroke="#521144" stroke-width="0.6"/><polygon points="179.4,132.0 176.1,135.1 186.3,137.2 190.3,133.5" fill="#651453" stroke="#651453" stroke-width="0.6"/><polygon points="190.3,133.5 186.3,137.2 196.6,139.3 201.2,135.0" fill="#7a1763" stroke="#7a1763" stroke-width="0.6"/><polygon points="201.2,135.0 196.6,139.3 206.8,141.5 212.1,136.5" fill="#8e1974" stroke="#8e1974" stroke-width="0.6"/><polygon points="212.1,136.5 206.8,141.5 217.0,143.6 223.0,138.0" fill="#a31c85" stroke="#a31c85" stroke-width="0.6"/><polygon points="125.0,124.4 125.0,124.4 134.6,127.2 135.2,126.5" fill="#0c070d" stroke="#0c070d" stroke-width="0.6"/><polygon points="135.2,126.5 134.6,127.2 144.1,129.9 145.4,128.7" fill="#1a0a19" stroke="#1a0a19" stroke-width="0.6"/><polygon points="145.4,128.7 144.1,129.9 153.7,132.7 155.7,130.8" fill="#2a0c26" stroke="#2a0c26" stroke-width="0.6"/><polygon points="155.7,130.8 153.7,132.7 163.2,135.4 165.9,132.9" fill="#3b0f34" stroke="#3b0f34" stroke-width="0.6"/><polygon points="165.9,132.9 163.2,135.4 172.8,138.2 176.1,135.1" fill="#4c1343" stroke="#4c1343" stroke-width="0.6"/><polygon points="176.1,135.1 172.8,138.2 182.3,140.9 186.3,137.2" fill="#5f1652" stroke="#5f1652" stroke-width="0.6"/><polygon points="186.3,137.2 182.3,140.9 191.9,143.7 196.6,139.3" fill="#711962" stroke="#711962" stroke-width="0.6"/><polygon points="196.6,139.3 191.9,143.7 201.4,146.4 206.8,141.5" fill="#841d72" stroke="#841d72" stroke-width="0.6"/><polygon points="206.8,141.5 201.4,146.4 211.0,149.2 217.0,143.6" fill="#982083" stroke="#982083" stroke-width="0.6"/><polygon points="125.0,124.4 125.0,124.4 133.9,127.8 134.6,127.2" fill="#0b070d" stroke="#0b070d" stroke-width="0.6"/><polygon points="134.6,127.2 133.9,127.8 142.8,131.2 144.1,129.9" fill="#180a18" stroke="#180a18" stroke-width="0.6"/><polygon points="144.1,129.9 142.8,131.2 151.7,134.5 153.7,132.7" fill="#270d26" stroke="#270d26" stroke-width="0.6"/><polygon points="153.7,132.7 151.7,134.5 160.6,137.9 163.2,135.4" fill="#371134" stroke="#371134" stroke-width="0.6"/><polygon points="163.2,135.4 160.6,137.9 169.4,141.3 172.8,138.2" fill="#471442" stroke="#471442" stroke-width="0.6"/><polygon points="172.8,138.2 169.4,141.3 178.3,144.7 182.3,140.9" fill="#581851" stroke="#581851" stroke-width="0.6"/><polygon points="182.3,140.9 178.3,144.7 187.2,148.0 191.9,143.7" fill="#691c61" stroke="#691c61" stroke-width="0.6"/><polygon points="191.9,143.7 187.2,148.0 196.1,151.4 201.4,146.4" fill="#7b2071" stroke="#7b2071" stroke-width="0.6"/><polygon points="201.4,146.4 196.1,151.4 205.0,154.8 211.0,149.2" fill="#8d2481" stroke="#8d2481" stroke-width="0.6"/><polygon points="125.0,124.4 125.0,124.4 133.3,128.3 133.9,127.8" fill="#0b070d" stroke="#0b070d" stroke-width="0.6"/><polygon points="133.9,127.8 133.3,128.3 141.6,132.1 142.8,131.2" fill="#170a18" stroke="#170a18" stroke-width="0.6"/><polygon points="142.8,131.2 141.6,132.1 150.0,136.0 151.7,134.5" fill="#240e25" stroke="#240e25" stroke-width="0.6"/><polygon points="151.7,134.5 150.0,136.0 158.3,139.9 160.6,137.9" fill="#321233" stroke="#321233" stroke-width="0.6"/><polygon points="160.6,137.9 158.3,139.9 166.6,143.8 169.4,141.3" fill="#411641" stroke="#411641" stroke-width="0.6"/><polygon points="169.4,141.3 166.6,143.8 174.9,147.6 178.3,144.7" fill="#501a50" stroke="#501a50" stroke-width="0.6"/><polygon points="178.3,144.7 174.9,147.6 183.2,151.5 187.2,148.0" fill="#601e5f" stroke="#601e5f" stroke-width="0.6"/><polygon points="187.2,148.0 183.2,151.5 191.6,155.4 196.1,151.4" fill="#70226f" stroke="#70226f" stroke-width="0.6"/><polygon points="196.1,151.4 191.6,155.4 199.9,159.2 205.0,154.8" fill="#81267f" stroke="#81267f" stroke-width="0.6"/><polygon points="125.0,124.4 125.0,124.4 132.8,128.8 133.3,128.3" fill="#0a070d" stroke="#0a070d" stroke-width="0.6"/><polygon points="133.3,128.3 132.8,128.8 140.5,133.1 141.6,132.1" fill="#150b18" stroke="#150b18" stroke-width="0.6"/><polygon points="141.6,132.1 140.5,133.1 148.2,137.5 150.0,136.0" fill="#210e25" stroke="#210e25" stroke-width="0.6"/><polygon points="150.0,136.0 148.2,137.5 156.0,141.9 158.3,139.9" fill="#2e1232" stroke="#2e1232" stroke-width="0.6"/><polygon points="158.3,139.9 156.0,141.9 163.8,146.2 166.6,143.8" fill="#3b1640" stroke="#3b1640" stroke-width="0.6"/><polygon points="166.6,143.8 163.8,146.2 171.5,150.6 174.9,147.6" fill="#491a4f" stroke="#491a4f" stroke-width="0.6"/><polygon points="174.9,147.6 171.5,150.6 179.2,155.0 183.2,151.5" fill="#571e5e" stroke="#571e5e" stroke-width="0.6"/><polygon points="183.2,151.5 179.2,155.0 187.0,159.3 191.6,155.4" fill="#65236d" stroke="#65236d" stroke-width="0.6"/><polygon points="191.6,155.4 187.0,159.3 194.8,163.7 199.9,159.2" fill="#74277d" stroke="#74277d" stroke-width="0.6"/><polygon points="125.0,124.4 125.0,124.4 132.2,129.3 132.8,128.8" fill="#0a070c" stroke="#0a070c" stroke-width="0.6"/><polygon points="132.8,128.8 132.2,129.3 139.4,134.1 140.5,133.1" fill="#130b18" stroke="#130b18" stroke-width="0.6"/><polygon points="140.5,133.1 139.4,134.1 146.5,139.0 148.2,137.5" fill="#1e0e24" stroke="#1e0e24" stroke-width="0.6"/><polygon points="148.2,137.5 146.5,139.0 153.7,143.8 156.0,141.9" fill="#291232" stroke="#291232" stroke-width="0.6"/><polygon points="156.0,141.9 153.7,143.8 160.9,148.7 163.8,146.2" fill="#35163f" stroke="#35163f" stroke-width="0.6"/><polygon points="163.8,146.2 160.9,148.7 168.1,153.6 171.5,150.6" fill="#411b4e" stroke="#411b4e" stroke-width="0.6"/><polygon points="171.5,150.6 168.1,153.6 175.3,158.4 179.2,155.0" fill="#4e1f5d" stroke="#4e1f5d" stroke-width="0.6"/><polygon points="179.2,155.0 175.3,158.4 182.4,163.3 187.0,159.3" fill="#5b246c" stroke="#5b246c" stroke-width="0.6"/><polygon points="187.0,159.3 182.4,163.3 189.6,168.2 194.8,163.7" fill="#68287b" stroke="#68287b" stroke-width="0.6"/><polygon points="125.0,124.4 125.0,124.4 131.6,129.8 132.2,129.3" fill="#09070c" stroke="#09070c" stroke-width="0.6"/><polygon points="132.2,129.3 131.6,129.8 138.2,135.1 139.4,134.1" fill="#120b17" stroke="#120b17" stroke-width="0.6"/><polygon points="139.4,134.1 138.2,135.1 144.8,140.5 146.5,139.0" fill="#1b0f24" stroke="#1b0f24" stroke-width="0.6"/><polygon points="146.5,139.0 144.8,140.5 151.4,145.8 153.7,143.8" fill="#251331" stroke="#251331" stroke-width="0.6"/><polygon points="153.7,143.8 151.4,145.8 158.1,151.2 160.9,148.7" fill="#2f173f" stroke="#2f173f" stroke-width="0.6"/><polygon points="160.9,148.7 158.1,151.2 164.7,156.5 168.1,153.6" fill="#3a1b4d" stroke="#3a1b4d" stroke-width="0.6"/><polygon points="168.1,153.6 164.7,156.5 171.3,161.9 175.3,158.4" fill="#44205b" stroke="#44205b" stroke-width="0.6"/><polygon points="175.3,158.4 171.3,161.9 177.9,167.2 182.4,163.3" fill="#50246a" stroke="#50246a" stroke-width="0.6"/><polygon points="182.4,163.3 177.9,167.2 184.5,172.6 189.6,168.2" fill="#5b2979" stroke="#5b2979" stroke-width="0.6"/><polygon points="125.0,124.4 125.0,124.4 130.8,130.3 131.6,129.8" fill="#09070c" stroke="#09070c" stroke-width="0.6"/><polygon points="131.6,129.8 130.8,130.3 136.6,136.2 138.2,135.1" fill="#100b17" stroke="#100b17" stroke-width="0.6"/><polygon points="138.2,135.1 136.6,136.2 142.4,142.2 144.8,140.5" fill="#180f24" stroke="#180f24" stroke-width="0.6"/><polygon points="144.8,140.5 142.4,142.2 148.1,148.1 151.4,145.8" fill="#201331" stroke="#201331" stroke-width="0.6"/><polygon points="151.4,145.8 148.1,148.1 153.9,154.0 158.1,151.2" fill="#29173f" stroke="#29173f" stroke-width="0.6"/><polygon points="158.1,151.2 153.9,154.0 159.7,159.9 164.7,156.5" fill="#321c4d" stroke="#321c4d" stroke-width="0.6"/><polygon points="164.7,156.5 159.7,159.9 165.5,165.8 171.3,161.9" fill="#3c205b" stroke="#3c205b" stroke-width="0.6"/><polygon points="171.3,161.9 165.5,165.8 171.3,171.8 177.9,167.2" fill="#45256a" stroke="#45256a" stroke-width="0.6"/><polygon points="177.9,167.2 171.3,171.8 177.1,177.7 184.5,172.6" fill="#4f2a79" stroke="#4f2a79" stroke-width="0.6"/><polygon points="125.0,124.4 125.0,124.4 130.0,130.9 130.8,130.3" fill="#08070c" stroke="#08070c" stroke-width="0.6"/><polygon points="130.8,130.3 130.0,130.9 134.9,137.4 136.6,136.2" fill="#0f0b18" stroke="#0f0b18" stroke-width="0.6"/><polygon points="136.6,136.2 134.9,137.4 139.9,143.8 142.4,142.2" fill="#150f24" stroke="#150f24" stroke-width="0.6"/><polygon points="142.4,142.2 139.9,143.8 144.8,150.3 148.1,148.1" fill="#1d1332" stroke="#1d1332" stroke-width="0.6"/><polygon points="148.1,148.1 144.8,150.3 149.8,156.8 153.9,154.0" fill="#24173f" stroke="#24173f" stroke-width="0.6"/><polygon points="153.9,154.0 149.8,156.8 154.8,163.3 159.7,159.9" fill="#2c1c4e" stroke="#2c1c4e" stroke-width="0.6"/><polygon points="159.7,159.9 154.8,163.3 159.7,169.8 165.5,165.8" fill="#34205d" stroke="#34205d" stroke-width="0.6"/><polygon points="165.5,165.8 159.7,169.8 164.7,176.3 171.3,171.8" fill="#3c256c" stroke="#3c256c" stroke-width="0.6"/><polygon points="171.3,171.8 164.7,176.3 169.7,182.8 177.1,177.7" fill="#452a7b" stroke="#452a7b" stroke-width="0.6"/><polygon points="125.0,124.4 125.0,124.4 129.1,131.4 130.0,130.9" fill="#08070d" stroke="#08070d" stroke-width="0.6"/><polygon points="130.0,130.9 129.1,131.4 133.3,138.5 134.9,137.4" fill="#0d0b18" stroke="#0d0b18" stroke-width="0.6"/><polygon points="134.9,137.4 133.3,138.5 137.4,145.5 139.9,143.8" fill="#130f25" stroke="#130f25" stroke-width="0.6"/><polygon points="139.9,143.8 137.4,145.5 141.5,152.6 144.8,150.3" fill="#191332" stroke="#191332" stroke-width="0.6"/><polygon points="144.8,150.3 141.5,152.6 145.7,159.6 149.8,156.8" fill="#1f1740" stroke="#1f1740" stroke-width="0.6"/><polygon points="149.8,156.8 145.7,159.6 149.8,166.7 154.8,163.3" fill="#251c4f" stroke="#251c4f" stroke-width="0.6"/><polygon points="154.8,163.3 149.8,166.7 154.0,173.7 159.7,169.8" fill="#2c205e" stroke="#2c205e" stroke-width="0.6"/><polygon points="159.7,169.8 154.0,173.7 158.1,180.8 164.7,176.3" fill="#33256d" stroke="#33256d" stroke-width="0.6"/><polygon points="164.7,176.3 158.1,180.8 162.2,187.8 169.7,182.8" fill="#3a2a7d" stroke="#3a2a7d" stroke-width="0.6"/><polygon points="125.0,124.4 125.0,124.4 128.3,132.0 129.1,131.4" fill="#08070d" stroke="#08070d" stroke-width="0.6"/><polygon points="129.1,131.4 128.3,132.0 131.6,139.6 133.3,138.5" fill="#0c0b18" stroke="#0c0b18" stroke-width="0.6"/><polygon points="133.3,138.5 131.6,139.6 134.9,147.2 137.4,145.5" fill="#100f25" stroke="#100f25" stroke-width="0.6"/><polygon points="137.4,145.5 134.9,147.2 138.2,154.8 141.5,152.6" fill="#151333" stroke="#151333" stroke-width="0.6"/><polygon points="141.5,152.6 138.2,154.8 141.6,162.5 145.7,159.6" fill="#1a1741" stroke="#1a1741" stroke-width="0.6"/><polygon points="145.7,159.6 141.6,162.5 144.9,170.1 149.8,166.7" fill="#1f1c50" stroke="#1f1c50" stroke-width="0.6"/><polygon points="149.8,166.7 144.9,170.1 148.2,177.7 154.0,173.7" fill="#24205f" stroke="#24205f" stroke-width="0.6"/><polygon points="154.0,173.7 148.2,177.7 151.5,185.3 158.1,180.8" fill="#29256f" stroke="#29256f" stroke-width="0.6"/><polygon points="158.1,180.8 151.5,185.3 154.8,192.9 162.2,187.8" fill="#2f2a7f" stroke="#2f2a7f" stroke-width="0.6"/><polygon points="125.0,124.4 125.0,124.4 127.5,131.9 128.3,132.0" fill="#07070d" stroke="#07070d" stroke-width="0.6"/><polygon points="128.3,132.0 127.5,131.9 130.0,139.4 131.6,139.6" fill="#0b0b18" stroke="#0b0b18" stroke-width="0.6"/><polygon points="131.6,139.6 130.0,139.4 132.5,146.9 134.9,147.2" fill="#0e0f26" stroke="#0e0f26" stroke-width="0.6"/><polygon points="134.9,147.2 132.5,146.9 134.9,154.4 138.2,154.8" fill="#121434" stroke="#121434" stroke-width="0.6"/><polygon points="138.2,154.8 134.9,154.4 137.4,161.9 141.6,162.5" fill="#161842" stroke="#161842" stroke-width="0.6"/><polygon points="141.6,162.5 137.4,161.9 139.9,169.4 144.9,170.1" fill="#1a1d52" stroke="#1a1d52" stroke-width="0.6"/><polygon points="144.9,170.1 139.9,169.4 142.4,176.9 148.2,177.7" fill="#1f2261" stroke="#1f2261" stroke-width="0.6"/><polygon points="148.2,177.7 142.4,176.9 144.9,184.4 151.5,185.3" fill="#232771" stroke="#232771" stroke-width="0.6"/><polygon points="151.5,185.3 144.9,184.4 147.4,191.9 154.8,192.9" fill="#272c81" stroke="#272c81" stroke-width="0.6"/><polygon points="125.0,124.4 125.0,124.4 126.7,131.8 127.5,131.9" fill="#07080d" stroke="#07080d" stroke-width="0.6"/><polygon points="127.5,131.9 126.7,131.8 128.3,139.2 130.0,139.4" fill="#0a0c19" stroke="#0a0c19" stroke-width="0.6"/><polygon points="130.0,139.4 128.3,139.2 130.0,146.6 132.5,146.9" fill="#0d1126" stroke="#0d1126" stroke-width="0.6"/><polygon points="132.5,146.9 130.0,146.6 131.6,154.0 134.9,154.4" fill="#111635" stroke="#111635" stroke-width="0.6"/><polygon points="134.9,154.4 131.6,154.0 133.3,161.4 137.4,161.9" fill="#141b44" stroke="#141b44" stroke-width="0.6"/><polygon points="137.4,161.9 133.3,161.4 134.9,168.8 139.9,169.4" fill="#182153" stroke="#182153" stroke-width="0.6"/><polygon points="139.9,169.4 134.9,168.8 136.6,176.2 142.4,176.9" fill="#1b2663" stroke="#1b2663" stroke-width="0.6"/><polygon points="142.4,176.9 136.6,176.2 138.2,183.6 144.9,184.4" fill="#1f2c73" stroke="#1f2c73" stroke-width="0.6"/><polygon points="144.9,184.4 138.2,183.6 139.9,190.9 147.4,191.9" fill="#233284" stroke="#233284" stroke-width="0.6"/><polygon points="125.0,124.4 125.0,124.4 125.8,131.7 126.7,131.8" fill="#07080d" stroke="#07080d" stroke-width="0.6"/><polygon points="126.7,131.8 125.8,131.7 126.7,139.0 128.3,139.2" fill="#090d19" stroke="#090d19" stroke-width="0.6"/><polygon points="128.3,139.2 126.7,139.0 127.5,146.3 130.0,146.6" fill="#0c1227" stroke="#0c1227" stroke-width="0.6"/><polygon points="130.0,146.6 127.5,146.3 128.3,153.5 131.6,154.0" fill="#0f1836" stroke="#0f1836" stroke-width="0.6"/><polygon points="131.6,154.0 128.3,153.5 129.1,160.8 133.3,161.4" fill="#121e45" stroke="#121e45" stroke-width="0.6"/><polygon points="133.3,161.4 129.1,160.8 130.0,168.1 134.9,168.8" fill="#152455" stroke="#152455" stroke-width="0.6"/><polygon points="134.9,168.8 130.0,168.1 130.8,175.4 136.6,176.2" fill="#182a65" stroke="#182a65" stroke-width="0.6"/><polygon points="136.6,176.2 130.8,175.4 131.6,182.7 138.2,183.6" fill="#1c3176" stroke="#1c3176" stroke-width="0.6"/><polygon points="138.2,183.6 131.6,182.7 132.4,190.0 139.9,190.9" fill="#1f3887" stroke="#1f3887" stroke-width="0.6"/><polygon points="125.0,124.4 125.0,124.4 125.0,131.6 125.8,131.7" fill="#07080d" stroke="#07080d" stroke-width="0.6"/><polygon points="125.8,131.7 125.0,131.6 125.0,138.8 126.7,139.0" fill="#090e1a" stroke="#090e1a" stroke-width="0.6"/><polygon points="126.7,139.0 125.0,138.8 125.0,145.9 127.5,146.3" fill="#0b1428" stroke="#0b1428" stroke-width="0.6"/><polygon points="127.5,146.3 125.0,145.9 125.0,153.1 128.3,153.5" fill="#0e1a37" stroke="#0e1a37" stroke-width="0.6"/><polygon points="128.3,153.5 125.0,153.1 125.0,160.3 129.1,160.8" fill="#102146" stroke="#102146" stroke-width="0.6"/><polygon points="129.1,160.8 125.0,160.3 125.0,167.5 130.0,168.1" fill="#132757" stroke="#132757" stroke-width="0.6"/><polygon points="130.0,168.1 125.0,167.5 125.0,174.6 130.8,175.4" fill="#152f67" stroke="#152f67" stroke-width="0.6"/><polygon points="130.8,175.4 125.0,174.6 125.0,181.8 131.6,182.7" fill="#183678" stroke="#183678" stroke-width="0.6"/><polygon points="131.6,182.7 125.0,181.8 125.0,189.0 132.4,190.0" fill="#1b3d8a" stroke="#1b3d8a" stroke-width="0.6"/><polygon points="125.0,124.4 125.0,124.4 123.5,131.5 125.0,131.6" fill="#07090d" stroke="#07090d" stroke-width="0.6"/><polygon points="125.0,131.6 123.5,131.5 121.9,138.5 125.0,138.8" fill="#090f1b" stroke="#090f1b" stroke-width="0.6"/><polygon points="125.0,138.8 121.9,138.5 120.4,145.6 125.0,145.9" fill="#0b172a" stroke="#0b172a" stroke-width="0.6"/><polygon points="125.0,145.9 120.4,145.6 118.9,152.6 125.0,153.1" fill="#0d1f3a" stroke="#0d1f3a" stroke-width="0.6"/><polygon points="125.0,153.1 118.9,152.6 117.4,159.7 125.0,160.3" fill="#0f274b" stroke="#0f274b" stroke-width="0.6"/><polygon points="125.0,160.3 117.4,159.7 115.8,166.7 125.0,167.5" fill="#11305c" stroke="#11305c" stroke-width="0.6"/><polygon points="125.0,167.5 115.8,166.7 114.3,173.8 125.0,174.6" fill="#14396e" stroke="#14396e" stroke-width="0.6"/><polygon points="125.0,174.6 114.3,173.8 112.8,180.8 125.0,181.8" fill="#164280" stroke="#164280" stroke-width="0.6"/><polygon points="125.0,181.8 112.8,180.8 111.2,187.9 125.0,189.0" fill="#184b93" stroke="#184b93" stroke-width="0.6"/><polygon points="125.0,124.4 125.0,124.4 121.9,131.3 123.5,131.5" fill="#07090e" stroke="#07090e" stroke-width="0.6"/><polygon points="123.5,131.5 121.9,131.3 118.9,138.3 121.9,138.5" fill="#08121d" stroke="#08121d" stroke-width="0.6"/><polygon points="121.9,138.5 118.9,138.3 115.8,145.2 120.4,145.6" fill="#0a1c2e" stroke="#0a1c2e" stroke-width="0.6"/><polygon points="120.4,145.6 115.8,145.2 112.8,152.1 118.9,152.6" fill="#0c2740" stroke="#0c2740" stroke-width="0.6"/><polygon points="118.9,152.6 112.8,152.1 109.7,159.0 117.4,159.7" fill="#0f3153" stroke="#0f3153" stroke-width="0.6"/><polygon points="117.4,159.7 109.7,159.0 106.7,166.0 115.8,166.7" fill="#113d66" stroke="#113d66" stroke-width="0.6"/><polygon points="115.8,166.7 106.7,166.0 103.6,172.9 114.3,173.8" fill="#13487a" stroke="#13487a" stroke-width="0.6"/><polygon points="114.3,173.8 103.6,172.9 100.6,179.8 112.8,180.8" fill="#16548e" stroke="#16548e" stroke-width="0.6"/><polygon points="112.8,180.8 100.6,179.8 97.5,186.8 111.2,187.9" fill="#1860a3" stroke="#1860a3" stroke-width="0.6"/><polygon points="125.0,124.4 125.0,124.4 120.4,131.2 121.9,131.3" fill="#070a0f" stroke="#070a0f" stroke-width="0.6"/><polygon points="121.9,131.3 120.4,131.2 115.8,138.0 118.9,138.3" fill="#08151f" stroke="#08151f" stroke-width="0.6"/><polygon points="118.9,138.3 115.8,138.0 111.2,144.8 115.8,145.2" fill="#0a2132" stroke="#0a2132" stroke-width="0.6"/><polygon points="115.8,145.2 111.2,144.8 106.7,151.6 112.8,152.1" fill="#0c2e46" stroke="#0c2e46" stroke-width="0.6"/><polygon points="112.8,152.1 106.7,151.6 102.1,158.4 109.7,159.0" fill="#0e3c5a" stroke="#0e3c5a" stroke-width="0.6"/><polygon points="109.7,159.0 102.1,158.4 97.5,165.2 106.7,166.0" fill="#114a70" stroke="#114a70" stroke-width="0.6"/><polygon points="106.7,166.0 97.5,165.2 92.9,172.0 103.6,172.9" fill="#135886" stroke="#135886" stroke-width="0.6"/><polygon points="103.6,172.9 92.9,172.0 88.3,178.8 100.6,179.8" fill="#15679c" stroke="#15679c" stroke-width="0.6"/><polygon points="100.6,179.8 88.3,178.8 83.8,185.6 97.5,186.8" fill="#1876b3" stroke="#1876b3" stroke-width="0.6"/><polygon points="125.0,124.4 125.0,124.4 118.9,131.1 120.4,131.2" fill="#070b0f" stroke="#070b0f" stroke-width="0.6"/><polygon points="120.4,131.2 118.9,131.1 112.8,137.8 115.8,138.0" fill="#081821" stroke="#081821" stroke-width="0.6"/><polygon points="115.8,138.0 112.8,137.8 106.7,144.4 111.2,144.8" fill="#0a2736" stroke="#0a2736" stroke-width="0.6"/><polygon points="111.2,144.8 106.7,144.4 100.6,151.1 106.7,151.6" fill="#0c364b" stroke="#0c364b" stroke-width="0.6"/><polygon points="106.7,151.6 100.6,151.1 94.4,157.8 102.1,158.4" fill="#0e4662" stroke="#0e4662" stroke-width="0.6"/><polygon points="102.1,158.4 94.4,157.8 88.3,164.5 97.5,165.2" fill="#105779" stroke="#105779" stroke-width="0.6"/><polygon points="97.5,165.2 88.3,164.5 82.2,171.1 92.9,172.0" fill="#136891" stroke="#136891" stroke-width="0.6"/><polygon points="92.9,172.0 82.2,171.1 76.1,177.8 88.3,178.8" fill="#157aaa" stroke="#157aaa" stroke-width="0.6"/><polygon points="88.3,178.8 76.1,177.8 70.0,184.5 83.8,185.6" fill="#178bc3" stroke="#178bc3" stroke-width="0.6"/><polygon points="125.0,124.4 125.0,124.4 118.5,130.2 118.9,131.1" fill="#070b0f" stroke="#070b0f" stroke-width="0.6"/><polygon points="118.9,131.1 118.5,130.2 111.9,135.9 112.8,137.8" fill="#081922" stroke="#081922" stroke-width="0.6"/><polygon points="112.8,137.8 111.9,135.9 105.4,141.7 106.7,144.4" fill="#0a2936" stroke="#0a2936" stroke-width="0.6"/><polygon points="106.7,144.4 105.4,141.7 98.9,147.5 100.6,151.1" fill="#0c394c" stroke="#0c394c" stroke-width="0.6"/><polygon points="100.6,151.1 98.9,147.5 92.4,153.2 94.4,157.8" fill="#0e4b63" stroke="#0e4b63" stroke-width="0.6"/><polygon points="94.4,157.8 92.4,153.2 85.8,159.0 88.3,164.5" fill="#105d7b" stroke="#105d7b" stroke-width="0.6"/><polygon points="88.3,164.5 85.8,159.0 79.3,164.8 82.2,171.1" fill="#126f93" stroke="#126f93" stroke-width="0.6"/><polygon points="82.2,171.1 79.3,164.8 72.8,170.6 76.1,177.8" fill="#1482ac" stroke="#1482ac" stroke-width="0.6"/><polygon points="76.1,177.8 72.8,170.6 66.2,176.3 70.0,184.5" fill="#1695c5" stroke="#1695c5" stroke-width="0.6"/><polygon points="125.0,124.4 125.0,124.4 118.1,129.3 118.5,130.2" fill="#070b0f" stroke="#070b0f" stroke-width="0.6"/><polygon points="118.5,130.2 118.1,129.3 111.1,134.1 111.9,135.9" fill="#081920" stroke="#081920" stroke-width="0.6"/><polygon points="111.9,135.9 111.1,134.1 104.2,139.0 105.4,141.7" fill="#092834" stroke="#092834" stroke-width="0.6"/><polygon points="105.4,141.7 104.2,139.0 97.2,143.8 98.9,147.5" fill="#0b3848" stroke="#0b3848" stroke-width="0.6"/><polygon points="98.9,147.5 97.2,143.8 90.3,148.7 92.4,153.2" fill="#0d495e" stroke="#0d495e" stroke-width="0.6"/><polygon points="92.4,153.2 90.3,148.7 83.3,153.6 85.8,159.0" fill="#0f5b74" stroke="#0f5b74" stroke-width="0.6"/><polygon points="85.8,159.0 83.3,153.6 76.4,158.4 79.3,164.8" fill="#106d8b" stroke="#106d8b" stroke-width="0.6"/><polygon points="79.3,164.8 76.4,158.4 69.4,163.3 72.8,170.6" fill="#127fa2" stroke="#127fa2" stroke-width="0.6"/><polygon points="72.8,170.6 69.4,163.3 62.5,168.2 66.2,176.3" fill="#1492ba" stroke="#1492ba" stroke-width="0.6"/><polygon points="125.0,124.4 125.0,124.4 117.6,128.4 118.1,129.3" fill="#060b0e" stroke="#060b0e" stroke-width="0.6"/><polygon points="118.1,129.3 117.6,128.4 110.3,132.3 111.1,134.1" fill="#08191f" stroke="#08191f" stroke-width="0.6"/><polygon points="111.1,134.1 110.3,132.3 102.9,136.3 104.2,139.0" fill="#092831" stroke="#092831" stroke-width="0.6"/><polygon points="104.2,139.0 102.9,136.3 95.6,140.2 97.2,143.8" fill="#0a3744" stroke="#0a3744" stroke-width="0.6"/><polygon points="97.2,143.8 95.6,140.2 88.2,144.2 90.3,148.7" fill="#0c4858" stroke="#0c4858" stroke-width="0.6"/><polygon points="90.3,148.7 88.2,144.2 80.8,148.1 83.3,153.6" fill="#0d596d" stroke="#0d596d" stroke-width="0.6"/><polygon points="83.3,153.6 80.8,148.1 73.5,152.1 76.4,158.4" fill="#0f6b82" stroke="#0f6b82" stroke-width="0.6"/><polygon points="76.4,158.4 73.5,152.1 66.1,156.0 69.4,163.3" fill="#117d98" stroke="#117d98" stroke-width="0.6"/><polygon points="69.4,163.3 66.1,156.0 58.8,160.0 62.5,168.2" fill="#128faf" stroke="#128faf" stroke-width="0.6"/><polygon points="125.0,124.4 125.0,124.4 117.2,127.4 117.6,128.4" fill="#060b0e" stroke="#060b0e" stroke-width="0.6"/><polygon points="117.6,128.4 117.2,127.4 109.4,130.5 110.3,132.3" fill="#07181d" stroke="#07181d" stroke-width="0.6"/><polygon points="110.3,132.3 109.4,130.5 101.7,133.5 102.9,136.3" fill="#09272e" stroke="#09272e" stroke-width="0.6"/><polygon points="102.9,136.3 101.7,133.5 93.9,136.6 95.6,140.2" fill="#0a3640" stroke="#0a3640" stroke-width="0.6"/><polygon points="95.6,140.2 93.9,136.6 86.1,139.6 88.2,144.2" fill="#0b4753" stroke="#0b4753" stroke-width="0.6"/><polygon points="88.2,144.2 86.1,139.6 78.3,142.7 80.8,148.1" fill="#0c5766" stroke="#0c5766" stroke-width="0.6"/><polygon points="80.8,148.1 78.3,142.7 70.6,145.7 73.5,152.1" fill="#0e697a" stroke="#0e697a" stroke-width="0.6"/><polygon points="73.5,152.1 70.6,145.7 62.8,148.8 66.1,156.0" fill="#0f7a8f" stroke="#0f7a8f" stroke-width="0.6"/><polygon points="66.1,156.0 62.8,148.8 55.0,151.8 58.8,160.0" fill="#108ca3" stroke="#108ca3" stroke-width="0.6"/><polygon points="125.0,124.4 125.0,124.4 116.6,125.6 117.2,127.4" fill="#060b0d" stroke="#060b0d" stroke-width="0.6"/><polygon points="117.2,127.4 116.6,125.6 108.1,126.8 109.4,130.5" fill="#07181b" stroke="#07181b" stroke-width="0.6"/><polygon points="109.4,130.5 108.1,126.8 99.7,128.0 101.7,133.5" fill="#08262a" stroke="#08262a" stroke-width="0.6"/><polygon points="101.7,133.5 99.7,128.0 91.3,129.2 93.9,136.6" fill="#093639" stroke="#093639" stroke-width="0.6"/><polygon points="93.9,136.6 91.3,129.2 82.8,130.4 86.1,139.6" fill="#0b454a" stroke="#0b454a" stroke-width="0.6"/><polygon points="86.1,139.6 82.8,130.4 74.4,131.6 78.3,142.7" fill="#0c565b" stroke="#0c565b" stroke-width="0.6"/><polygon points="78.3,142.7 74.4,131.6 66.0,132.8 70.6,145.7" fill="#0d676d" stroke="#0d676d" stroke-width="0.6"/><polygon points="70.6,145.7 66.0,132.8 57.6,134.0 62.8,148.8" fill="#0e787f" stroke="#0e787f" stroke-width="0.6"/><polygon points="62.8,148.8 57.6,134.0 49.1,135.2 55.0,151.8" fill="#0f8a91" stroke="#0f8a91" stroke-width="0.6"/><polygon points="125.0,124.4 125.0,124.4 115.9,123.8 116.6,125.6" fill="#060b0c" stroke="#060b0c" stroke-width="0.6"/><polygon points="116.6,125.6 115.9,123.8 106.8,123.1 108.1,126.8" fill="#071817" stroke="#071817" stroke-width="0.6"/><polygon points="108.1,126.8 106.8,123.1 97.8,122.5 99.7,128.0" fill="#082623" stroke="#082623" stroke-width="0.6"/><polygon points="99.7,128.0 97.8,122.5 88.7,121.9 91.3,129.2" fill="#093530" stroke="#093530" stroke-width="0.6"/><polygon points="91.3,129.2 88.7,121.9 79.6,121.2 82.8,130.4" fill="#0b443e" stroke="#0b443e" stroke-width="0.6"/><polygon points="82.8,130.4 79.6,121.2 70.5,120.6 74.4,131.6" fill="#0c544b" stroke="#0c544b" stroke-width="0.6"/><polygon points="74.4,131.6 70.5,120.6 61.4,120.0 66.0,132.8" fill="#0d655a" stroke="#0d655a" stroke-width="0.6"/><polygon points="66.0,132.8 61.4,120.0 52.3,119.3 57.6,134.0" fill="#0e7668" stroke="#0e7668" stroke-width="0.6"/><polygon points="57.6,134.0 52.3,119.3 43.2,118.7 49.1,135.2" fill="#0f8777" stroke="#0f8777" stroke-width="0.6"/><polygon points="125.0,124.4 125.0,124.4 115.3,121.9 115.9,123.8" fill="#060b0b" stroke="#060b0b" stroke-width="0.6"/><polygon points="115.9,123.8 115.3,121.9 105.5,119.5 106.8,123.1" fill="#071714" stroke="#071714" stroke-width="0.6"/><polygon points="106.8,123.1 105.5,119.5 95.8,117.0 97.8,122.5" fill="#08251d" stroke="#08251d" stroke-width="0.6"/><polygon points="97.8,122.5 95.8,117.0 86.1,114.5 88.7,121.9" fill="#093427" stroke="#093427" stroke-width="0.6"/><polygon points="88.7,121.9 86.1,114.5 76.3,112.0 79.6,121.2" fill="#0b4331" stroke="#0b4331" stroke-width="0.6"/><polygon points="79.6,121.2 76.3,112.0 66.6,109.6 70.5,120.6" fill="#0c533c" stroke="#0c533c" stroke-width="0.6"/><polygon points="70.5,120.6 66.6,109.6 56.8,107.1 61.4,120.0" fill="#0d6347" stroke="#0d6347" stroke-width="0.6"/><polygon points="61.4,120.0 56.8,107.1 47.1,104.6 52.3,119.3" fill="#0e7452" stroke="#0e7452" stroke-width="0.6"/><polygon points="52.3,119.3 47.1,104.6 37.4,102.2 43.2,118.7" fill="#0f855d" stroke="#0f855d" stroke-width="0.6"/><polygon points="125.0,124.4 125.0,124.4 114.6,120.1 115.3,121.9" fill="#060b0a" stroke="#060b0a" stroke-width="0.6"/><polygon points="115.3,121.9 114.6,120.1 104.2,115.8 105.5,119.5" fill="#071710" stroke="#071710" stroke-width="0.6"/><polygon points="105.5,119.5 104.2,115.8 93.8,111.5 95.8,117.0" fill="#082517" stroke="#082517" stroke-width="0.6"/><polygon points="95.8,117.0 93.8,111.5 83.4,107.2 86.1,114.5" fill="#09331e" stroke="#09331e" stroke-width="0.6"/><polygon points="86.1,114.5 83.4,107.2 73.1,102.8 76.3,112.0" fill="#0b4225" stroke="#0b4225" stroke-width="0.6"/><polygon points="76.3,112.0 73.1,102.8 62.7,98.5 66.6,109.6" fill="#0c522c" stroke="#0c522c" stroke-width="0.6"/><polygon points="66.6,109.6 62.7,98.5 52.3,94.2 56.8,107.1" fill="#0d6234" stroke="#0d6234" stroke-width="0.6"/><polygon points="56.8,107.1 52.3,94.2 41.9,89.9 47.1,104.6" fill="#0e723c" stroke="#0e723c" stroke-width="0.6"/><polygon points="47.1,104.6 41.9,89.9 31.5,85.6 37.4,102.2" fill="#0f8344" stroke="#0f8344" stroke-width="0.6"/><polygon points="125.0,124.4 125.0,124.4 115.5,119.5 114.6,120.1" fill="#060b0a" stroke="#060b0a" stroke-width="0.6"/><polygon points="114.6,120.1 115.5,119.5 106.0,114.7 104.2,115.8" fill="#08170e" stroke="#08170e" stroke-width="0.6"/><polygon points="104.2,115.8 106.0,114.7 96.5,109.8 93.8,111.5" fill="#092413" stroke="#092413" stroke-width="0.6"/><polygon points="93.8,111.5 96.5,109.8 87.0,104.9 83.4,107.2" fill="#0a3318" stroke="#0a3318" stroke-width="0.6"/><polygon points="83.4,107.2 87.0,104.9 77.5,100.1 73.1,102.8" fill="#0c421e" stroke="#0c421e" stroke-width="0.6"/><polygon points="73.1,102.8 77.5,100.1 68.0,95.2 62.7,98.5" fill="#0e5124" stroke="#0e5124" stroke-width="0.6"/><polygon points="62.7,98.5 68.0,95.2 58.4,90.3 52.3,94.2" fill="#0f612a" stroke="#0f612a" stroke-width="0.6"/><polygon points="52.3,94.2 58.4,90.3 48.9,85.4 41.9,89.9" fill="#117230" stroke="#117230" stroke-width="0.6"/><polygon points="41.9,89.9 48.9,85.4 39.4,80.6 31.5,85.6" fill="#128236" stroke="#128236" stroke-width="0.6"/><polygon points="125.0,124.4 125.0,124.4 116.4,119.0 115.5,119.5" fill="#070b0a" stroke="#070b0a" stroke-width="0.6"/><polygon points="115.5,119.5 116.4,119.0 107.7,113.5 106.0,114.7" fill="#09170e" stroke="#09170e" stroke-width="0.6"/><polygon points="106.0,114.7 107.7,113.5 99.1,108.1 96.5,109.8" fill="#0b2513" stroke="#0b2513" stroke-width="0.6"/><polygon points="96.5,109.8 99.1,108.1 90.5,102.7 87.0,104.9" fill="#0d3318" stroke="#0d3318" stroke-width="0.6"/><polygon points="87.0,104.9 90.5,102.7 81.9,97.3 77.5,100.1" fill="#0f421d" stroke="#0f421d" stroke-width="0.6"/><polygon points="77.5,100.1 81.9,97.3 73.2,91.8 68.0,95.2" fill="#115222" stroke="#115222" stroke-width="0.6"/><polygon points="68.0,95.2 73.2,91.8 64.6,86.4 58.4,90.3" fill="#146228" stroke="#146228" stroke-width="0.6"/><polygon points="58.4,90.3 64.6,86.4 56.0,81.0 48.9,85.4" fill="#16732e" stroke="#16732e" stroke-width="0.6"/><polygon points="48.9,85.4 56.0,81.0 47.3,75.5 39.4,80.6" fill="#188433" stroke="#188433" stroke-width="0.6"/><polygon points="125.0,124.4 125.0,124.4 117.3,118.4 116.4,119.0" fill="#070b0a" stroke="#070b0a" stroke-width="0.6"/><polygon points="116.4,119.0 117.3,118.4 109.5,112.4 107.7,113.5" fill="#09170e" stroke="#09170e" stroke-width="0.6"/><polygon points="107.7,113.5 109.5,112.4 101.8,106.4 99.1,108.1" fill="#0c2512" stroke="#0c2512" stroke-width="0.6"/><polygon points="99.1,108.1 101.8,106.4 94.0,100.5 90.5,102.7" fill="#0f3417" stroke="#0f3417" stroke-width="0.6"/><polygon points="90.5,102.7 94.0,100.5 86.3,94.5 81.9,97.3" fill="#12431c" stroke="#12431c" stroke-width="0.6"/><polygon points="81.9,97.3 86.3,94.5 78.5,88.5 73.2,91.8" fill="#155321" stroke="#155321" stroke-width="0.6"/><polygon points="73.2,91.8 78.5,88.5 70.8,82.5 64.6,86.4" fill="#186326" stroke="#186326" stroke-width="0.6"/><polygon points="64.6,86.4 70.8,82.5 63.0,76.5 56.0,81.0" fill="#1b742b" stroke="#1b742b" stroke-width="0.6"/><polygon points="56.0,81.0 63.0,76.5 55.3,70.5 47.3,75.5" fill="#1f8531" stroke="#1f8531" stroke-width="0.6"/><polygon points="125.0,124.4 125.0,124.4 118.1,117.9 117.3,118.4" fill="#070b09" stroke="#070b09" stroke-width="0.6"/><polygon points="117.3,118.4 118.1,117.9 111.3,111.3 109.5,112.4" fill="#0a170d" stroke="#0a170d" stroke-width="0.6"/><polygon points="109.5,112.4 111.3,111.3 104.4,104.8 101.8,106.4" fill="#0e2511" stroke="#0e2511" stroke-width="0.6"/><polygon points="101.8,106.4 104.4,104.8 97.5,98.2 94.0,100.5" fill="#113416" stroke="#113416" stroke-width="0.6"/><polygon points="94.0,100.5 97.5,98.2 90.7,91.7 86.3,94.5" fill="#15441b" stroke="#15441b" stroke-width="0.6"/><polygon points="86.3,94.5 90.7,91.7 83.8,85.1 78.5,88.5" fill="#19541f" stroke="#19541f" stroke-width="0.6"/><polygon points="78.5,88.5 83.8,85.1 76.9,78.6 70.8,82.5" fill="#1d6424" stroke="#1d6424" stroke-width="0.6"/><polygon points="70.8,82.5 76.9,78.6 70.1,72.0 63.0,76.5" fill="#217529" stroke="#217529" stroke-width="0.6"/><polygon points="63.0,76.5 70.1,72.0 63.2,65.5 55.3,70.5" fill="#25872f" stroke="#25872f" stroke-width="0.6"/><polygon points="125.0,124.4 125.0,124.4 118.7,117.4 118.1,117.9" fill="#080b09" stroke="#080b09" stroke-width="0.6"/><polygon points="118.1,117.9 118.7,117.4 112.3,110.5 111.3,111.3" fill="#0b180d" stroke="#0b180d" stroke-width="0.6"/><polygon points="111.3,111.3 112.3,110.5 106.0,103.5 104.4,104.8" fill="#102611" stroke="#102611" stroke-width="0.6"/><polygon points="104.4,104.8 106.0,103.5 99.7,96.6 97.5,98.2" fill="#143515" stroke="#143515" stroke-width="0.6"/><polygon points="97.5,98.2 99.7,96.6 93.3,89.6 90.7,91.7" fill="#19451a" stroke="#19451a" stroke-width="0.6"/><polygon points="90.7,91.7 93.3,89.6 87.0,82.7 83.8,85.1" fill="#1e551e" stroke="#1e551e" stroke-width="0.6"/><polygon points="83.8,85.1 87.0,82.7 80.7,75.7 76.9,78.6" fill="#236623" stroke="#236623" stroke-width="0.6"/><polygon points="76.9,78.6 80.7,75.7 74.4,68.7 70.1,72.0" fill="#297828" stroke="#297828" stroke-width="0.6"/><polygon points="70.1,72.0 74.4,68.7 68.0,61.8 63.2,65.5" fill="#2e892d" stroke="#2e892d" stroke-width="0.6"/><polygon points="125.0,124.4 125.0,124.4 119.2,117.0 118.7,117.4" fill="#080b09" stroke="#080b09" stroke-width="0.6"/><polygon points="118.7,117.4 119.2,117.0 113.4,109.7 112.3,110.5" fill="#0d180d" stroke="#0d180d" stroke-width="0.6"/><polygon points="112.3,110.5 113.4,109.7 107.6,102.3 106.0,103.5" fill="#132710" stroke="#132710" stroke-width="0.6"/><polygon points="106.0,103.5 107.6,102.3 101.8,94.9 99.7,96.6" fill="#193714" stroke="#193714" stroke-width="0.6"/><polygon points="99.7,96.6 101.8,94.9 96.0,87.5 93.3,89.6" fill="#1f4719" stroke="#1f4719" stroke-width="0.6"/><polygon points="93.3,89.6 96.0,87.5 90.2,80.2 87.0,82.7" fill="#26581d" stroke="#26581d" stroke-width="0.6"/><polygon points="87.0,82.7 90.2,80.2 84.4,72.8 80.7,75.7" fill="#2d6921" stroke="#2d6921" stroke-width="0.6"/><polygon points="80.7,75.7 84.4,72.8 78.6,65.4 74.4,68.7" fill="#347b26" stroke="#347b26" stroke-width="0.6"/><polygon points="74.4,68.7 78.6,65.4 72.8,58.0 68.0,61.8" fill="#3b8d2b" stroke="#3b8d2b" stroke-width="0.6"/><polygon points="125.0,124.4 125.0,124.4 119.7,116.6 119.2,117.0" fill="#090b09" stroke="#090b09" stroke-width="0.6"/><polygon points="119.2,117.0 119.7,116.6 114.5,108.8 113.4,109.7" fill="#0f190c" stroke="#0f190c" stroke-width="0.6"/><polygon points="113.4,109.7 114.5,108.8 109.2,101.0 107.6,102.3" fill="#162810" stroke="#162810" stroke-width="0.6"/><polygon points="107.6,102.3 109.2,101.0 104.0,93.3 101.8,94.9" fill="#1e3814" stroke="#1e3814" stroke-width="0.6"/><polygon points="101.8,94.9 104.0,93.3 98.7,85.5 96.0,87.5" fill="#254918" stroke="#254918" stroke-width="0.6"/><polygon points="96.0,87.5 98.7,85.5 93.5,77.7 90.2,80.2" fill="#2e5a1c" stroke="#2e5a1c" stroke-width="0.6"/><polygon points="90.2,80.2 93.5,77.7 88.2,69.9 84.4,72.8" fill="#366c20" stroke="#366c20" stroke-width="0.6"/><polygon points="84.4,72.8 88.2,69.9 82.9,62.1 78.6,65.4" fill="#3f7e24" stroke="#3f7e24" stroke-width="0.6"/><polygon points="78.6,65.4 82.9,62.1 77.7,54.3 72.8,58.0" fill="#479129" stroke="#479129" stroke-width="0.6"/><polygon points="125.0,124.4 125.0,124.4 120.3,116.2 119.7,116.6" fill="#090b09" stroke="#090b09" stroke-width="0.6"/><polygon points="119.7,116.6 120.3,116.2 115.6,108.0 114.5,108.8" fill="#11190c" stroke="#11190c" stroke-width="0.6"/><polygon points="114.5,108.8 115.6,108.0 110.8,99.8 109.2,101.0" fill="#192910" stroke="#192910" stroke-width="0.6"/><polygon points="109.2,101.0 110.8,99.8 106.1,91.6 104.0,93.3" fill="#223913" stroke="#223913" stroke-width="0.6"/><polygon points="104.0,93.3 106.1,91.6 101.4,83.4 98.7,85.5" fill="#2c4a17" stroke="#2c4a17" stroke-width="0.6"/><polygon points="98.7,85.5 101.4,83.4 96.7,75.2 93.5,77.7" fill="#355c1b" stroke="#355c1b" stroke-width="0.6"/><polygon points="93.5,77.7 96.7,75.2 91.9,67.0 88.2,69.9" fill="#3f6f1f" stroke="#3f6f1f" stroke-width="0.6"/><polygon points="88.2,69.9 91.9,67.0 87.2,58.8 82.9,62.1" fill="#4a8123" stroke="#4a8123" stroke-width="0.6"/><polygon points="82.9,62.1 87.2,58.8 82.5,50.6 77.7,54.3" fill="#549427" stroke="#549427" stroke-width="0.6"/><polygon points="125.0,124.4 125.0,124.4 120.8,115.7 120.3,116.2" fill="#0a0c09" stroke="#0a0c09" stroke-width="0.6"/><polygon points="120.3,116.2 120.8,115.7 116.6,106.9 115.6,108.0" fill="#131a0c" stroke="#131a0c" stroke-width="0.6"/><polygon points="115.6,108.0 116.6,106.9 112.5,98.2 110.8,99.8" fill="#1d2a0f" stroke="#1d2a0f" stroke-width="0.6"/><polygon points="110.8,99.8 112.5,98.2 108.3,89.5 106.1,91.6" fill="#273b12" stroke="#273b12" stroke-width="0.6"/><polygon points="106.1,91.6 108.3,89.5 104.1,80.7 101.4,83.4" fill="#334d16" stroke="#334d16" stroke-width="0.6"/><polygon points="101.4,83.4 104.1,80.7 99.9,72.0 96.7,75.2" fill="#3e5f19" stroke="#3e5f19" stroke-width="0.6"/><polygon points="96.7,75.2 99.9,72.0 95.7,63.2 91.9,67.0" fill="#4a721d" stroke="#4a721d" stroke-width="0.6"/><polygon points="91.9,67.0 95.7,63.2 91.5,54.5 87.2,58.8" fill="#568520" stroke="#568520" stroke-width="0.6"/><polygon points="87.2,58.8 91.5,54.5 87.3,45.8 82.5,50.6" fill="#639924" stroke="#639924" stroke-width="0.6"/><polygon points="125.0,124.4 125.0,124.4 121.4,115.1 120.8,115.7" fill="#0a0c09" stroke="#0a0c09" stroke-width="0.6"/><polygon points="120.8,115.7 121.4,115.1 117.7,105.9 116.6,106.9" fill="#151b0b" stroke="#151b0b" stroke-width="0.6"/><polygon points="116.6,106.9 117.7,105.9 114.1,96.6 112.5,98.2" fill="#212b0e" stroke="#212b0e" stroke-width="0.6"/><polygon points="112.5,98.2 114.1,96.6 110.4,87.3 108.3,89.5" fill="#2d3d11" stroke="#2d3d11" stroke-width="0.6"/><polygon points="108.3,89.5 110.4,87.3 106.8,78.0 104.1,80.7" fill="#3b4f14" stroke="#3b4f14" stroke-width="0.6"/><polygon points="104.1,80.7 106.8,78.0 103.1,68.8 99.9,72.0" fill="#486317" stroke="#486317" stroke-width="0.6"/><polygon points="99.9,72.0 103.1,68.8 99.5,59.5 95.7,63.2" fill="#56761a" stroke="#56761a" stroke-width="0.6"/><polygon points="95.7,63.2 99.5,59.5 95.8,50.2 91.5,54.5" fill="#658a1d" stroke="#658a1d" stroke-width="0.6"/><polygon points="91.5,54.5 95.8,50.2 92.2,41.0 87.3,45.8" fill="#749f20" stroke="#749f20" stroke-width="0.6"/><polygon points="125.0,124.4 125.0,124.4 121.9,114.6 121.4,115.1" fill="#0b0c09" stroke="#0b0c09" stroke-width="0.6"/><polygon points="121.4,115.1 121.9,114.6 118.8,104.8 117.7,105.9" fill="#171c0b" stroke="#171c0b" stroke-width="0.6"/><polygon points="117.7,105.9 118.8,104.8 115.7,95.0 114.1,96.6" fill="#252d0d" stroke="#252d0d" stroke-width="0.6"/><polygon points="114.1,96.6 115.7,95.0 112.6,85.2 110.4,87.3" fill="#343f0f" stroke="#343f0f" stroke-width="0.6"/><polygon points="110.4,87.3 112.6,85.2 109.5,75.4 106.8,78.0" fill="#435212" stroke="#435212" stroke-width="0.6"/><polygon points="106.8,78.0 109.5,75.4 106.4,65.6 103.1,68.8" fill="#536614" stroke="#536614" stroke-width="0.6"/><polygon points="103.1,68.8 106.4,65.6 103.3,55.7 99.5,59.5" fill="#637a17" stroke="#637a17" stroke-width="0.6"/><polygon points="99.5,59.5 103.3,55.7 100.2,45.9 95.8,50.2" fill="#738f1a" stroke="#738f1a" stroke-width="0.6"/><polygon points="95.8,50.2 100.2,45.9 97.1,36.1 92.2,41.0" fill="#84a41d" stroke="#84a41d" stroke-width="0.6"/><polygon points="125.0,124.4 125.0,124.4 122.4,114.1 121.9,114.6" fill="#0c0c09" stroke="#0c0c09" stroke-width="0.6"/><polygon points="121.9,114.6 122.4,114.1 119.9,103.7 118.8,104.8" fill="#191c0a" stroke="#191c0a" stroke-width="0.6"/><polygon points="118.8,104.8 119.9,103.7 117.3,93.4 115.7,95.0" fill="#292e0c" stroke="#292e0c" stroke-width="0.6"/><polygon points="115.7,95.0 117.3,93.4 114.7,83.0 112.6,85.2" fill="#3a410e" stroke="#3a410e" stroke-width="0.6"/><polygon points="112.6,85.2 114.7,83.0 112.2,72.7 109.5,75.4" fill="#4b5510" stroke="#4b5510" stroke-width="0.6"/><polygon points="109.5,75.4 112.2,72.7 109.6,62.3 106.4,65.6" fill="#5d6912" stroke="#5d6912" stroke-width="0.6"/><polygon points="106.4,65.6 109.6,62.3 107.0,52.0 103.3,55.7" fill="#6f7e14" stroke="#6f7e14" stroke-width="0.6"/><polygon points="103.3,55.7 107.0,52.0 104.5,41.6 100.2,45.9" fill="#829417" stroke="#829417" stroke-width="0.6"/><polygon points="100.2,45.9 104.5,41.6 101.9,31.3 97.1,36.1" fill="#95aa19" stroke="#95aa19" stroke-width="0.6"/><polygon points="125.0,124.4 125.0,124.4 122.9,113.5 122.4,114.1" fill="#0c0c09" stroke="#0c0c09" stroke-width="0.6"/><polygon points="122.4,114.1 122.9,113.5 120.7,102.5 119.9,103.7" fill="#1b1d0a" stroke="#1b1d0a" stroke-width="0.6"/><polygon points="119.9,103.7 120.7,102.5 118.6,91.6 117.3,93.4" fill="#2d2f0b" stroke="#2d2f0b" stroke-width="0.6"/><polygon points="117.3,93.4 118.6,91.6 116.5,80.6 114.7,83.0" fill="#3f430d" stroke="#3f430d" stroke-width="0.6"/><polygon points="114.7,83.0 116.5,80.6 114.3,69.7 112.2,72.7" fill="#52570e" stroke="#52570e" stroke-width="0.6"/><polygon points="112.2,72.7 114.3,69.7 112.2,58.7 109.6,62.3" fill="#656c10" stroke="#656c10" stroke-width="0.6"/><polygon points="109.6,62.3 112.2,58.7 110.1,47.8 107.0,52.0" fill="#7a8212" stroke="#7a8212" stroke-width="0.6"/><polygon points="107.0,52.0 110.1,47.8 108.0,36.8 104.5,41.6" fill="#8e9813" stroke="#8e9813" stroke-width="0.6"/><polygon points="104.5,41.6 108.0,36.8 105.8,25.8 101.9,31.3" fill="#a3af15" stroke="#a3af15" stroke-width="0.6"/><polygon points="125.0,124.4 125.0,124.4 123.3,112.8 122.9,113.5" fill="#0c0d08" stroke="#0c0d08" stroke-width="0.6"/><polygon points="122.9,113.5 123.3,112.8 121.6,101.3 120.7,102.5" fill="#1d1d09" stroke="#1d1d09" stroke-width="0.6"/><polygon points="120.7,102.5 121.6,101.3 119.9,89.7 118.6,91.6" fill="#2f300a" stroke="#2f300a" stroke-width="0.6"/><polygon points="118.6,91.6 119.9,89.7 118.2,78.2 116.5,80.6" fill="#43440b" stroke="#43440b" stroke-width="0.6"/><polygon points="116.5,80.6 118.2,78.2 116.5,66.6 114.3,69.7" fill="#57590d" stroke="#57590d" stroke-width="0.6"/><polygon points="114.3,69.7 116.5,66.6 114.8,55.1 112.2,58.7" fill="#6c6e0e" stroke="#6c6e0e" stroke-width="0.6"/><polygon points="112.2,58.7 114.8,55.1 113.1,43.5 110.1,47.8" fill="#82850f" stroke="#82850f" stroke-width="0.6"/><polygon points="110.1,47.8 113.1,43.5 111.4,32.0 108.0,36.8" fill="#989b10" stroke="#989b10" stroke-width="0.6"/><polygon points="108.0,36.8 111.4,32.0 109.8,20.4 105.8,25.8" fill="#afb211" stroke="#afb211" stroke-width="0.6"/><polygon points="125.0,124.4 125.0,124.4 123.7,112.2 123.3,112.8" fill="#0d0d08" stroke="#0d0d08" stroke-width="0.6"/><polygon points="123.3,112.8 123.7,112.2 122.5,100.1 121.6,101.3" fill="#1e1e09" stroke="#1e1e09" stroke-width="0.6"/><polygon points="121.6,101.3 122.5,100.1 121.2,87.9 119.9,89.7" fill="#323109" stroke="#323109" stroke-width="0.6"/><polygon points="119.9,89.7 121.2,87.9 120.0,75.8 118.2,78.2" fill="#47450a" stroke="#47450a" stroke-width="0.6"/><polygon points="118.2,78.2 120.0,75.8 118.7,63.6 116.5,66.6" fill="#5d5b0b" stroke="#5d5b0b" stroke-width="0.6"/><polygon points="116.5,66.6 118.7,63.6 117.5,51.4 114.8,55.1" fill="#73710b" stroke="#73710b" stroke-width="0.6"/><polygon points="114.8,55.1 117.5,51.4 116.2,39.3 113.1,43.5" fill="#8a870c" stroke="#8a870c" stroke-width="0.6"/><polygon points="113.1,43.5 116.2,39.3 114.9,27.1 111.4,32.0" fill="#a29e0d" stroke="#a29e0d" stroke-width="0.6"/><polygon points="111.4,32.0 114.9,27.1 113.7,15.0 109.8,20.4" fill="#bab60e" stroke="#bab60e" stroke-width="0.6"/><polygon points="125.0,124.4 125.0,124.4 124.2,111.6 123.7,112.2" fill="#0d0d08" stroke="#0d0d08" stroke-width="0.6"/><polygon points="123.7,112.2 124.2,111.6 123.4,98.9 122.5,100.1" fill="#201e08" stroke="#201e08" stroke-width="0.6"/><polygon points="122.5,100.1 123.4,98.9 122.5,86.1 121.2,87.9" fill="#353208" stroke="#353208" stroke-width="0.6"/><polygon points="121.2,87.9 122.5,86.1 121.7,73.3 120.0,75.8" fill="#4b4709" stroke="#4b4709" stroke-width="0.6"/><polygon points="120.0,75.8 121.7,73.3 120.9,60.6 118.7,63.6" fill="#625d09" stroke="#625d09" stroke-width="0.6"/><polygon points="118.7,63.6 120.9,60.6 120.1,47.8 117.5,51.4" fill="#7a7309" stroke="#7a7309" stroke-width="0.6"/><polygon points="117.5,51.4 120.1,47.8 119.2,35.0 116.2,39.3" fill="#928a09" stroke="#928a09" stroke-width="0.6"/><polygon points="116.2,39.3 119.2,35.0 118.4,22.3 114.9,27.1" fill="#aba20a" stroke="#aba20a" stroke-width="0.6"/><polygon points="114.9,27.1 118.4,22.3 117.6,9.5 113.7,15.0" fill="#c5ba0a" stroke="#c5ba0a" stroke-width="0.6"/><line x1="31" y1="124.4" x2="231" y2="124.4" stroke="#9a9a9a" stroke-width="1.2" opacity="0.8"/><line x1="125" y1="12" x2="125" y2="189" stroke="#9a9a9a" stroke-width="1.2" opacity="0.8"/><circle cx="125" cy="124.4" r="54.5" fill="none" stroke="#ee1111" stroke-width="2"/><circle cx="125" cy="124.4" r="30.4" fill="none" stroke="#ee1111" stroke-width="2"/><circle cx="125" cy="124.4" r="11" fill="none" stroke="#ee1111" stroke-width="2"/><line x1="98.75" y1="151.25" x2="152.7" y2="97.9" stroke="#ee1111" stroke-width="3.2"/><polygon points="157.7,92.9 146.7,96.4 154.2,103.9" fill="#ee1111"/><polygon points="93.75,156.25 104.75,152.75 97.25,145.25" fill="#ee1111"/><rect x="0.5" y="0.5" width="249" height="249" fill="none" stroke="#a8a8a8"/></svg>
<svg class="a" style="left:1094px;top:269px" width="250" height="250" viewBox="0 0 250 250"><rect x="0" y="0" width="250" height="250" fill="#fff"/><circle cx="125" cy="124.4" r="26" fill="none" stroke="#d4d4d4" stroke-width="1.4"/><circle cx="125" cy="124.4" r="52" fill="none" stroke="#d4d4d4" stroke-width="1.4"/><circle cx="125" cy="124.4" r="78" fill="none" stroke="#d4d4d4" stroke-width="1.4"/><circle cx="125" cy="124.4" r="104" fill="none" stroke="#d4d4d4" stroke-width="1.4"/><circle cx="125" cy="124.4" r="130" fill="none" stroke="#d4d4d4" stroke-width="1.4"/><circle cx="125" cy="124.4" r="156" fill="none" stroke="#d4d4d4" stroke-width="1.4"/><circle cx="125" cy="124.4" r="182" fill="none" stroke="#d4d4d4" stroke-width="1.4"/><line x1="0" y1="124.4" x2="125" y2="124.4" stroke="#2aa0b0" stroke-width="1.4"/><line x1="125" y1="124.4" x2="250" y2="124.4" stroke="#e040c0" stroke-width="1.4"/><line x1="125" y1="125" x2="125" y2="250" stroke="#2a68b0" stroke-width="1.4"/><defs><clipPath id="gp"><polygon points="117.6,9.5 134,20.8 160.7,38.7 220,59.5 224.7,89.3 230.7,125 229,132.4 205,154.8 184.5,172.6 154.8,192.9 125,189 70,184.5 55,151.8 31.5,85.6 63.2,65.5 82.5,50.6 101.9,31.3"/></clipPath></defs><polygon points="117.6,9.5 134,20.8 160.7,38.7 220,59.5 224.7,89.3 230.7,125 229,132.4 205,154.8 184.5,172.6 154.8,192.9 125,189 70,184.5 55,151.8 31.5,85.6 63.2,65.5 82.5,50.6 101.9,31.3" fill="#c6c6c6"/><g clip-path="url(#gp)"><circle cx="125" cy="124.4" r="85" fill="#d2b0b0"/><circle cx="125" cy="124.4" r="78" fill="#d8a0a0"/><circle cx="125" cy="124.4" r="70" fill="#dc9090"/><circle cx="125" cy="124.4" r="62" fill="#e07e7e"/><circle cx="125" cy="124.4" r="54" fill="#e26c6c"/><circle cx="125" cy="124.4" r="46" fill="#e65c5c"/><circle cx="125" cy="124.4" r="38" fill="#e84c4c"/><circle cx="125" cy="124.4" r="30" fill="#ec4040"/><circle cx="125" cy="124.4" r="22" fill="#f03232"/></g><rect x="0.5" y="0.5" width="249" height="249" fill="none" stroke="#a8a8a8"/></svg>
<div class="a" style="left:791px;top:271px;width:5px;height:247px;border-radius:3px;background:#1a8ef0;border:1px solid #0a4f90;box-sizing:border-box"></div>
<div class="a thumb" style="left:787px;top:270px"></div>
<div class="a" style="left:1073px;top:271px;width:5px;height:247px;border-radius:3px;background:#1a8ef0;border:1px solid #0a4f90;box-sizing:border-box"></div>
<div class="a thumb" style="left:1069px;top:270px"></div>
<div class="a" style="left:1355px;top:271px;width:5px;height:247px;border-radius:3px;background:#1a8ef0;border:1px solid #0a4f90;box-sizing:border-box"></div>
<div class="a thumb" style="left:1351px;top:270px"></div>
<div class="t" style="left:530px;top:524px;">Schwarz-Start:</div>
<div class="a spin" style="left:722px;top:520px;width:58px;height:21px"><span style="position:absolute;right:20px;top:3px;color:#111">0 %</span><div class="sb" style="left:43px;height:19px"><i class="up" style="border-bottom-color:#555"></i><i class="dn" style="border-top-color:#a8a8a8"></i></div></div>
<div class="t" style="left:812px;top:524px;">Schwarz-Breite:</div>
<div class="a spin" style="left:1004px;top:520px;width:58px;height:21px"><span style="position:absolute;right:20px;top:3px;color:#111">80 %</span><div class="sb" style="left:43px;height:19px"><i class="up" style="border-bottom-color:#555"></i><i class="dn" style="border-top-color:#555"></i></div></div>
<div class="t" style="left:1094px;top:524px;">GCR-Wert:</div>
<div class="a spin" style="left:1286px;top:520px;width:58px;height:21px"><span style="position:absolute;right:20px;top:3px;color:#111">79 %</span><div class="sb" style="left:43px;height:19px"><i class="up" style="border-bottom-color:#555"></i><i class="dn" style="border-top-color:#555"></i></div></div>
<div class="a" style="left:6px;top:597px;width:48px;height:48px;box-sizing:border-box;background:#b8b8b8;border:1px solid #aaa;border-radius:6px"></div>
<svg class="a" style="left:6px;top:597px" width="48" height="48" viewBox="0 0 48 48"><g fill="#fff"><path d="M24 4.8L28.9 11.2H26.2V14.5L28.9 18H26.2L24 20.6L21.8 18H19.1L21.8 14.5V11.2H19.1Z" transform="rotate(0 24 24)"/><path d="M24 4.8L28.9 11.2H26.2V14.5L28.9 18H26.2L24 20.6L21.8 18H19.1L21.8 14.5V11.2H19.1Z" transform="rotate(90 24 24)"/><path d="M24 4.8L28.9 11.2H26.2V14.5L28.9 18H26.2L24 20.6L21.8 18H19.1L21.8 14.5V11.2H19.1Z" transform="rotate(180 24 24)"/><path d="M24 4.8L28.9 11.2H26.2V14.5L28.9 18H26.2L24 20.6L21.8 18H19.1L21.8 14.5V11.2H19.1Z" transform="rotate(270 24 24)"/></g><circle cx="24" cy="24" r="3.3" fill="#ee1111"/></svg>
<div class="b" style="left:60px;top:615px;">Mapping</div>
<div class="b" style="left:134px;top:612px;">Perzeptive Tabelle</div>
<div class="t" style="left:134px;top:650px;">Methode</div>
<div class="a combo" style="left:200px;top:645px;width:130px;height:23px"><span style="position:absolute;left:4px;top:4px;color:#222">Standard</span><i class="tri" style="right:7px;top:9px;border-top-color:#777"></i></div>
<div class="a" style="left:336px;top:649px;width:14px;height:14px;box-sizing:border-box;border:1px solid #bcbcbc;background:#e7e7e7"></div>
<div class="t" style="left:355px;top:650px;">Schwarz erhalten</div>
<div class="a" style="left:456px;top:649px;width:14px;height:14px;box-sizing:border-box;border:1px solid #bcbcbc;background:#e7e7e7"></div>
<div class="t" style="left:475px;top:650px;">Grau erhalten</div>
<div class="t" style="left:134px;top:690px;">Buntheit</div>
<div class="a" style="left:201px;top:694px;width:248px;height:5px;border-radius:3px;background:#d6d6d6;border:1px solid #b8b8b8;box-sizing:border-box"></div>
<div class="a" style="left:201px;top:694px;width:135px;height:5px;border-radius:3px;background:#1a8ef0;border:1px solid #0a4f90;box-sizing:border-box"></div>
<div class="a thumb" style="left:330px;top:690px"></div>
<div class="a spin" style="left:456px;top:686px;width:63px;height:21px"><span style="position:absolute;right:20px;top:3px;color:#111">10 %</span><div class="sb" style="left:48px;height:19px"><i class="up" style="border-bottom-color:#555"></i><i class="dn" style="border-top-color:#555"></i></div></div>
<div class="a" style="left:200px;top:729px;width:18px;height:12px;background:#858585"></div>
<div class="a" style="left:218px;top:729px;width:31px;height:12px;background:#8c6c6c"></div>
<div class="a" style="left:249px;top:729px;width:11px;height:12px;background:#8c5a6e"></div>
<div class="a" style="left:260px;top:729px;width:21px;height:12px;background:#8c5a5a"></div>
<div class="a" style="left:281px;top:729px;width:74px;height:12px;background:#8a4a4a"></div>
<div class="a" style="left:355px;top:729px;width:38px;height:12px;background:#843030"></div>
<div class="a" style="left:393px;top:729px;width:57px;height:12px;background:#8a1010"></div>
<div class="a" style="left:200px;top:742px;width:21px;height:12px;background:#0a0808"></div>
<div class="a" style="left:221px;top:742px;width:15px;height:12px;background:#1e0c0c"></div>
<div class="a" style="left:236px;top:742px;width:22px;height:12px;background:#321416"></div>
<div class="a" style="left:258px;top:742px;width:22px;height:12px;background:#4e2626"></div>
<div class="a" style="left:280px;top:742px;width:20px;height:12px;background:#6e3838"></div>
<div class="a" style="left:300px;top:742px;width:60px;height:12px;background:#8a4848"></div>
<div class="a" style="left:360px;top:742px;width:13px;height:12px;background:#a04c50"></div>
<div class="a" style="left:373px;top:742px;width:18px;height:12px;background:#b05a5a"></div>
<div class="a" style="left:391px;top:742px;width:12px;height:12px;background:#c06868"></div>
<div class="a" style="left:403px;top:742px;width:12px;height:12px;background:#d06c6c"></div>
<div class="a" style="left:415px;top:742px;width:16px;height:12px;background:#e07878"></div>
<div class="a" style="left:431px;top:742px;width:19px;height:12px;background:#f87878"></div>
<div class="a" style="left:200px;top:741px;width:250px;height:1px;background:#1a0a0a"></div>
<div class="a" style="left:308px;top:725px;width:33px;height:33px;box-sizing:border-box;border-radius:50%;background:#8a4a4a;border:1px solid #2a1414"></div>
<div class="t" style="left:134px;top:780px;">Helligkeit</div>
<div class="a" style="left:201px;top:784px;width:248px;height:5px;border-radius:3px;background:#d6d6d6;border:1px solid #b8b8b8;box-sizing:border-box"></div>
<div class="a" style="left:201px;top:784px;width:124px;height:5px;border-radius:3px;background:#1a8ef0;border:1px solid #0a4f90;box-sizing:border-box"></div>
<div class="a thumb" style="left:319px;top:780px"></div>
<div class="a spin" style="left:456px;top:776px;width:63px;height:21px"><span style="position:absolute;right:20px;top:3px;color:#111">0 %</span><div class="sb" style="left:48px;height:19px"><i class="up" style="border-bottom-color:#555"></i><i class="dn" style="border-top-color:#555"></i></div></div>
<div class="b" style="left:584px;top:612px;">Sättigungstabelle</div>
<div class="t" style="left:584px;top:650px;">Methode</div>
<div class="a combo" style="left:640px;top:645px;width:130px;height:23px"><span style="position:absolute;left:4px;top:4px;color:#222">Standard</span><i class="tri" style="right:7px;top:9px;border-top-color:#777"></i></div>
<div class="a" style="left:776px;top:649px;width:14px;height:14px;box-sizing:border-box;border:1px solid #bcbcbc;background:#e7e7e7"></div>
<div class="t" style="left:795px;top:650px;">Schwarz erhalten</div>
<div class="a" style="left:896px;top:649px;width:14px;height:14px;box-sizing:border-box;border:1px solid #bcbcbc;background:#e7e7e7"></div>
<div class="t" style="left:915px;top:650px;">Grau erhalten</div>
<div class="t" style="left:584px;top:690px;">Buntheit</div>
<div class="a" style="left:641px;top:694px;width:248px;height:5px;border-radius:3px;background:#d6d6d6;border:1px solid #b8b8b8;box-sizing:border-box"></div>
<div class="a" style="left:641px;top:694px;width:161px;height:5px;border-radius:3px;background:#1a8ef0;border:1px solid #0a4f90;box-sizing:border-box"></div>
<div class="a thumb" style="left:796px;top:690px"></div>
<div class="a spin" style="left:896px;top:686px;width:63px;height:21px"><span style="position:absolute;right:20px;top:3px;color:#111">32 %</span><div class="sb" style="left:48px;height:19px"><i class="up" style="border-bottom-color:#555"></i><i class="dn" style="border-top-color:#555"></i></div></div>
<div class="a" style="left:640px;top:729px;width:18px;height:12px;background:#858585"></div>
<div class="a" style="left:658px;top:729px;width:31px;height:12px;background:#8c6c6c"></div>
<div class="a" style="left:689px;top:729px;width:11px;height:12px;background:#8c5a6e"></div>
<div class="a" style="left:700px;top:729px;width:21px;height:12px;background:#8c5a5a"></div>
<div class="a" style="left:721px;top:729px;width:74px;height:12px;background:#8a4a4a"></div>
<div class="a" style="left:795px;top:729px;width:38px;height:12px;background:#843030"></div>
<div class="a" style="left:833px;top:729px;width:57px;height:12px;background:#8a1010"></div>
<div class="a" style="left:640px;top:742px;width:21px;height:12px;background:#0a0808"></div>
<div class="a" style="left:661px;top:742px;width:15px;height:12px;background:#1e0c0c"></div>
<div class="a" style="left:676px;top:742px;width:22px;height:12px;background:#321416"></div>
<div class="a" style="left:698px;top:742px;width:22px;height:12px;background:#4e2626"></div>
<div class="a" style="left:720px;top:742px;width:20px;height:12px;background:#6e3838"></div>
<div class="a" style="left:740px;top:742px;width:60px;height:12px;background:#8a4848"></div>
<div class="a" style="left:800px;top:742px;width:13px;height:12px;background:#a04c50"></div>
<div class="a" style="left:813px;top:742px;width:18px;height:12px;background:#b05a5a"></div>
<div class="a" style="left:831px;top:742px;width:12px;height:12px;background:#c06868"></div>
<div class="a" style="left:843px;top:742px;width:12px;height:12px;background:#d06c6c"></div>
<div class="a" style="left:855px;top:742px;width:16px;height:12px;background:#e07878"></div>
<div class="a" style="left:871px;top:742px;width:19px;height:12px;background:#f87878"></div>
<div class="a" style="left:640px;top:741px;width:250px;height:1px;background:#1a0a0a"></div>
<div class="a" style="left:748px;top:725px;width:33px;height:33px;box-sizing:border-box;border-radius:50%;background:#8a4a4a;border:1px solid #2a1414"></div>
<div class="t" style="left:584px;top:780px;">Helligkeit</div>
<div class="a" style="left:641px;top:784px;width:248px;height:5px;border-radius:3px;background:#d6d6d6;border:1px solid #b8b8b8;box-sizing:border-box"></div>
<div class="a" style="left:641px;top:784px;width:100px;height:5px;border-radius:3px;background:#1a8ef0;border:1px solid #0a4f90;box-sizing:border-box"></div>
<div class="a thumb" style="left:735px;top:780px"></div>
<div class="a spin" style="left:896px;top:776px;width:63px;height:21px"><span style="position:absolute;right:20px;top:3px;color:#111">-20 %</span><div class="sb" style="left:48px;height:19px"><i class="up" style="border-bottom-color:#555"></i><i class="dn" style="border-top-color:#555"></i></div></div>
<div class="a" style="left:1057px;top:121px;width:330px;height:209px;box-sizing:border-box;background:#fff;border:1px solid #9a9a9a;border-bottom-color:#8a8a8a;box-shadow:0 2px 2px rgba(0,0,0,0.3)"></div>
<div class="a" style="left:1058px;top:191px;width:318px;height:23px;box-sizing:border-box;background:#e6e6e6;border:1px solid #a0a0a0;border-right:none"></div>
<div class="t" style="left:1065px;top:127px;color:#222">Produktion</div>
<div class="t" style="left:1065px;top:150px;color:#222">Produktion K-Plus</div>
<div class="t" style="left:1065px;top:173px;color:#222">Production Vivid</div>
<div class="t" style="left:1065px;top:196px;color:#222">Production Vivid K-Plus</div>
<div class="t" style="left:1065px;top:219px;color:#222">Inkjet Proof</div>
<div class="t" style="left:1065px;top:242px;color:#222">Office K-Plus</div>
<div class="t" style="left:1065px;top:265px;color:#222">Neutralize OBA</div>
<div class="t" style="left:1065px;top:288px;color:#b4b4b4">Custom</div>
<div class="t" style="left:1077px;top:311px;color:#b4b4b4">- - - - -&nbsp;&nbsp;&nbsp; Benutzerdefinierte Einstellungen &nbsp;&nbsp;&nbsp;- - - - -</div>
</body></html>
